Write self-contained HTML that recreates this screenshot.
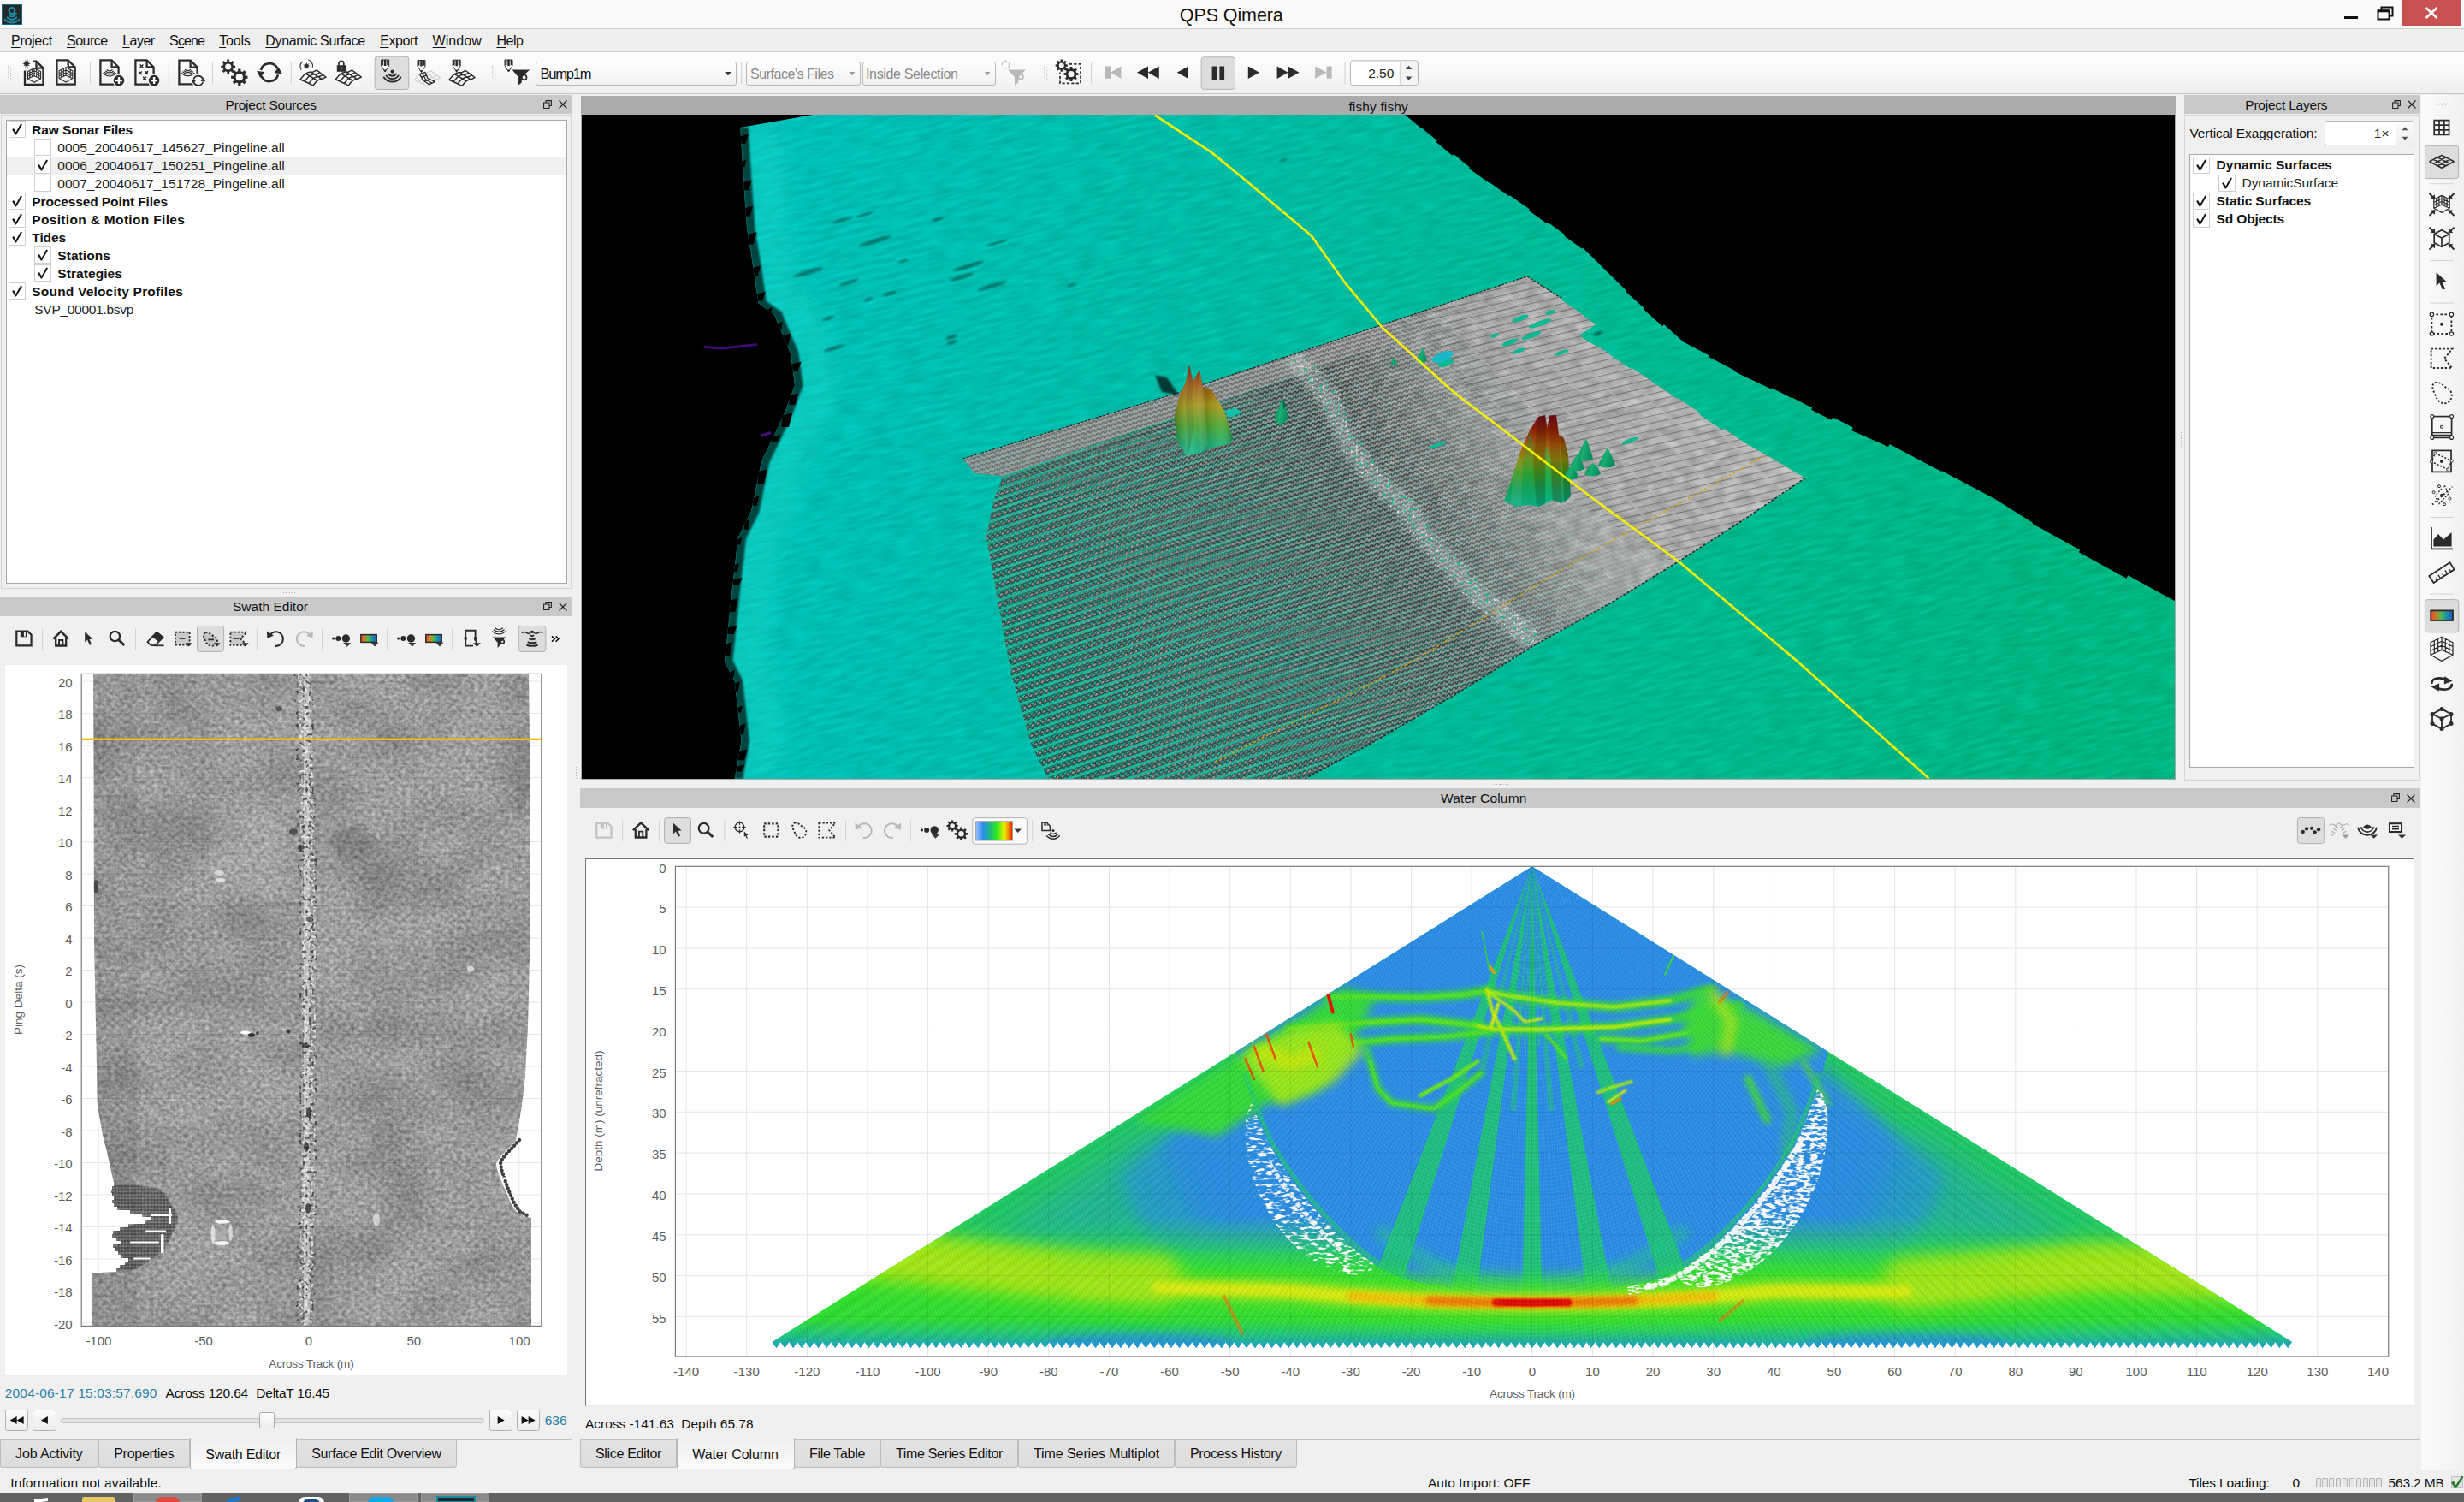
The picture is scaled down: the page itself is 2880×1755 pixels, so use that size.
<!DOCTYPE html>
<html lang="en"><head><meta charset="utf-8"><title>QPS Qimera</title><style>
html,body{margin:0;padding:0;}
body{width:2880px;height:1755px;overflow:hidden;background:#f0f0f0;font-family:"Liberation Sans", sans-serif;position:relative;}
.a{position:absolute;display:block;}
.t{position:absolute;white-space:pre;font-family:"Liberation Sans", sans-serif;}
u{text-decoration:underline;text-underline-offset:1.5px;text-decoration-thickness:1px;}
</style></head>
<body>
<div class="a" style="left:0.00px;top:0.00px;width:2880.00px;height:33.00px;background:#fafafa;"></div>
<div class="a" style="left:0.00px;top:33.00px;width:2880.00px;height:1.00px;background:#d2d2d2;"></div>
<div class="a" style="left:2.00px;top:5.00px;width:24.00px;height:24.00px;background:#262828;border:1.5px solid #0f6a82;box-sizing:border-box;"></div>
<svg class="a" style="left:2.00px;top:5.00px;" width="24.00" height="24.00" viewBox="0 0 24 24"><g fill="none" stroke="#1e8ba8" stroke-linecap="round"><ellipse cx="12" cy="7.6" rx="3.3" ry="3.6" stroke-width="2.2"/><path d="M14 10.5L17 11" stroke-width="1.8"/><path d="M8.8 13.2Q12 15.6 15.2 13.2" stroke-width="1.9"/><path d="M6.4 15.5Q12 20.2 17.6 15.5" stroke-width="1.9"/><path d="M3.8 18Q12 25 20.2 18" stroke-width="1.9"/></g></svg>
<span class="t" style="left:1378.80px;top:4.30px;font-size:21.5px;line-height:28px;color:#111;letter-spacing:-0.097px;">QPS Qimera</span>
<div class="a" style="left:2740.00px;top:18.50px;width:16.00px;height:3.60px;background:#111;"></div>
<svg class="a" style="left:2778.00px;top:6.50px;" width="20.00" height="17.00" viewBox="0 0 20 17"><path d="M5.5 4.5V1.5H18.5V11.5H15.5" fill="none" stroke="#111" stroke-width="2"/><path d="M1.5 5.5H14.5V15.5H1.5Z" fill="none" stroke="#111" stroke-width="2"/><path d="M1.5 5.8H14.5" stroke="#111" stroke-width="3"/></svg>
<div class="a" style="left:2808.00px;top:0.00px;width:68.50px;height:30.00px;background:#c75050;"></div>
<svg class="a" style="left:2834.00px;top:7.50px;" width="16.00" height="14.00" viewBox="0 0 16 14"><path d="M1.5 1L14.5 13M14.5 1L1.5 13" stroke="#fff" stroke-width="2.6" fill="none"/></svg>
<div class="a" style="left:0.00px;top:34.00px;width:2880.00px;height:25.50px;background:#efefef;"></div>
<div class="a" style="left:0.00px;top:59.50px;width:2880.00px;height:1.00px;background:#d4d4d4;"></div>
<span class="t" style="left:13.10px;top:36.70px;font-size:16px;line-height:21px;color:#111;letter-spacing:-0.300px;"><u>P</u>roject</span>
<span class="t" style="left:78.00px;top:36.70px;font-size:16px;line-height:21px;color:#111;letter-spacing:-0.501px;"><u>S</u>ource</span>
<span class="t" style="left:143.20px;top:36.70px;font-size:16px;line-height:21px;color:#111;letter-spacing:-0.526px;"><u>L</u>ayer</span>
<span class="t" style="left:198.10px;top:36.70px;font-size:16px;line-height:21px;color:#111;letter-spacing:-0.895px;">S<u>c</u>ene</span>
<span class="t" style="left:256.30px;top:36.70px;font-size:16px;line-height:21px;color:#111;letter-spacing:-0.232px;"><u>T</u>ools</span>
<span class="t" style="left:310.30px;top:36.70px;font-size:16px;line-height:21px;color:#111;letter-spacing:-0.362px;"><u>D</u>ynamic Surface</span>
<span class="t" style="left:444.20px;top:36.70px;font-size:16px;line-height:21px;color:#111;letter-spacing:-0.408px;"><u>E</u>xport</span>
<span class="t" style="left:505.60px;top:36.70px;font-size:16px;line-height:21px;color:#111;letter-spacing:0.046px;"><u>W</u>indow</span>
<span class="t" style="left:580.40px;top:36.70px;font-size:16px;line-height:21px;color:#111;letter-spacing:-0.430px;"><u>H</u>elp</span>
<div class="a" style="left:0.00px;top:60.50px;width:2880.00px;height:48.50px;background:linear-gradient(#fdfdfd,#f9f9f9 40%,#efefef);"></div>
<div class="a" style="left:0.00px;top:109.00px;width:2880.00px;height:1.00px;background:#c6c6c6;"></div>
<div class="a" style="left:0.00px;top:111.00px;width:668.00px;height:22.20px;background:#c9c9c9;"></div>
<span class="t" style="left:263.60px;top:112.60px;font-size:15.5px;line-height:20px;color:#111;letter-spacing:-0.215px;">Project Sources</span>
<svg class="a" style="left:634.50px;top:116.90px;" width="10.00" height="10.00" viewBox="0 0 10 10"><path d="M3 3V0.6H9.4V6.4H7M0.6 3H7V9.4H0.6Z" fill="none" stroke="#222" stroke-width="1.05"/></svg>
<svg class="a" style="left:652.50px;top:117.10px;" width="10.00" height="10.00" viewBox="0 0 10 10"><path d="M0.5 0.5L9.5 9.5M9.5 0.5L0.5 9.5" stroke="#222" stroke-width="1.15" fill="none"/></svg>
<div class="a" style="left:0.50px;top:134.00px;width:667.50px;height:553.50px;border:1px solid #d6d6d6;box-sizing:border-box;"></div>
<div class="a" style="left:6.50px;top:140.00px;width:656.00px;height:541.50px;background:#fff;border:1px solid #a8a8a8;box-sizing:border-box;"></div>
<div class="a" style="left:10.20px;top:141.30px;width:20.00px;height:20.00px;background:#fff;border:1px solid #cfcfcf;box-sizing:border-box;"></div>
<svg class="a" style="left:10.20px;top:141.30px;" width="20.00" height="20.00" viewBox="0 0 20 20"><path d="M4.2 10.2L6 9L8.6 13.4L14.2 3.6L16 4.4L9 16.6H7.8Z" fill="#111"/></svg>
<span class="t" style="left:37.30px;top:141.60px;font-size:15.5px;line-height:20px;color:#111;font-weight:bold;letter-spacing:-0.129px;">Raw Sonar Files</span>
<div class="a" style="left:40.30px;top:162.30px;width:20.00px;height:20.00px;background:#fff;border:1px solid #cfcfcf;box-sizing:border-box;"></div>
<span class="t" style="left:67.30px;top:162.60px;font-size:15.5px;line-height:20px;color:#222;letter-spacing:0.020px;">0005_20040617_145627_Pingeline.all</span>
<div class="a" style="left:7.50px;top:182.80px;width:654.00px;height:21.00px;background:#f0f0f0;"></div>
<div class="a" style="left:40.30px;top:183.30px;width:20.00px;height:20.00px;background:#fff;border:1px solid #cfcfcf;box-sizing:border-box;"></div>
<svg class="a" style="left:40.30px;top:183.30px;" width="20.00" height="20.00" viewBox="0 0 20 20"><path d="M4.2 10.2L6 9L8.6 13.4L14.2 3.6L16 4.4L9 16.6H7.8Z" fill="#111"/></svg>
<span class="t" style="left:67.30px;top:183.60px;font-size:15.5px;line-height:20px;color:#222;letter-spacing:0.020px;">0006_20040617_150251_Pingeline.all</span>
<div class="a" style="left:40.30px;top:204.30px;width:20.00px;height:20.00px;background:#fff;border:1px solid #cfcfcf;box-sizing:border-box;"></div>
<span class="t" style="left:67.30px;top:204.60px;font-size:15.5px;line-height:20px;color:#222;letter-spacing:0.020px;">0007_20040617_151728_Pingeline.all</span>
<div class="a" style="left:10.20px;top:225.30px;width:20.00px;height:20.00px;background:#fff;border:1px solid #cfcfcf;box-sizing:border-box;"></div>
<svg class="a" style="left:10.20px;top:225.30px;" width="20.00" height="20.00" viewBox="0 0 20 20"><path d="M4.2 10.2L6 9L8.6 13.4L14.2 3.6L16 4.4L9 16.6H7.8Z" fill="#111"/></svg>
<span class="t" style="left:37.30px;top:225.60px;font-size:15.5px;line-height:20px;color:#111;font-weight:bold;letter-spacing:-0.114px;">Processed Point Files</span>
<div class="a" style="left:10.20px;top:246.30px;width:20.00px;height:20.00px;background:#fff;border:1px solid #cfcfcf;box-sizing:border-box;"></div>
<svg class="a" style="left:10.20px;top:246.30px;" width="20.00" height="20.00" viewBox="0 0 20 20"><path d="M4.2 10.2L6 9L8.6 13.4L14.2 3.6L16 4.4L9 16.6H7.8Z" fill="#111"/></svg>
<span class="t" style="left:37.30px;top:246.60px;font-size:15.5px;line-height:20px;color:#111;font-weight:bold;letter-spacing:0.328px;">Position &amp; Motion Files</span>
<div class="a" style="left:10.20px;top:267.30px;width:20.00px;height:20.00px;background:#fff;border:1px solid #cfcfcf;box-sizing:border-box;"></div>
<svg class="a" style="left:10.20px;top:267.30px;" width="20.00" height="20.00" viewBox="0 0 20 20"><path d="M4.2 10.2L6 9L8.6 13.4L14.2 3.6L16 4.4L9 16.6H7.8Z" fill="#111"/></svg>
<span class="t" style="left:37.30px;top:267.60px;font-size:15.5px;line-height:20px;color:#111;font-weight:bold;letter-spacing:-0.101px;">Tides</span>
<div class="a" style="left:40.30px;top:288.30px;width:20.00px;height:20.00px;background:#fff;border:1px solid #cfcfcf;box-sizing:border-box;"></div>
<svg class="a" style="left:40.30px;top:288.30px;" width="20.00" height="20.00" viewBox="0 0 20 20"><path d="M4.2 10.2L6 9L8.6 13.4L14.2 3.6L16 4.4L9 16.6H7.8Z" fill="#111"/></svg>
<span class="t" style="left:67.30px;top:288.60px;font-size:15.5px;line-height:20px;color:#111;font-weight:bold;letter-spacing:0.055px;">Stations</span>
<div class="a" style="left:40.30px;top:309.30px;width:20.00px;height:20.00px;background:#fff;border:1px solid #cfcfcf;box-sizing:border-box;"></div>
<svg class="a" style="left:40.30px;top:309.30px;" width="20.00" height="20.00" viewBox="0 0 20 20"><path d="M4.2 10.2L6 9L8.6 13.4L14.2 3.6L16 4.4L9 16.6H7.8Z" fill="#111"/></svg>
<span class="t" style="left:67.30px;top:309.60px;font-size:15.5px;line-height:20px;color:#111;font-weight:bold;letter-spacing:0.075px;">Strategies</span>
<div class="a" style="left:10.20px;top:330.30px;width:20.00px;height:20.00px;background:#fff;border:1px solid #cfcfcf;box-sizing:border-box;"></div>
<svg class="a" style="left:10.20px;top:330.30px;" width="20.00" height="20.00" viewBox="0 0 20 20"><path d="M4.2 10.2L6 9L8.6 13.4L14.2 3.6L16 4.4L9 16.6H7.8Z" fill="#111"/></svg>
<span class="t" style="left:37.30px;top:330.60px;font-size:15.5px;line-height:20px;color:#111;font-weight:bold;letter-spacing:0.193px;">Sound Velocity Profiles</span>
<span class="t" style="left:40.30px;top:351.60px;font-size:15.5px;line-height:20px;color:#222;letter-spacing:-0.293px;">SVP_00001.bsvp</span>
<div class="a" style="left:328.00px;top:692.00px;width:1.20px;height:1.20px;background:#b0b0b0;"></div>
<div class="a" style="left:331.20px;top:692.00px;width:1.20px;height:1.20px;background:#b0b0b0;"></div>
<div class="a" style="left:334.40px;top:692.00px;width:1.20px;height:1.20px;background:#b0b0b0;"></div>
<div class="a" style="left:337.60px;top:692.00px;width:1.20px;height:1.20px;background:#b0b0b0;"></div>
<div class="a" style="left:340.80px;top:692.00px;width:1.20px;height:1.20px;background:#b0b0b0;"></div>
<div class="a" style="left:344.00px;top:692.00px;width:1.20px;height:1.20px;background:#b0b0b0;"></div>
<div class="a" style="left:1746.00px;top:915.60px;width:1.20px;height:1.20px;background:#b0b0b0;"></div>
<div class="a" style="left:1749.20px;top:915.60px;width:1.20px;height:1.20px;background:#b0b0b0;"></div>
<div class="a" style="left:1752.40px;top:915.60px;width:1.20px;height:1.20px;background:#b0b0b0;"></div>
<div class="a" style="left:1755.60px;top:915.60px;width:1.20px;height:1.20px;background:#b0b0b0;"></div>
<div class="a" style="left:1758.80px;top:915.60px;width:1.20px;height:1.20px;background:#b0b0b0;"></div>
<div class="a" style="left:1762.00px;top:915.60px;width:1.20px;height:1.20px;background:#b0b0b0;"></div>
<div class="a" style="left:2548.60px;top:505.00px;width:1.20px;height:1.20px;background:#b8b8b8;"></div>
<div class="a" style="left:673.00px;top:896.00px;width:1.20px;height:1.20px;background:#b8b8b8;"></div>
<div class="a" style="left:2548.60px;top:508.20px;width:1.20px;height:1.20px;background:#b8b8b8;"></div>
<div class="a" style="left:673.00px;top:899.20px;width:1.20px;height:1.20px;background:#b8b8b8;"></div>
<div class="a" style="left:2548.60px;top:511.40px;width:1.20px;height:1.20px;background:#b8b8b8;"></div>
<div class="a" style="left:673.00px;top:902.40px;width:1.20px;height:1.20px;background:#b8b8b8;"></div>
<div class="a" style="left:2548.60px;top:514.60px;width:1.20px;height:1.20px;background:#b8b8b8;"></div>
<div class="a" style="left:673.00px;top:905.60px;width:1.20px;height:1.20px;background:#b8b8b8;"></div>
<div class="a" style="left:2548.60px;top:517.80px;width:1.20px;height:1.20px;background:#b8b8b8;"></div>
<div class="a" style="left:673.00px;top:908.80px;width:1.20px;height:1.20px;background:#b8b8b8;"></div>
<div class="a" style="left:2548.60px;top:521.00px;width:1.20px;height:1.20px;background:#b8b8b8;"></div>
<div class="a" style="left:673.00px;top:912.00px;width:1.20px;height:1.20px;background:#b8b8b8;"></div>
<div class="a" style="left:0.00px;top:697.20px;width:668.00px;height:22.80px;background:#c9c9c9;"></div>
<span class="t" style="left:272.00px;top:699.10px;font-size:15.5px;line-height:20px;color:#111;letter-spacing:0.009px;">Swath Editor</span>
<svg class="a" style="left:634.50px;top:703.40px;" width="10.00" height="10.00" viewBox="0 0 10 10"><path d="M3 3V0.6H9.4V6.4H7M0.6 3H7V9.4H0.6Z" fill="none" stroke="#222" stroke-width="1.05"/></svg>
<svg class="a" style="left:652.50px;top:703.60px;" width="10.00" height="10.00" viewBox="0 0 10 10"><path d="M0.5 0.5L9.5 9.5M9.5 0.5L0.5 9.5" stroke="#222" stroke-width="1.15" fill="none"/></svg>
<span class="t" style="left:5.80px;top:1617.50px;font-size:15.5px;line-height:20px;color:#2a7fa8;letter-spacing:0.160px;">2004-06-17 15:03:57.690</span>
<span class="t" style="left:193.50px;top:1617.50px;font-size:15.5px;line-height:20px;color:#111;letter-spacing:-0.200px;">Across 120.64</span>
<span class="t" style="left:299.30px;top:1617.50px;font-size:15.5px;line-height:20px;color:#111;letter-spacing:-0.231px;">DeltaT 16.45</span>
<div class="a" style="left:6.00px;top:1646.60px;width:27.30px;height:25.80px;background:linear-gradient(#fbfbfb,#ececec);border:1px solid #b4b4b4;box-sizing:border-box;border-radius:2.5px;"></div>
<svg class="a" style="left:0;top:0" width="700" height="1755"><path d="M19.65 1654.9V1664.1L11.649999999999999 1659.5ZM27.65 1654.9V1664.1L19.65 1659.5Z" fill="#111"/></svg>
<div class="a" style="left:38.20px;top:1646.60px;width:27.40px;height:25.80px;background:linear-gradient(#fbfbfb,#ececec);border:1px solid #b4b4b4;box-sizing:border-box;border-radius:2.5px;"></div>
<svg class="a" style="left:0;top:0" width="700" height="1755"><path d="M55.9 1654.9V1664.1L47.9 1659.5Z" fill="#111"/></svg>
<div class="a" style="left:572.20px;top:1646.60px;width:27.00px;height:25.80px;background:linear-gradient(#fbfbfb,#ececec);border:1px solid #b4b4b4;box-sizing:border-box;border-radius:2.5px;"></div>
<svg class="a" style="left:0;top:0" width="700" height="1755"><path d="M581.7 1654.9V1664.1L589.7 1659.5Z" fill="#111"/></svg>
<div class="a" style="left:603.80px;top:1646.60px;width:27.70px;height:25.80px;background:linear-gradient(#fbfbfb,#ececec);border:1px solid #b4b4b4;box-sizing:border-box;border-radius:2.5px;"></div>
<svg class="a" style="left:0;top:0" width="700" height="1755"><path d="M617.65 1654.9V1664.1L625.65 1659.5ZM609.65 1654.9V1664.1L617.65 1659.5Z" fill="#111"/></svg>
<div class="a" style="left:71.20px;top:1656.50px;width:495.00px;height:6.50px;background:linear-gradient(#dcdcdc,#efefef);border:1px solid #c4c4c4;box-sizing:border-box;border-radius:3px;"></div>
<div class="a" style="left:302.60px;top:1649.50px;width:18.80px;height:19.50px;background:linear-gradient(#fdfdfd,#ededed);border:1px solid #a8a8a8;box-sizing:border-box;border-radius:2.5px;"></div>
<span class="t" style="left:636.80px;top:1650.00px;font-size:15.5px;line-height:20px;color:#2a7fa8;letter-spacing:-0.058px;">636</span>
<div class="a" style="left:0.00px;top:1681.00px;width:668.00px;height:1.00px;background:#c2c2c2;"></div>
<div class="a" style="left:0.00px;top:1681.50px;width:115.40px;height:33.00px;background:linear-gradient(#e3e3e3,#dcdcdc);border:1px solid #bdbdbd;box-sizing:border-box;border-top:none;border-radius:0 0 3px 3px;"></div>
<span class="t" style="left:18.00px;top:1687.70px;font-size:16px;line-height:21px;color:#111;letter-spacing:-0.119px;">Job Activity</span>
<div class="a" style="left:115.40px;top:1681.50px;width:106.70px;height:33.00px;background:linear-gradient(#e3e3e3,#dcdcdc);border:1px solid #bdbdbd;box-sizing:border-box;border-top:none;border-radius:0 0 3px 3px;"></div>
<span class="t" style="left:133.20px;top:1687.70px;font-size:16px;line-height:21px;color:#111;letter-spacing:-0.272px;">Properties</span>
<div class="a" style="left:346.40px;top:1681.50px;width:187.20px;height:33.00px;background:linear-gradient(#e3e3e3,#dcdcdc);border:1px solid #bdbdbd;box-sizing:border-box;border-top:none;border-radius:0 0 3px 3px;"></div>
<span class="t" style="left:364.20px;top:1687.70px;font-size:16px;line-height:21px;color:#111;letter-spacing:-0.318px;">Surface Edit Overview</span>
<div class="a" style="left:221.60px;top:1679.50px;width:125.30px;height:37.50px;background:linear-gradient(#f0f0f0,#fbfbfb);border:1px solid #b4b4b4;box-sizing:border-box;border-top:none;border-radius:0 0 3px 3px;"></div>
<span class="t" style="left:240.30px;top:1689.00px;font-size:16px;line-height:21px;color:#111;letter-spacing:-0.252px;">Swath Editor</span>
<div class="a" style="left:678.70px;top:111.50px;width:1864.30px;height:22.50px;background:#ababab;"></div>
<span class="t" style="left:1576.40px;top:114.50px;font-size:15.5px;line-height:20px;color:#111;letter-spacing:0.140px;">fishy fishy</span>
<div class="a" style="left:678.70px;top:134.00px;width:1864.30px;height:777.00px;background:#a9a9a9;"></div>
<div class="a" style="left:678.00px;top:921.30px;width:2150.00px;height:22.70px;background:#c9c9c9;"></div>
<span class="t" style="left:1684.00px;top:923.15px;font-size:15.5px;line-height:20px;color:#111;letter-spacing:0.168px;">Water Column</span>
<svg class="a" style="left:2794.50px;top:927.45px;" width="10.00" height="10.00" viewBox="0 0 10 10"><path d="M3 3V0.6H9.4V6.4H7M0.6 3H7V9.4H0.6Z" fill="none" stroke="#222" stroke-width="1.05"/></svg>
<svg class="a" style="left:2812.50px;top:927.65px;" width="10.00" height="10.00" viewBox="0 0 10 10"><path d="M0.5 0.5L9.5 9.5M9.5 0.5L0.5 9.5" stroke="#222" stroke-width="1.15" fill="none"/></svg>
<div class="a" style="left:684.00px;top:1003.00px;width:2138.00px;height:639.50px;background:#fff;box-sizing:border-box;border-left:1.5px solid #767676;border-top:1.5px solid #767676;border-right:1px solid #b8b8b8;border-bottom:1px solid #e8e8e8;"></div>
<span class="t" style="left:684.00px;top:1653.80px;font-size:15.5px;line-height:20px;color:#111;letter-spacing:-0.031px;">Across -141.63  Depth 65.78</span>
<div class="a" style="left:678.00px;top:1681.00px;width:2150.50px;height:1.00px;background:#c2c2c2;"></div>
<div class="a" style="left:678.30px;top:1681.50px;width:113.00px;height:33.00px;background:linear-gradient(#e3e3e3,#dcdcdc);border:1px solid #bdbdbd;box-sizing:border-box;border-top:none;border-radius:0 0 3px 3px;"></div>
<span class="t" style="left:696.00px;top:1687.70px;font-size:16px;line-height:21px;color:#111;letter-spacing:-0.327px;">Slice Editor</span>
<div class="a" style="left:928.40px;top:1681.50px;width:100.90px;height:33.00px;background:linear-gradient(#e3e3e3,#dcdcdc);border:1px solid #bdbdbd;box-sizing:border-box;border-top:none;border-radius:0 0 3px 3px;"></div>
<span class="t" style="left:946.00px;top:1687.70px;font-size:16px;line-height:21px;color:#111;letter-spacing:-0.319px;">File Table</span>
<div class="a" style="left:1029.30px;top:1681.50px;width:160.90px;height:33.00px;background:linear-gradient(#e3e3e3,#dcdcdc);border:1px solid #bdbdbd;box-sizing:border-box;border-top:none;border-radius:0 0 3px 3px;"></div>
<span class="t" style="left:1047.00px;top:1687.70px;font-size:16px;line-height:21px;color:#111;letter-spacing:-0.333px;">Time Series Editor</span>
<div class="a" style="left:1190.20px;top:1681.50px;width:183.20px;height:33.00px;background:linear-gradient(#e3e3e3,#dcdcdc);border:1px solid #bdbdbd;box-sizing:border-box;border-top:none;border-radius:0 0 3px 3px;"></div>
<span class="t" style="left:1208.00px;top:1687.70px;font-size:16px;line-height:21px;color:#111;letter-spacing:-0.085px;">Time Series Multiplot</span>
<div class="a" style="left:1373.40px;top:1681.50px;width:142.20px;height:33.00px;background:linear-gradient(#e3e3e3,#dcdcdc);border:1px solid #bdbdbd;box-sizing:border-box;border-top:none;border-radius:0 0 3px 3px;"></div>
<span class="t" style="left:1391.00px;top:1687.70px;font-size:16px;line-height:21px;color:#111;letter-spacing:-0.335px;">Process History</span>
<div class="a" style="left:790.80px;top:1679.50px;width:138.10px;height:37.50px;background:linear-gradient(#f0f0f0,#fbfbfb);border:1px solid #b4b4b4;box-sizing:border-box;border-top:none;border-radius:0 0 3px 3px;"></div>
<span class="t" style="left:809.30px;top:1689.00px;font-size:16px;line-height:21px;color:#111;letter-spacing:-0.105px;">Water Column</span>
<div class="a" style="left:2553.00px;top:111.00px;width:276.00px;height:22.20px;background:#c9c9c9;"></div>
<span class="t" style="left:2624.30px;top:112.60px;font-size:15.5px;line-height:20px;color:#111;letter-spacing:-0.213px;">Project Layers</span>
<svg class="a" style="left:2795.50px;top:116.90px;" width="10.00" height="10.00" viewBox="0 0 10 10"><path d="M3 3V0.6H9.4V6.4H7M0.6 3H7V9.4H0.6Z" fill="none" stroke="#222" stroke-width="1.05"/></svg>
<svg class="a" style="left:2813.50px;top:117.10px;" width="10.00" height="10.00" viewBox="0 0 10 10"><path d="M0.5 0.5L9.5 9.5M9.5 0.5L0.5 9.5" stroke="#222" stroke-width="1.15" fill="none"/></svg>
<div class="a" style="left:2553.00px;top:134.00px;width:275.00px;height:777.50px;border:1px solid #d6d6d6;box-sizing:border-box;"></div>
<span class="t" style="left:2559.40px;top:146.40px;font-size:15.5px;line-height:20px;color:#111;letter-spacing:-0.077px;">Vertical Exaggeration:</span>
<div class="a" style="left:2717.00px;top:140.50px;width:104.70px;height:29.50px;background:#fff;border:1px solid #b9b9b9;box-sizing:border-box;border-radius:3px;"></div>
<div class="a" style="left:2800.00px;top:141.50px;width:1.00px;height:27.50px;background:#cfcfcf;"></div>
<div class="a" style="left:2801.00px;top:141.50px;width:19.70px;height:27.50px;background:linear-gradient(#fcfcfc,#eee);border-radius:0 3px 3px 0;"></div>
<svg class="a" style="left:2805.00px;top:146.00px;" width="12.00" height="20.00" viewBox="0 0 12 20"><path d="M2.5 6.2L6 2.2L9.5 6.2ZM2.5 13.8L6 17.8L9.5 13.8Z" fill="#555"/></svg>
<span class="t" style="left:2774.81px;top:145.60px;font-size:15.5px;line-height:20px;color:#222;">1×</span>
<div class="a" style="left:2559.40px;top:180.00px;width:262.40px;height:716.50px;background:#fff;border:1px solid #a8a8a8;box-sizing:border-box;"></div>
<div class="a" style="left:2563.20px;top:182.60px;width:20.00px;height:20.00px;background:#fff;border:1px solid #cfcfcf;box-sizing:border-box;"></div>
<svg class="a" style="left:2563.20px;top:182.60px;" width="20.00" height="20.00" viewBox="0 0 20 20"><path d="M4.2 10.2L6 9L8.6 13.4L14.2 3.6L16 4.4L9 16.6H7.8Z" fill="#111"/></svg>
<span class="t" style="left:2590.60px;top:182.90px;font-size:15.5px;line-height:20px;color:#111;font-weight:bold;letter-spacing:0.050px;">Dynamic Surfaces</span>
<div class="a" style="left:2593.30px;top:203.60px;width:20.00px;height:20.00px;background:#fff;border:1px solid #cfcfcf;box-sizing:border-box;"></div>
<svg class="a" style="left:2593.30px;top:203.60px;" width="20.00" height="20.00" viewBox="0 0 20 20"><path d="M4.2 10.2L6 9L8.6 13.4L14.2 3.6L16 4.4L9 16.6H7.8Z" fill="#111"/></svg>
<span class="t" style="left:2620.60px;top:203.90px;font-size:15.5px;line-height:20px;color:#222;letter-spacing:-0.094px;">DynamicSurface</span>
<div class="a" style="left:2563.20px;top:224.60px;width:20.00px;height:20.00px;background:#fff;border:1px solid #cfcfcf;box-sizing:border-box;"></div>
<svg class="a" style="left:2563.20px;top:224.60px;" width="20.00" height="20.00" viewBox="0 0 20 20"><path d="M4.2 10.2L6 9L8.6 13.4L14.2 3.6L16 4.4L9 16.6H7.8Z" fill="#111"/></svg>
<span class="t" style="left:2590.60px;top:224.90px;font-size:15.5px;line-height:20px;color:#111;font-weight:bold;letter-spacing:-0.107px;">Static Surfaces</span>
<div class="a" style="left:2563.20px;top:245.60px;width:20.00px;height:20.00px;background:#fff;border:1px solid #cfcfcf;box-sizing:border-box;"></div>
<svg class="a" style="left:2563.20px;top:245.60px;" width="20.00" height="20.00" viewBox="0 0 20 20"><path d="M4.2 10.2L6 9L8.6 13.4L14.2 3.6L16 4.4L9 16.6H7.8Z" fill="#111"/></svg>
<span class="t" style="left:2590.60px;top:245.90px;font-size:15.5px;line-height:20px;color:#111;font-weight:bold;letter-spacing:-0.157px;">Sd Objects</span>
<div class="a" style="left:2828.30px;top:111.00px;width:1.20px;height:1606.50px;background:#c4c4c4;"></div>
<div class="a" style="left:2829.50px;top:111.00px;width:50.50px;height:1606.50px;background:linear-gradient(90deg,#fbfbfb,#f1f1f1);"></div>
<span class="t" style="left:12.20px;top:1723.00px;font-size:15.5px;line-height:20px;color:#111;letter-spacing:0.135px;">Information not available.</span>
<span class="t" style="left:1669.00px;top:1723.00px;font-size:15.5px;line-height:20px;color:#111;letter-spacing:-0.015px;">Auto Import: OFF</span>
<span class="t" style="left:2558.30px;top:1723.00px;font-size:15.5px;line-height:20px;color:#111;letter-spacing:-0.117px;">Tiles Loading:</span>
<span class="t" style="left:2679.50px;top:1723.00px;font-size:15.5px;line-height:20px;color:#111;letter-spacing:0.875px;">0</span>
<div class="a" style="left:2706.50px;top:1726.50px;width:6.20px;height:11.00px;background:#e6e6e6;border:1px solid #b4b4b4;box-sizing:border-box;border-radius:1px;"></div>
<div class="a" style="left:2714.37px;top:1726.50px;width:6.20px;height:11.00px;background:#e6e6e6;border:1px solid #b4b4b4;box-sizing:border-box;border-radius:1px;"></div>
<div class="a" style="left:2722.24px;top:1726.50px;width:6.20px;height:11.00px;background:#e6e6e6;border:1px solid #b4b4b4;box-sizing:border-box;border-radius:1px;"></div>
<div class="a" style="left:2730.11px;top:1726.50px;width:6.20px;height:11.00px;background:#e6e6e6;border:1px solid #b4b4b4;box-sizing:border-box;border-radius:1px;"></div>
<div class="a" style="left:2737.98px;top:1726.50px;width:6.20px;height:11.00px;background:#e6e6e6;border:1px solid #b4b4b4;box-sizing:border-box;border-radius:1px;"></div>
<div class="a" style="left:2745.85px;top:1726.50px;width:6.20px;height:11.00px;background:#e6e6e6;border:1px solid #b4b4b4;box-sizing:border-box;border-radius:1px;"></div>
<div class="a" style="left:2753.72px;top:1726.50px;width:6.20px;height:11.00px;background:#e6e6e6;border:1px solid #b4b4b4;box-sizing:border-box;border-radius:1px;"></div>
<div class="a" style="left:2761.59px;top:1726.50px;width:6.20px;height:11.00px;background:#e6e6e6;border:1px solid #b4b4b4;box-sizing:border-box;border-radius:1px;"></div>
<div class="a" style="left:2769.46px;top:1726.50px;width:6.20px;height:11.00px;background:#e6e6e6;border:1px solid #b4b4b4;box-sizing:border-box;border-radius:1px;"></div>
<div class="a" style="left:2777.33px;top:1726.50px;width:6.20px;height:11.00px;background:#e6e6e6;border:1px solid #b4b4b4;box-sizing:border-box;border-radius:1px;"></div>
<span class="t" style="left:2791.50px;top:1723.00px;font-size:15.5px;line-height:20px;color:#111;letter-spacing:-0.145px;">563.2 MB</span>
<div class="a" style="left:2864.50px;top:1725.00px;width:14.00px;height:14.00px;background:#e4e4e4;border:1px solid #c0c0c0;box-sizing:border-box;"></div>
<svg class="a" style="left:2862.00px;top:1722.00px;" width="20.00" height="20.00" viewBox="0 0 20 20"><path d="M3 10.5L6 8.5L8.5 13L15.5 2.5L17.5 4L9 17H7.5Z" fill="#2e7d32"/></svg>
<div class="a" style="left:0.00px;top:1744.00px;width:2880.00px;height:11.00px;background:#626262;"></div>
<div class="a" style="left:156.00px;top:1744.60px;width:80.00px;height:10.40px;background:#8a8a8a;border:1px solid #9c9c9c;box-sizing:border-box;"></div>
<div class="a" style="left:408.00px;top:1744.60px;width:80.00px;height:10.40px;background:#8a8a8a;border:1px solid #9c9c9c;box-sizing:border-box;"></div>
<div class="a" style="left:492.00px;top:1744.60px;width:80.00px;height:10.40px;background:#8a8a8a;border:1px solid #9c9c9c;box-sizing:border-box;"></div>
<div class="a" style="left:40.00px;top:1751.00px;width:16.00px;height:4.00px;background:#fff;transform:skewY(-8deg);"></div>
<div class="a" style="left:96.00px;top:1749.00px;width:38.00px;height:6.00px;background:#e8c860;border-radius:2px 2px 0 0;"></div>
<div class="a" style="left:182.00px;top:1748.50px;width:28.00px;height:14.00px;background:#e04a3f;border-radius:14px;"></div>
<div class="a" style="left:266.00px;top:1750.00px;width:14.00px;height:5.00px;background:#1a78d0;transform:skewY(-12deg);"></div>
<div class="a" style="left:349.00px;top:1748.50px;width:30.00px;height:14.00px;background:#fff;border-radius:15px;"></div>
<div class="a" style="left:354.00px;top:1751.50px;width:20.00px;height:10.00px;background:#1d4f86;border-radius:10px;"></div>
<div class="a" style="left:430.00px;top:1748.50px;width:30.00px;height:14.00px;background:#10a8e8;border-radius:15px;"></div>
<div class="a" style="left:510.00px;top:1747.50px;width:46.00px;height:8.00px;background:#1d2b30;border:2px solid #1a8aa0;box-sizing:border-box;"></div>
<svg class="a" style="left:680.00px;top:134.00px;" width="1862.00" height="776.00" viewBox="680 134 1862 776"><defs>
<linearGradient id="tealg" gradientUnits="userSpaceOnUse" x1="900" y1="250" x2="2350" y2="850">
<stop offset="0" stop-color="#08c0b8"/><stop offset="0.3" stop-color="#06bca8"/><stop offset="0.55" stop-color="#05ba98"/><stop offset="1" stop-color="#04b682"/></linearGradient>
<filter id="tex" filterUnits="userSpaceOnUse" x="-400" y="-600" width="3800" height="2800" color-interpolation-filters="sRGB">
<feTurbulence type="fractalNoise" baseFrequency="0.035 0.2" numOctaves="2" seed="11" result="n"/>
<feColorMatrix in="n" type="matrix" values="0 0 0 0 0  0.9 0 0 0 0  0.9 0 0 0 0  0 0 0 0 1" result="g"/>
<feComposite in="SourceGraphic" in2="g" operator="arithmetic" k1="0" k2="1" k3="0.17" k4="-0.078"/>
</filter>
<filter id="tex2" filterUnits="userSpaceOnUse" x="600" y="100" width="2000" height="900" color-interpolation-filters="sRGB">
<feTurbulence type="fractalNoise" baseFrequency="0.06 0.09" numOctaves="2" seed="5" result="n"/>
<feColorMatrix in="n" type="matrix" values="0.9 0 0 0 0  0.9 0 0 0 0  0.9 0 0 0 0  0 0 0 0 1" result="g"/>
<feComposite in="SourceGraphic" in2="g" operator="arithmetic" k1="0" k2="1" k3="0.3" k4="-0.14"/>
</filter>
<filter id="b2"><feGaussianBlur stdDeviation="2"/></filter>
<filter id="b1"><feGaussianBlur stdDeviation="1"/></filter>
<filter id="b4"><feGaussianBlur stdDeviation="4"/></filter>
<filter id="b8" filterUnits="userSpaceOnUse" x="680" y="100" width="700" height="850"><feGaussianBlur stdDeviation="12"/></filter>
<pattern id="dots" patternUnits="userSpaceOnUse" width="6.4" height="5.6" patternTransform="rotate(-18) skewX(-24)">
<path d="M0.7 4.6Q0.7 0.8 3.2 0.8Q5.7 0.8 5.7 4.6Z" fill="#979797" stroke="#262626" stroke-width="1"/></pattern>
<pattern id="dots2" patternUnits="userSpaceOnUse" width="6.2" height="5.2" patternTransform="rotate(-17) skewX(-20)">
<path d="M0.8 4.2Q0.8 1.4 3.1 1.4Q5.4 1.4 5.4 4.2" fill="none" stroke="#181818" stroke-width="1.5"/></pattern>
<pattern id="plines" patternUnits="userSpaceOnUse" width="40" height="8.4" patternTransform="rotate(-13)">
<rect x="0" y="0" width="40" height="1.1" fill="#2a2a2a"/></pattern>
<linearGradient id="gfade" gradientUnits="userSpaceOnUse" x1="1750" y1="420" x2="1330" y2="860">
<stop offset="0" stop-color="#fff" stop-opacity="1"/><stop offset="0.35" stop-color="#fff" stop-opacity="0.9"/><stop offset="0.6" stop-color="#fff" stop-opacity="0.45"/><stop offset="1" stop-color="#fff" stop-opacity="0.18"/></linearGradient>
<mask id="gmask" maskUnits="userSpaceOnUse" x="680" y="134" width="1862" height="776"><rect x="680" y="134" width="1862" height="776" fill="url(#gfade)"/></mask>
<linearGradient id="dfade" gradientUnits="userSpaceOnUse" x1="1780" y1="430" x2="1240" y2="900">
<stop offset="0" stop-color="#fff" stop-opacity="0"/><stop offset="0.25" stop-color="#fff" stop-opacity="0.14"/><stop offset="0.5" stop-color="#fff" stop-opacity="0.45"/><stop offset="0.75" stop-color="#fff" stop-opacity="0.8"/><stop offset="1" stop-color="#fff" stop-opacity="1"/></linearGradient>
<linearGradient id="ofade" gradientUnits="userSpaceOnUse" x1="1960" y1="400" x2="1620" y2="580">
<stop offset="0" stop-color="#fff" stop-opacity="0"/><stop offset="0.55" stop-color="#fff" stop-opacity="0.2"/><stop offset="1" stop-color="#fff" stop-opacity="1"/></linearGradient>
<mask id="omask" maskUnits="userSpaceOnUse" x="680" y="134" width="1862" height="776"><rect x="680" y="134" width="1862" height="776" fill="url(#ofade)"/></mask>
<mask id="dmask" maskUnits="userSpaceOnUse" x="680" y="134" width="1862" height="776"><rect x="680" y="134" width="1862" height="776" fill="url(#dfade)"/></mask>
<linearGradient id="pk1" x1="0" y1="0" x2="0" y2="1"><stop offset="0" stop-color="#74200a"/><stop offset="0.2" stop-color="#a0540e"/><stop offset="0.45" stop-color="#a89a14"/><stop offset="0.68" stop-color="#4aa830"/><stop offset="0.88" stop-color="#18b070"/><stop offset="1" stop-color="#10b890"/></linearGradient>
<linearGradient id="pk2" x1="0" y1="0" x2="0" y2="1"><stop offset="0" stop-color="#6e0c1c"/><stop offset="0.16" stop-color="#8a2006"/><stop offset="0.32" stop-color="#a05a0c"/><stop offset="0.48" stop-color="#8c8c10"/><stop offset="0.64" stop-color="#3c9a24"/><stop offset="0.82" stop-color="#14a05c"/><stop offset="1" stop-color="#0eb088"/></linearGradient>
<linearGradient id="pkshade" x1="0" y1="0" x2="1" y2="0"><stop offset="0" stop-color="#000" stop-opacity="0.28"/><stop offset="0.3" stop-color="#fff" stop-opacity="0.12"/><stop offset="0.55" stop-color="#000" stop-opacity="0.15"/><stop offset="0.8" stop-color="#fff" stop-opacity="0.08"/><stop offset="1" stop-color="#000" stop-opacity="0.3"/></linearGradient>
<linearGradient id="cone" x1="0" y1="0" x2="1" y2="0.3"><stop offset="0" stop-color="#0a7a50"/><stop offset="0.5" stop-color="#18b070"/><stop offset="1" stop-color="#0a8a60"/></linearGradient>
<pattern id="tstripe2" patternUnits="userSpaceOnUse" width="40" height="11.2" patternTransform="rotate(-19)">
<rect x="0" y="0" width="40" height="3.1" fill="#12c4a4"/></pattern>
<pattern id="tstripe" patternUnits="userSpaceOnUse" width="40" height="16.8" patternTransform="rotate(-18)">
<rect x="0" y="0" width="40" height="2.6" fill="#14d0b0"/></pattern>
<filter id="speck" filterUnits="userSpaceOnUse" x="1450" y="380" width="400" height="420">
<feTurbulence type="fractalNoise" baseFrequency="0.33" numOctaves="1" seed="3" result="n"/>
<feColorMatrix in="n" type="matrix" values="0 0 0 0 1  0 0 0 0 1  0 0 0 0 1  9 0 0 0 -5.5" result="m"/>
<feComposite in="SourceGraphic" in2="m" operator="in"/></filter>
<filter id="speck2" filterUnits="userSpaceOnUse" x="1450" y="380" width="400" height="420">
<feTurbulence type="fractalNoise" baseFrequency="0.3" numOctaves="1" seed="9" result="n"/>
<feColorMatrix in="n" type="matrix" values="0 0 0 0 1  0 0 0 0 1  0 0 0 0 1  0 9 0 0 -5.4" result="m"/>
<feComposite in="SourceGraphic" in2="m" operator="in"/></filter>
</defs>
<rect x="680" y="134" width="1862" height="776" fill="#000"/>
<clipPath id="tealclip"><polygon points="950.5,134.0 1641.0,134.0 1641.4,133.5 1660.4,149.2 1660.9,148.7 1679.9,164.4 1678.6,166.0 1697.6,181.7 1699.1,179.9 1718.1,195.7 1716.9,197.1 1740.3,213.5 1740.6,212.9 1764.0,229.2 1764.7,228.2 1788.0,244.6 1787.0,246.0 1807.6,261.0 1808.8,259.5 1829.4,274.5 1828.5,275.8 1849.2,290.8 1850.2,289.8 1875.7,314.8 1875.6,314.8 1901.1,339.8 1900.2,340.8 1922.2,360.4 1921.1,361.6 1943.1,381.3 1945.0,379.2 1967.0,398.9 1966.5,399.0 1998.0,415.5 1997.3,417.0 2028.8,433.5 2028.2,434.6 2070.2,454.6 2070.9,453.3 2094.4,465.3 2094.7,464.6 2118.2,476.6 2117.1,478.7 2140.6,490.7 2142.3,487.4 2165.8,499.4 2164.1,503.0 2207.1,522.0 2208.6,518.9 2269.1,550.9 2269.5,550.1 2330.0,582.1 2330.2,582.1 2376.2,611.1 2375.6,612.0 2431.2,642.5 2429.8,645.2 2485.4,675.7 2487.3,672.3 2542.9,702.8 2542.0,910.0 858.7,910.0 866.5,866.0 858.7,796.0 847.0,772.7 855.0,695.0 862.6,628.6 878.0,597.0 890.0,539.0 909.0,500.0 918.0,480.0 929.0,450.0 924.0,413.0 915.0,392.0 905.0,367.8 886.6,354.5 880.0,310.0 873.0,266.5 869.0,210.0 865.3,149.0"/></clipPath>
<g clip-path="url(#tealclip)">
<g transform="rotate(-14 1600 500)"><rect x="200" y="-300" width="2900" height="1900" fill="url(#tealg)" filter="url(#tex)"/></g>
<polyline points="891.3,149.0 895.0,210.0 899.0,266.5 906.0,310.0 912.6,354.5 931.0,367.8 941.0,392.0 950.0,413.0 955.0,450.0 944.0,480.0 935.0,500.0 916.0,539.0 904.0,597.0 888.6,628.6 881.0,695.0 873.0,772.7 884.7,796.0 892.5,866.0 884.7,910.0" fill="none" stroke="#30f0e0" stroke-opacity="0.2" stroke-width="50" filter="url(#b8)"/>
<polyline points="869.8,149.0 873.5,210.0 877.5,266.5 884.5,310.0 891.1,354.5 909.5,367.8 919.5,392.0 928.5,413.0 933.5,450.0 922.5,480.0 913.5,500.0 894.5,539.0 882.5,597.0 867.1,628.6 859.5,695.0 851.5,772.7 863.2,796.0 871.0,866.0 863.2,910.0" fill="none" stroke="#04302c" stroke-opacity="0.85" stroke-width="10" filter="url(#b1)"/>
<path d="M863.9 159.6L875.1 156.6L871.4 168.0L863.9 168.0Z" fill="#000"/>
<path d="M865.8 189.5L872.3 186.5L870.5 195.1L865.8 195.1Z" fill="#000"/>
<path d="M867.2 213.5L878.7 210.5L874.9 222.3L867.2 222.3Z" fill="#000"/>
<path d="M869.4 243.6L880.1 240.6L876.6 252.7L869.4 252.7Z" fill="#000"/>
<path d="M872.3 274.3L884.6 271.3L880.5 285.6L872.3 285.6Z" fill="#000"/>
<path d="M878.5 313.3L889.1 310.3L885.6 323.0L878.5 323.0Z" fill="#000"/>
<path d="M883.0 343.9L894.9 340.9L890.9 351.5L883.0 351.5Z" fill="#000"/>
<path d="M895.4 362.3L902.4 359.3L900.4 371.1L895.4 371.1Z" fill="#000"/>
<path d="M907.5 378.8L914.8 375.8L912.7 388.2L907.5 388.2Z" fill="#000"/>
<path d="M913.2 392.5L924.6 389.5L920.8 404.4L913.2 404.4Z" fill="#000"/>
<path d="M923.7 425.7L936.7 422.7L932.3 433.5L923.7 433.5Z" fill="#000"/>
<path d="M922.4 462.5L933.2 459.5L929.7 472.7L922.4 472.7Z" fill="#000"/>
<path d="M913.5 485.5L926.3 482.5L922.0 499.0L913.5 499.0Z" fill="#000"/>
<path d="M901.6 511.1L912.9 508.1L909.2 516.6L901.6 516.6Z" fill="#000"/>
<path d="M885.5 551.2L896.7 548.2L893.0 565.1L885.5 565.1Z" fill="#000"/>
<path d="M879.0 582.3L887.3 579.3L884.8 590.8L879.0 590.8Z" fill="#000"/>
<path d="M869.8 609.7L876.0 606.7L874.3 618.8L869.8 618.8Z" fill="#000"/>
<path d="M860.3 630.8L867.3 627.8L865.3 636.4L860.3 636.4Z" fill="#000"/>
<path d="M856.9 660.9L863.9 657.9L861.9 668.2L856.9 668.2Z" fill="#000"/>
<path d="M854.9 678.1L867.9 675.1L863.5 683.8L854.9 683.8Z" fill="#000"/>
<path d="M852.3 702.0L862.7 699.0L859.3 714.9L852.3 714.9Z" fill="#000"/>
<path d="M849.0 733.6L861.9 730.6L857.6 741.1L849.0 741.1Z" fill="#000"/>
<path d="M847.0 753.3L855.9 750.3L853.1 766.2L847.0 766.2Z" fill="#000"/>
<path d="M851.7 786.1L858.9 783.1L856.8 792.7L851.7 792.7Z" fill="#000"/>
<path d="M857.1 799.2L864.9 796.2L862.6 808.6L857.1 808.6Z" fill="#000"/>
<path d="M860.2 827.6L868.3 824.6L865.9 832.6L860.2 832.6Z" fill="#000"/>
<path d="M862.6 848.5L871.5 845.5L868.7 858.6L862.6 858.6Z" fill="#000"/>
<path d="M862.3 878.6L873.8 875.6L870.0 888.2L862.3 888.2Z" fill="#000"/>
<path d="M859.2 896.2L870.6 893.2L866.8 901.6L859.2 901.6Z" fill="#000"/>
<ellipse cx="985" cy="257" rx="12.6" ry="1.9" transform="rotate(-17 985 257)" fill="#034a44" fill-opacity="0.62" filter="url(#b1)"/>
<ellipse cx="1010" cy="251" rx="10.8" ry="1.6" transform="rotate(-17 1010 251)" fill="#034a44" fill-opacity="0.62" filter="url(#b1)"/>
<ellipse cx="1022" cy="282" rx="19.8" ry="2.5" transform="rotate(-17 1022 282)" fill="#034a44" fill-opacity="0.62" filter="url(#b1)"/>
<ellipse cx="1096" cy="256" rx="7.2" ry="1.9" transform="rotate(-17 1096 256)" fill="#034a44" fill-opacity="0.62" filter="url(#b1)"/>
<ellipse cx="945" cy="318" rx="18.0" ry="2.8" transform="rotate(-17 945 318)" fill="#034a44" fill-opacity="0.62" filter="url(#b1)"/>
<ellipse cx="992" cy="330" rx="11.7" ry="2.2" transform="rotate(-17 992 330)" fill="#034a44" fill-opacity="0.62" filter="url(#b1)"/>
<ellipse cx="1040" cy="343" rx="8.1" ry="1.9" transform="rotate(-17 1040 343)" fill="#034a44" fill-opacity="0.62" filter="url(#b1)"/>
<ellipse cx="1015" cy="350" rx="5.4" ry="1.9" transform="rotate(-17 1015 350)" fill="#034a44" fill-opacity="0.62" filter="url(#b1)"/>
<ellipse cx="968" cy="372" rx="7.2" ry="1.9" transform="rotate(-17 968 372)" fill="#034a44" fill-opacity="0.62" filter="url(#b1)"/>
<ellipse cx="975" cy="407" rx="12.6" ry="2.2" transform="rotate(-17 975 407)" fill="#034a44" fill-opacity="0.62" filter="url(#b1)"/>
<ellipse cx="1132" cy="311" rx="18.0" ry="2.5" transform="rotate(-17 1132 311)" fill="#034a44" fill-opacity="0.62" filter="url(#b1)"/>
<ellipse cx="1124" cy="324" rx="14.4" ry="2.2" transform="rotate(-17 1124 324)" fill="#034a44" fill-opacity="0.62" filter="url(#b1)"/>
<ellipse cx="1160" cy="334" rx="18.0" ry="2.2" transform="rotate(-17 1160 334)" fill="#034a44" fill-opacity="0.62" filter="url(#b1)"/>
<ellipse cx="1165" cy="284" rx="12.6" ry="1.6" transform="rotate(-17 1165 284)" fill="#034a44" fill-opacity="0.62" filter="url(#b1)"/>
<ellipse cx="1056" cy="305" rx="5.4" ry="1.6" transform="rotate(-17 1056 305)" fill="#034a44" fill-opacity="0.62" filter="url(#b1)"/>
<ellipse cx="1112" cy="394" rx="7.2" ry="2.2" transform="rotate(-17 1112 394)" fill="#034a44" fill-opacity="0.62" filter="url(#b1)"/>
<ellipse cx="1253" cy="333" rx="5.4" ry="1.6" transform="rotate(-17 1253 333)" fill="#034a44" fill-opacity="0.62" filter="url(#b1)"/>
<ellipse cx="1500" cy="187" rx="4.5" ry="1.2" transform="rotate(-17 1500 187)" fill="#034a44" fill-opacity="0.62" filter="url(#b1)"/>
<ellipse cx="1113" cy="400" rx="6.3" ry="1.9" transform="rotate(-17 1113 400)" fill="#034a44" fill-opacity="0.62" filter="url(#b1)"/>
<ellipse cx="1868" cy="390" rx="5.4" ry="2.5" transform="rotate(-17 1868 390)" fill="#034a44" fill-opacity="0.62" filter="url(#b1)"/>
</g>
<path d="M822.6 405.5L845 407L884.7 402.5" stroke="#3d0a7a" stroke-width="3" fill="none"/><path d="M890 509L901 505.5" stroke="#4a0a80" stroke-width="3" fill="none"/>
<clipPath id="grayclip"><polygon points="1125.6,536.0 1380.0,458.0 1611.0,381.0 1785.0,323.0 1826.0,349.0 1825.1,350.3 1838.4,360.0 1838.7,359.6 1852.0,369.2 1851.8,369.5 1865.1,379.2 1846.0,392.0 1858.0,400.0 1880.0,412.0 1879.3,413.0 1906.0,431.0 1906.9,429.6 1933.6,447.6 1933.6,447.7 1960.2,465.7 1960.9,464.7 1987.6,482.7 1986.4,484.4 2013.0,502.4 2014.3,500.5 2041.0,518.5 2063.6,531.0 2110.0,558.4 2040.0,606.0 1962.0,656.0 1880.0,706.0 1795.0,753.0 1700.0,812.0 1600.0,870.0 1525.0,910.0 1225.0,910.0 1205.5,870.0 1182.0,788.0 1166.5,702.6 1153.0,628.6 1160.0,590.0 1172.0,556.0 1139.0,553.0"/></clipPath>
<g clip-path="url(#grayclip)">
<rect x="1100" y="300" width="1050" height="620" fill="#b6b6b6" filter="url(#tex2)"/>
<g mask="url(#omask)"><rect x="1100" y="300" width="1050" height="620" fill="#000" opacity="0.13"/><rect x="1100" y="300" width="1050" height="620" fill="url(#dots2)" opacity="0.85"/></g>
<g mask="url(#dmask)"><rect x="1100" y="300" width="1050" height="620" fill="#0eb89a"/><rect x="1100" y="300" width="1050" height="620" fill="url(#tstripe)"/><rect x="1100" y="300" width="1050" height="620" fill="url(#dots)"/><rect x="1100" y="300" width="1050" height="620" fill="url(#tstripe2)" opacity="0.9"/></g>
<polygon points="1125.6,536 1380,458 1611,381 1640,395 1400,478 1172,556 1139,553" fill="#a9a9a9" fill-opacity="0.8"/>
<polygon points="1125.6,536 1380,458 1611,381 1640,395 1400,478 1172,556 1139,553" fill="url(#dots2)" opacity="0.35"/>
<polygon points="1640.0,360.0 1800.0,320.0 2120.0,556.0 1960.0,660.0 1800.0,560.0" fill="url(#plines)" opacity="0.42"/>
<polyline points="1508.0,415.0 1528.0,436.0 1550.0,460.0 1563.0,488.0 1575.0,516.0 1593.0,541.0 1611.0,563.0 1630.0,580.0 1648.0,599.0 1666.0,628.0 1684.0,648.0 1706.0,672.0 1728.0,695.0 1752.0,714.0 1771.0,730.0 1792.0,750.0" fill="none" stroke="#d8d8d8" stroke-opacity="0.35" stroke-width="22" filter="url(#b4)"/>
<polyline points="1508.0,415.0 1528.0,436.0 1550.0,460.0 1563.0,488.0 1575.0,516.0 1593.0,541.0 1611.0,563.0 1630.0,580.0 1648.0,599.0 1666.0,628.0 1684.0,648.0 1706.0,672.0 1728.0,695.0 1752.0,714.0 1771.0,730.0 1792.0,750.0" fill="none" stroke="#e4e4e4" stroke-width="24" filter="url(#speck)" opacity="0.85"/>
<polyline points="1511.0,416.0 1531.0,437.0 1553.0,461.0 1566.0,489.0 1578.0,517.0 1596.0,542.0 1614.0,564.0 1633.0,581.0 1651.0,600.0 1669.0,629.0 1687.0,649.0 1709.0,673.0 1731.0,696.0 1755.0,715.0 1774.0,731.0 1795.0,751.0" fill="none" stroke="#14b898" stroke-width="22" filter="url(#speck2)"/>
<path d="M2061.7 533L1841.5 655.8L1658 768.8L1600 800L1420 890" stroke="#e0a000" stroke-width="1.6" stroke-dasharray="2.5 3" fill="none"/>
</g>
<polyline points="1125.6,536.0 1380.0,458.0 1611.0,381.0 1785.0,323.0 1826.0,349.0" fill="none" stroke="#222" stroke-width="1.2" stroke-dasharray="3 1.5"/>
<polyline points="2110.0,558.4 2040.0,606.0 1962.0,656.0 1880.0,706.0 1795.0,753.0 1700.0,812.0 1600.0,870.0 1525.0,910.0" fill="none" stroke="#2a2a2a" stroke-width="1.6" stroke-dasharray="3 2"/>
<ellipse cx="1777" cy="372" rx="10" ry="3" transform="rotate(-20 1777 372)" fill="#0fb894"/>
<ellipse cx="1800" cy="378" rx="14" ry="3" transform="rotate(-20 1800 378)" fill="#0fb894"/>
<ellipse cx="1790" cy="392" rx="12" ry="3" transform="rotate(-20 1790 392)" fill="#0fb894"/>
<ellipse cx="1765" cy="400" rx="10" ry="3" transform="rotate(-20 1765 400)" fill="#0fb894"/>
<ellipse cx="1812" cy="365" rx="6" ry="2.5" transform="rotate(-20 1812 365)" fill="#0fb894"/>
<ellipse cx="1775" cy="410" rx="8" ry="2.5" transform="rotate(-20 1775 410)" fill="#0fb894"/>
<ellipse cx="1825" cy="412" rx="9" ry="2" transform="rotate(-20 1825 412)" fill="#0fb894"/>
<ellipse cx="1747" cy="392" rx="5" ry="2" transform="rotate(-20 1747 392)" fill="#0fb894"/>
<ellipse cx="1690" cy="424" rx="10" ry="4" transform="rotate(-20 1690 424)" fill="#0fb894"/>
<ellipse cx="1905" cy="515" rx="10" ry="2.5" transform="rotate(-20 1905 515)" fill="#0fb894"/>
<ellipse cx="1680" cy="520" rx="12" ry="2" transform="rotate(-20 1680 520)" fill="#0fb894"/>
<ellipse cx="1686" cy="417" rx="13" ry="5.5" transform="rotate(-22 1686 417)" fill="#18b8c8"/>
<path d="M1350 438L1364 441L1378 462L1358 458Z" fill="#03302a" fill-opacity="0.92" filter="url(#b1)"/>
<path d="M1390 426L1394.5 446L1402 431.5L1406 452L1416.5 456L1431 480L1441 512L1438 519L1420 522L1402 530L1387 532L1376 516L1372.5 487L1380 458L1385.5 448Z" fill="url(#pk1)"/><path d="M1390 426L1394.5 446L1402 431.5L1406 452L1416.5 456L1431 480L1441 512L1438 519L1420 522L1402 530L1387 532L1376 516L1372.5 487L1380 458L1385.5 448Z" fill="url(#pkshade)"/>
<path d="M1390 426L1394.5 446L1396 500L1389 531L1386 470Z" fill="#000" fill-opacity="0.13"/><path d="M1402 431.5L1406 452L1412 520L1403 529L1399 470Z" fill="#fff" fill-opacity="0.10"/>
<path d="M1431 480L1444 477L1452 482L1440 487L1436 488Z" fill="#12c0a8"/>
<path d="M1499 466L1506.6 489.6L1495.7 498L1489.6 487Z" fill="url(#cone)"/><path d="M1499 466L1504 474L1500 478Z" fill="#0a6a48"/>
<path d="M1758 585L1768 556L1776 530L1788 503L1798 487L1806 485L1808.5 500L1811 485.5L1819 485L1822 508L1828 512L1833 532L1836 580L1826 588L1812 584L1800 592L1786 590L1772 592Z" fill="url(#pk2)"/>
<path d="M1798 487L1806 485L1807 520L1806 590L1796 592L1792 540Z" fill="#000" fill-opacity="0.16"/>
<path d="M1811 485.5L1819 485L1823 520L1826 588L1815 585L1812 530Z" fill="#400" fill-opacity="0.18"/>
<path d="M1788 503L1793 520L1790 590L1780 591L1780 540Z" fill="#0a6" fill-opacity="0.25"/>
<path d="M1806 520L1812 530L1814 586L1806 590Z" fill="#0c8" fill-opacity="0.3"/>
<path d="M1768 556L1776 530L1780 545L1778 591L1766 588Z" fill="#fff" fill-opacity="0.08"/>
<path d="M1822 508L1828 512L1833 532L1836 580L1828 588L1826 540Z" fill="#000" fill-opacity="0.2"/>
<path d="M1854 512Q1860 528 1862 536Q1852.5 541 1843 536Q1846 528 1854 512Z" fill="url(#cone)"/>
<path d="M1879 523Q1886 536 1888 544Q1878.0 549 1868 544Q1871 536 1879 523Z" fill="url(#cone)"/>
<path d="M1844 530Q1850 540 1852 548Q1843.0 553 1834 548Q1837 540 1844 530Z" fill="url(#cone)"/>
<path d="M1836 544Q1843 550 1845 558Q1836.5 563 1828 558Q1831 550 1836 544Z" fill="url(#cone)"/>
<path d="M1862 541Q1869 546 1871 554Q1861.5 559 1852 554Q1855 546 1862 541Z" fill="url(#cone)"/>
<path d="M1663 406L1668 421L1660 427L1656 420Z" fill="url(#cone)"/><path d="M1629 417L1634 426L1625 428Z" fill="#14a070"/>
<polyline points="1349.6,134.3 1415.8,177.9 1458.7,213.0 1532.7,275.3 1571.7,329.9 1617.0,384.0 1700.0,459.0 1754.0,500.0 1860.0,581.0 1962.0,656.0 2100.0,772.0 2254.5,909.5" fill="none" stroke="#f4f000" stroke-width="2.6"/></svg>
<div class="a" style="left:6.00px;top:776.60px;width:657.00px;height:830.20px;background:#fff;"></div>
<svg class="a" style="left:6.00px;top:776.00px;" width="657.00" height="831.00" viewBox="6 776 657 831"><defs>
<filter id="sw" filterUnits="userSpaceOnUse" x="90" y="780" width="560" height="780" color-interpolation-filters="sRGB">
<feTurbulence type="fractalNoise" baseFrequency="0.2 0.24" numOctaves="3" seed="21" result="n"/>
<feColorMatrix in="n" type="matrix" values="0.9 0 0 0 0  0.9 0 0 0 0  0.9 0 0 0 0  0 0 0 0 1" result="g"/>
<feComposite in="SourceGraphic" in2="g" operator="arithmetic" k1="0" k2="1" k3="0.5" k4="-0.235"/>
</filter>
<filter id="swb"><feGaussianBlur stdDeviation="3"/></filter>
<filter id="swb1"><feGaussianBlur stdDeviation="0.8"/></filter>
<filter id="swspeck" filterUnits="userSpaceOnUse" x="90" y="780" width="560" height="780">
<feTurbulence type="fractalNoise" baseFrequency="0.28" numOctaves="1" seed="4" result="n"/>
<feColorMatrix in="n" type="matrix" values="0 0 0 0 1  0 0 0 0 1  0 0 0 0 1  10 0 0 0 -5.9" result="m"/>
<feComposite in="SourceGraphic" in2="m" operator="in"/></filter>
<pattern id="swgrid" patternUnits="userSpaceOnUse" width="3.6" height="3.4"><rect width="3.6" height="3.4" fill="none"/><circle cx="1.8" cy="1.7" r="1.5" fill="#000" fill-opacity="0.05"/></pattern>
<filter id="swspeck2" filterUnits="userSpaceOnUse" x="90" y="780" width="560" height="780">
<feTurbulence type="fractalNoise" baseFrequency="0.3" numOctaves="1" seed="14" result="n"/>
<feColorMatrix in="n" type="matrix" values="0 0 0 0 1  0 0 0 0 1  0 0 0 0 1  0 8 0 0 -4.1" result="m"/>
<feComposite in="SourceGraphic" in2="m" operator="in"/></filter>
<filter id="swlow" filterUnits="userSpaceOnUse" x="90" y="780" width="560" height="780" color-interpolation-filters="sRGB">
<feTurbulence type="fractalNoise" baseFrequency="0.012 0.016" numOctaves="2" seed="8" result="n"/>
<feColorMatrix in="n" type="matrix" values="0 0 0 0 0  0 0 0 0 0  0 0 0 0 0  0.32 0 0 0 -0.115"/></filter>
<pattern id="swdots" patternUnits="userSpaceOnUse" width="3.8" height="4"><circle cx="1.9" cy="2" r="1.55" fill="#2e2e2e" fill-opacity="0.62"/></pattern>
</defs>
<line x1="95.2" x2="632.8" y1="1545.9" y2="1545.9" stroke="#e6e6e6" stroke-width="1"/>
<line x1="95.2" x2="632.8" y1="1508.4" y2="1508.4" stroke="#e6e6e6" stroke-width="1"/>
<line x1="95.2" x2="632.8" y1="1470.9" y2="1470.9" stroke="#e6e6e6" stroke-width="1"/>
<line x1="95.2" x2="632.8" y1="1433.4" y2="1433.4" stroke="#e6e6e6" stroke-width="1"/>
<line x1="95.2" x2="632.8" y1="1395.9" y2="1395.9" stroke="#e6e6e6" stroke-width="1"/>
<line x1="95.2" x2="632.8" y1="1358.5" y2="1358.5" stroke="#e6e6e6" stroke-width="1"/>
<line x1="95.2" x2="632.8" y1="1321.0" y2="1321.0" stroke="#e6e6e6" stroke-width="1"/>
<line x1="95.2" x2="632.8" y1="1283.5" y2="1283.5" stroke="#e6e6e6" stroke-width="1"/>
<line x1="95.2" x2="632.8" y1="1246.0" y2="1246.0" stroke="#e6e6e6" stroke-width="1"/>
<line x1="95.2" x2="632.8" y1="1208.5" y2="1208.5" stroke="#e6e6e6" stroke-width="1"/>
<line x1="95.2" x2="632.8" y1="1171.0" y2="1171.0" stroke="#e6e6e6" stroke-width="1"/>
<line x1="95.2" x2="632.8" y1="1133.5" y2="1133.5" stroke="#e6e6e6" stroke-width="1"/>
<line x1="95.2" x2="632.8" y1="1096.0" y2="1096.0" stroke="#e6e6e6" stroke-width="1"/>
<line x1="95.2" x2="632.8" y1="1058.5" y2="1058.5" stroke="#e6e6e6" stroke-width="1"/>
<line x1="95.2" x2="632.8" y1="1021.0" y2="1021.0" stroke="#e6e6e6" stroke-width="1"/>
<line x1="95.2" x2="632.8" y1="983.6" y2="983.6" stroke="#e6e6e6" stroke-width="1"/>
<line x1="95.2" x2="632.8" y1="946.1" y2="946.1" stroke="#e6e6e6" stroke-width="1"/>
<line x1="95.2" x2="632.8" y1="908.6" y2="908.6" stroke="#e6e6e6" stroke-width="1"/>
<line x1="95.2" x2="632.8" y1="871.1" y2="871.1" stroke="#e6e6e6" stroke-width="1"/>
<line x1="95.2" x2="632.8" y1="833.6" y2="833.6" stroke="#e6e6e6" stroke-width="1"/>
<line x1="95.2" x2="632.8" y1="796.1" y2="796.1" stroke="#e6e6e6" stroke-width="1"/>
<line x1="115.2" x2="115.2" y1="787.4" y2="1549.4" stroke="#e6e6e6" stroke-width="1"/>
<line x1="238.1" x2="238.1" y1="787.4" y2="1549.4" stroke="#e6e6e6" stroke-width="1"/>
<line x1="361.0" x2="361.0" y1="787.4" y2="1549.4" stroke="#e6e6e6" stroke-width="1"/>
<line x1="483.9" x2="483.9" y1="787.4" y2="1549.4" stroke="#e6e6e6" stroke-width="1"/>
<line x1="606.8" x2="606.8" y1="787.4" y2="1549.4" stroke="#e6e6e6" stroke-width="1"/>
<clipPath id="swclip"><polygon points="109.0,787.4 109.6,900.0 110.0,1100.0 113.0,1245.0 113.7,1290.0 120.0,1326.0 126.0,1350.0 130.0,1368.8 133.0,1382.0 133.0,1382.0 133.0,1386.0 131.0,1386.0 131.0,1390.0 130.0,1390.0 130.0,1394.0 131.0,1394.0 131.0,1398.0 133.0,1398.0 133.0,1402.0 131.0,1402.0 131.0,1406.0 133.0,1406.0 133.0,1410.0 137.0,1410.0 137.0,1414.0 152.0,1414.0 152.0,1418.0 166.0,1418.0 166.0,1422.0 176.0,1422.0 176.0,1426.0 170.0,1426.0 170.0,1430.0 150.0,1430.0 150.0,1434.0 140.0,1434.0 140.0,1438.0 132.0,1438.0 132.0,1442.0 131.0,1442.0 131.0,1446.0 136.0,1446.0 136.0,1450.0 142.0,1450.0 142.0,1454.0 132.0,1454.0 132.0,1458.0 134.0,1458.0 134.0,1462.0 138.0,1462.0 138.0,1466.0 141.0,1466.0 141.0,1470.0 150.0,1470.0 150.0,1474.0 146.0,1474.0 146.0,1478.0 140.0,1478.0 140.0,1482.0 136.0,1482.0 136.0,1486.0 107.0,1487.5 107.0,1549.4 621.0,1549.4 621.0,1423.0 612.0,1421.0 604.0,1416.0 598.0,1408.0 592.0,1394.0 586.0,1380.0 581.0,1366.0 580.0,1359.0 586.0,1350.0 596.0,1340.0 603.0,1332.5 609.8,1293.0 613.7,1260.0 617.0,1200.0 619.5,1100.0 619.5,900.0 618.0,787.4"/></clipPath>
<g clip-path="url(#swclip)">
<rect x="90" y="780" width="560" height="780" fill="#a7a7a7" filter="url(#sw)"/>
<rect x="90" y="780" width="560" height="780" filter="url(#swlow)"/>
<rect x="100" y="780" width="60" height="780" fill="#000" fill-opacity="0.05"/>
<ellipse cx="412" cy="986" rx="26" ry="20" fill="#000" fill-opacity="0.16" filter="url(#swb)"/>
<ellipse cx="300" cy="1000" rx="60" ry="50" fill="#fff" fill-opacity="0.06" filter="url(#swb)"/>
<polyline points="356.0,787.0 358.0,900.0 360.0,1000.0 361.0,1100.0 361.0,1200.0 361.0,1300.0 360.0,1400.0 358.0,1500.0 357.0,1550.0" stroke="#dcdcdc" stroke-opacity="0.62" stroke-width="15" fill="none" filter="url(#swb1)"/>
<polyline points="356.0,787.0 358.0,900.0 360.0,1000.0 361.0,1100.0 361.0,1200.0 361.0,1300.0 360.0,1400.0 358.0,1500.0 357.0,1550.0" stroke="#f2f2f2" stroke-width="16" fill="none" filter="url(#swspeck2)" opacity="0.85"/>
<polyline points="355.0,787.0 357.0,900.0 359.0,1000.0 360.0,1100.0 360.0,1200.0 360.0,1300.0 359.0,1400.0 357.0,1500.0 356.0,1550.0" stroke="#3a3a3a" stroke-width="22" fill="none" filter="url(#swspeck)" opacity="0.8"/>
<line x1="95.2" x2="632.8" y1="1545.9" y2="1545.9" stroke="#000" stroke-opacity="0.07" stroke-width="1"/>
<line x1="95.2" x2="632.8" y1="1508.4" y2="1508.4" stroke="#000" stroke-opacity="0.07" stroke-width="1"/>
<line x1="95.2" x2="632.8" y1="1470.9" y2="1470.9" stroke="#000" stroke-opacity="0.07" stroke-width="1"/>
<line x1="95.2" x2="632.8" y1="1433.4" y2="1433.4" stroke="#000" stroke-opacity="0.07" stroke-width="1"/>
<line x1="95.2" x2="632.8" y1="1395.9" y2="1395.9" stroke="#000" stroke-opacity="0.07" stroke-width="1"/>
<line x1="95.2" x2="632.8" y1="1358.5" y2="1358.5" stroke="#000" stroke-opacity="0.07" stroke-width="1"/>
<line x1="95.2" x2="632.8" y1="1321.0" y2="1321.0" stroke="#000" stroke-opacity="0.07" stroke-width="1"/>
<line x1="95.2" x2="632.8" y1="1283.5" y2="1283.5" stroke="#000" stroke-opacity="0.07" stroke-width="1"/>
<line x1="95.2" x2="632.8" y1="1246.0" y2="1246.0" stroke="#000" stroke-opacity="0.07" stroke-width="1"/>
<line x1="95.2" x2="632.8" y1="1208.5" y2="1208.5" stroke="#000" stroke-opacity="0.07" stroke-width="1"/>
<line x1="95.2" x2="632.8" y1="1171.0" y2="1171.0" stroke="#000" stroke-opacity="0.07" stroke-width="1"/>
<line x1="95.2" x2="632.8" y1="1133.5" y2="1133.5" stroke="#000" stroke-opacity="0.07" stroke-width="1"/>
<line x1="95.2" x2="632.8" y1="1096.0" y2="1096.0" stroke="#000" stroke-opacity="0.07" stroke-width="1"/>
<line x1="95.2" x2="632.8" y1="1058.5" y2="1058.5" stroke="#000" stroke-opacity="0.07" stroke-width="1"/>
<line x1="95.2" x2="632.8" y1="1021.0" y2="1021.0" stroke="#000" stroke-opacity="0.07" stroke-width="1"/>
<line x1="95.2" x2="632.8" y1="983.6" y2="983.6" stroke="#000" stroke-opacity="0.07" stroke-width="1"/>
<line x1="95.2" x2="632.8" y1="946.1" y2="946.1" stroke="#000" stroke-opacity="0.07" stroke-width="1"/>
<line x1="95.2" x2="632.8" y1="908.6" y2="908.6" stroke="#000" stroke-opacity="0.07" stroke-width="1"/>
<line x1="95.2" x2="632.8" y1="871.1" y2="871.1" stroke="#000" stroke-opacity="0.07" stroke-width="1"/>
<line x1="95.2" x2="632.8" y1="833.6" y2="833.6" stroke="#000" stroke-opacity="0.07" stroke-width="1"/>
<line x1="95.2" x2="632.8" y1="796.1" y2="796.1" stroke="#000" stroke-opacity="0.07" stroke-width="1"/>
<line x1="115.2" x2="115.2" y1="787.4" y2="1549.4" stroke="#000" stroke-opacity="0.07" stroke-width="1"/>
<line x1="238.1" x2="238.1" y1="787.4" y2="1549.4" stroke="#000" stroke-opacity="0.07" stroke-width="1"/>
<line x1="361.0" x2="361.0" y1="787.4" y2="1549.4" stroke="#000" stroke-opacity="0.07" stroke-width="1"/>
<line x1="483.9" x2="483.9" y1="787.4" y2="1549.4" stroke="#000" stroke-opacity="0.07" stroke-width="1"/>
<line x1="606.8" x2="606.8" y1="787.4" y2="1549.4" stroke="#000" stroke-opacity="0.07" stroke-width="1"/>
<rect x="90" y="780" width="560" height="780" fill="url(#swgrid)"/>
<polygon points="133.0,1384.0 131.0,1388.0 130.0,1392.0 131.0,1396.0 133.0,1400.0 131.0,1404.0 133.0,1408.0 137.0,1412.0 152.0,1416.0 166.0,1420.0 176.0,1424.0 170.0,1428.0 150.0,1432.0 140.0,1436.0 132.0,1440.0 131.0,1444.0 136.0,1448.0 142.0,1452.0 132.0,1456.0 134.0,1460.0 138.0,1464.0 141.0,1468.0 150.0,1472.0 146.0,1476.0 140.0,1480.0 136.0,1484.0 156.0,1484.0 164.0,1480.0 170.0,1476.0 176.0,1472.0 182.0,1468.0 188.0,1464.0 192.0,1460.0 194.0,1456.0 196.0,1452.0 198.0,1448.0 200.0,1444.0 202.0,1440.0 204.0,1436.0 206.0,1432.0 207.0,1428.0 208.0,1424.0 207.0,1420.0 206.0,1416.0 204.0,1412.0 200.0,1408.0 198.0,1404.0 196.0,1400.0 194.0,1396.0 190.0,1392.0 180.0,1388.0 154.0,1384.0" fill="#5a5a5a" fill-opacity="0.5" filter="url(#swb1)"/>
<polygon points="133.0,1384.0 131.0,1388.0 130.0,1392.0 131.0,1396.0 133.0,1400.0 131.0,1404.0 133.0,1408.0 137.0,1412.0 152.0,1416.0 166.0,1420.0 176.0,1424.0 170.0,1428.0 150.0,1432.0 140.0,1436.0 132.0,1440.0 131.0,1444.0 136.0,1448.0 142.0,1452.0 132.0,1456.0 134.0,1460.0 138.0,1464.0 141.0,1468.0 150.0,1472.0 146.0,1476.0 140.0,1480.0 136.0,1484.0 156.0,1484.0 164.0,1480.0 170.0,1476.0 176.0,1472.0 182.0,1468.0 188.0,1464.0 192.0,1460.0 194.0,1456.0 196.0,1452.0 198.0,1448.0 200.0,1444.0 202.0,1440.0 204.0,1436.0 206.0,1432.0 207.0,1428.0 208.0,1424.0 207.0,1420.0 206.0,1416.0 204.0,1412.0 200.0,1408.0 198.0,1404.0 196.0,1400.0 194.0,1396.0 190.0,1392.0 180.0,1388.0 154.0,1384.0" fill="url(#swdots)"/>
<rect x="176" y="1418.6" width="25" height="2.400000000000091" fill="#fff" rx="1"/>
<rect x="170" y="1437.4" width="24" height="2.0" fill="#fff" rx="1"/>
<rect x="152" y="1450.4" width="34" height="2.199999999999818" fill="#fff" rx="1"/>
<rect x="156" y="1469.6" width="20" height="1.800000000000182" fill="#fff" rx="1"/>
<rect x="188" y="1442" width="3.5" height="22" fill="#fff" rx="1"/>
<rect x="197" y="1412" width="3" height="18" fill="#fff" rx="1"/>
<ellipse cx="287" cy="1206.5" rx="6" ry="2.2" fill="#fff" fill-opacity="0.95"/>
<ellipse cx="294" cy="1209.5" rx="4" ry="2.2" fill="#1c1c1c" fill-opacity="0.85"/>
<ellipse cx="301" cy="1207" rx="2" ry="2" fill="#2a2a2a" fill-opacity="0.7"/>
<ellipse cx="256" cy="1020" rx="6" ry="3" fill="#e8e8e8" fill-opacity="0.7"/>
<ellipse cx="258" cy="1028" rx="5" ry="2" fill="#f4f4f4" fill-opacity="0.8"/>
<ellipse cx="550" cy="1132" rx="4" ry="3.5" fill="#e0e0e0" fill-opacity="0.85"/>
<ellipse cx="249" cy="1442" rx="2.6" ry="11" fill="#f4f4f4" fill-opacity="0.75"/>
<ellipse cx="260" cy="1427.5" rx="9" ry="2.2" fill="#fff" fill-opacity="0.9"/>
<ellipse cx="259" cy="1452.5" rx="9" ry="2.4" fill="#fff" fill-opacity="0.9"/>
<ellipse cx="269.5" cy="1440" rx="2.4" ry="10" fill="#f0f0f0" fill-opacity="0.7"/>
<ellipse cx="258" cy="1440" rx="8" ry="9" fill="#c8c8c8" fill-opacity="0.35"/>
<ellipse cx="440" cy="1425" rx="4" ry="8" fill="#e8e8e8" fill-opacity="0.7"/>
<ellipse cx="326" cy="828" rx="4" ry="3" fill="#3a3a3a" fill-opacity="0.7"/>
<ellipse cx="343" cy="972" rx="5" ry="4" fill="#202020" fill-opacity="0.6"/>
<ellipse cx="352" cy="990" rx="4" ry="3" fill="#202020" fill-opacity="0.6"/>
<ellipse cx="362" cy="1074" rx="4" ry="3" fill="#2a2a2a" fill-opacity="0.6"/>
<ellipse cx="357" cy="1222" rx="4" ry="3" fill="#1a1a1a" fill-opacity="0.7"/>
<ellipse cx="361" cy="1300" rx="3" ry="6" fill="#161616" fill-opacity="0.7"/>
<ellipse cx="358" cy="1340" rx="3" ry="6" fill="#181818" fill-opacity="0.7"/>
<ellipse cx="360" cy="1412" rx="3" ry="6" fill="#1a1a1a" fill-opacity="0.7"/>
<ellipse cx="112" cy="1036" rx="3" ry="8" fill="#383838" fill-opacity="0.8"/>
<ellipse cx="337" cy="1205" rx="2.5" ry="2.5" fill="#222" fill-opacity="0.8"/>
</g>
<polyline points="607.0,1332.0 598.0,1342.0 590.0,1350.0 585.0,1358.0 586.0,1366.0 590.0,1378.0 595.0,1392.0 601.0,1406.0 608.0,1416.0 618.0,1421.0" stroke="#2a2a2a" stroke-width="4.4" stroke-dasharray="0.1 4.3" stroke-linecap="round" fill="none" stroke-opacity="0.9"/>
<rect x="588" y="1375.5" width="12" height="2.5" fill="#fff"/>
<rect x="95.2" y="862.6" width="537.5999999999999" height="2.4" fill="#f2c200"/>
<rect x="95.2" y="787.4" width="537.5999999999999" height="762.0000000000001" fill="none" stroke="#7c7c7c" stroke-width="1.2"/></svg>
<span class="t" style="left:68.01px;top:787.90px;font-size:15px;line-height:20px;color:#5e5e5e;">20</span>
<span class="t" style="left:68.01px;top:825.39px;font-size:15px;line-height:20px;color:#5e5e5e;">18</span>
<span class="t" style="left:68.01px;top:862.88px;font-size:15px;line-height:20px;color:#5e5e5e;">16</span>
<span class="t" style="left:68.01px;top:900.37px;font-size:15px;line-height:20px;color:#5e5e5e;">14</span>
<span class="t" style="left:68.01px;top:937.86px;font-size:15px;line-height:20px;color:#5e5e5e;">12</span>
<span class="t" style="left:68.01px;top:975.35px;font-size:15px;line-height:20px;color:#5e5e5e;">10</span>
<span class="t" style="left:76.36px;top:1012.84px;font-size:15px;line-height:20px;color:#5e5e5e;">8</span>
<span class="t" style="left:76.36px;top:1050.33px;font-size:15px;line-height:20px;color:#5e5e5e;">6</span>
<span class="t" style="left:76.36px;top:1087.82px;font-size:15px;line-height:20px;color:#5e5e5e;">4</span>
<span class="t" style="left:76.36px;top:1125.31px;font-size:15px;line-height:20px;color:#5e5e5e;">2</span>
<span class="t" style="left:76.36px;top:1162.80px;font-size:15px;line-height:20px;color:#5e5e5e;">0</span>
<span class="t" style="left:71.36px;top:1200.29px;font-size:15px;line-height:20px;color:#5e5e5e;">-2</span>
<span class="t" style="left:71.36px;top:1237.78px;font-size:15px;line-height:20px;color:#5e5e5e;">-4</span>
<span class="t" style="left:71.36px;top:1275.27px;font-size:15px;line-height:20px;color:#5e5e5e;">-6</span>
<span class="t" style="left:71.36px;top:1312.76px;font-size:15px;line-height:20px;color:#5e5e5e;">-8</span>
<span class="t" style="left:63.01px;top:1350.25px;font-size:15px;line-height:20px;color:#5e5e5e;">-10</span>
<span class="t" style="left:63.01px;top:1387.74px;font-size:15px;line-height:20px;color:#5e5e5e;">-12</span>
<span class="t" style="left:63.01px;top:1425.23px;font-size:15px;line-height:20px;color:#5e5e5e;">-14</span>
<span class="t" style="left:63.01px;top:1462.72px;font-size:15px;line-height:20px;color:#5e5e5e;">-16</span>
<span class="t" style="left:63.01px;top:1500.21px;font-size:15px;line-height:20px;color:#5e5e5e;">-18</span>
<span class="t" style="left:63.01px;top:1537.70px;font-size:15px;line-height:20px;color:#5e5e5e;">-20</span>
<span class="t" style="left:100.38px;top:1556.50px;font-size:15px;line-height:20px;color:#5e5e5e;">-100</span>
<span class="t" style="left:227.16px;top:1556.50px;font-size:15px;line-height:20px;color:#5e5e5e;">-50</span>
<span class="t" style="left:356.83px;top:1556.50px;font-size:15px;line-height:20px;color:#5e5e5e;">0</span>
<span class="t" style="left:475.46px;top:1556.50px;font-size:15px;line-height:20px;color:#5e5e5e;">50</span>
<span class="t" style="left:594.58px;top:1556.50px;font-size:15px;line-height:20px;color:#5e5e5e;">100</span>
<span class="t" style="left:314.30px;top:1584.50px;font-size:13.5px;line-height:18px;color:#5e5e5e;letter-spacing:-0.176px;">Across Track (m)</span>
<span class="t" style="left:-18.89px;top:1158.70px;font-size:13.5px;line-height:18px;color:#5e5e5e;transform:rotate(-90deg);transform-origin:center;">Ping Delta (s)</span>
<svg class="a" style="left:786.00px;top:1008.00px;" width="2010.00" height="582.00" viewBox="786 1008 2010 582"><defs>
<filter id="w3" filterUnits="userSpaceOnUse" x="860" y="980" width="1860" height="640"><feGaussianBlur stdDeviation="3"/></filter>
<filter id="w6" filterUnits="userSpaceOnUse" x="860" y="980" width="1860" height="640"><feGaussianBlur stdDeviation="6"/></filter>
<filter id="w10" filterUnits="userSpaceOnUse" x="860" y="980" width="1860" height="640"><feGaussianBlur stdDeviation="10"/></filter>
<filter id="w18" filterUnits="userSpaceOnUse" x="860" y="980" width="1860" height="640"><feGaussianBlur stdDeviation="18"/></filter>
<filter id="w30" filterUnits="userSpaceOnUse" x="860" y="980" width="1860" height="640"><feGaussianBlur stdDeviation="30"/></filter>
<filter id="w1" filterUnits="userSpaceOnUse" x="860" y="980" width="1860" height="640"><feGaussianBlur stdDeviation="1.2"/></filter>
<linearGradient id="botband" gradientUnits="userSpaceOnUse" x1="0" y1="1420" x2="0" y2="1575">
<stop offset="0" stop-color="#22cc66" stop-opacity="0"/>
<stop offset="0.3" stop-color="#26d850" stop-opacity="0.9"/>
<stop offset="0.5" stop-color="#34e22c"/>
<stop offset="0.78" stop-color="#30e030"/>
<stop offset="0.88" stop-color="#22cc70"/>
<stop offset="0.95" stop-color="#20b4a0"/>
<stop offset="1" stop-color="#2498d0"/></linearGradient>
<linearGradient id="arcg" gradientUnits="userSpaceOnUse" x1="1480" y1="0" x2="2100" y2="0">
<stop offset="0" stop-color="#c8ec10" stop-opacity="0"/><stop offset="0.12" stop-color="#e4ec08"/><stop offset="0.3" stop-color="#f4b400"/><stop offset="0.42" stop-color="#f06000"/><stop offset="0.47" stop-color="#e81400"/>
<stop offset="0.53" stop-color="#e81400"/><stop offset="0.58" stop-color="#f06000"/><stop offset="0.7" stop-color="#f4b400"/><stop offset="0.88" stop-color="#e4ec08"/><stop offset="1" stop-color="#c8ec10" stop-opacity="0"/></linearGradient>
<filter id="wspeck" filterUnits="userSpaceOnUse" x="1300" y="1150" width="1000" height="420">
<feTurbulence type="fractalNoise" baseFrequency="0.12 0.3" numOctaves="2" seed="3" result="n"/>
<feColorMatrix in="n" type="matrix" values="0 0 0 0 1  0 0 0 0 1  0 0 0 0 1  7 0 0 0 -3.05" result="m"/>
<feComposite in="SourceGraphic" in2="m" operator="in"/></filter>
<filter id="wspeckL" filterUnits="userSpaceOnUse" x="1300" y="1150" width="1000" height="420">
<feTurbulence type="fractalNoise" baseFrequency="0.1 0.3" numOctaves="2" seed="7" result="n"/>
<feColorMatrix in="n" type="matrix" values="0 0 0 0 1  0 0 0 0 1  0 0 0 0 1  7 0 0 0 -3.55" result="m"/>
<feComposite in="SourceGraphic" in2="m" operator="in"/></filter>
<filter id="wtex" filterUnits="userSpaceOnUse" x="880" y="1000" width="1820" height="600" color-interpolation-filters="sRGB">
<feTurbulence type="fractalNoise" baseFrequency="0.05 0.02" numOctaves="2" seed="8" result="n"/>
<feColorMatrix in="n" type="matrix" values="0 0 0 0 0.13  0 0 0 0 0.56  0 0 0 0 0.90  2.2 0 0 0 -1.0"/></filter>
</defs>
<line x1="802.1" x2="802.1" y1="1012.3" y2="1585" stroke="#e4e4e4" stroke-width="1"/>
<line x1="872.7" x2="872.7" y1="1012.3" y2="1585" stroke="#e4e4e4" stroke-width="1"/>
<line x1="943.4" x2="943.4" y1="1012.3" y2="1585" stroke="#e4e4e4" stroke-width="1"/>
<line x1="1014.0" x2="1014.0" y1="1012.3" y2="1585" stroke="#e4e4e4" stroke-width="1"/>
<line x1="1084.6" x2="1084.6" y1="1012.3" y2="1585" stroke="#e4e4e4" stroke-width="1"/>
<line x1="1155.2" x2="1155.2" y1="1012.3" y2="1585" stroke="#e4e4e4" stroke-width="1"/>
<line x1="1225.8" x2="1225.8" y1="1012.3" y2="1585" stroke="#e4e4e4" stroke-width="1"/>
<line x1="1296.5" x2="1296.5" y1="1012.3" y2="1585" stroke="#e4e4e4" stroke-width="1"/>
<line x1="1367.1" x2="1367.1" y1="1012.3" y2="1585" stroke="#e4e4e4" stroke-width="1"/>
<line x1="1437.7" x2="1437.7" y1="1012.3" y2="1585" stroke="#e4e4e4" stroke-width="1"/>
<line x1="1508.3" x2="1508.3" y1="1012.3" y2="1585" stroke="#e4e4e4" stroke-width="1"/>
<line x1="1578.9" x2="1578.9" y1="1012.3" y2="1585" stroke="#e4e4e4" stroke-width="1"/>
<line x1="1649.6" x2="1649.6" y1="1012.3" y2="1585" stroke="#e4e4e4" stroke-width="1"/>
<line x1="1720.2" x2="1720.2" y1="1012.3" y2="1585" stroke="#e4e4e4" stroke-width="1"/>
<line x1="1790.8" x2="1790.8" y1="1012.3" y2="1585" stroke="#e4e4e4" stroke-width="1"/>
<line x1="1861.4" x2="1861.4" y1="1012.3" y2="1585" stroke="#e4e4e4" stroke-width="1"/>
<line x1="1932.0" x2="1932.0" y1="1012.3" y2="1585" stroke="#e4e4e4" stroke-width="1"/>
<line x1="2002.7" x2="2002.7" y1="1012.3" y2="1585" stroke="#e4e4e4" stroke-width="1"/>
<line x1="2073.3" x2="2073.3" y1="1012.3" y2="1585" stroke="#e4e4e4" stroke-width="1"/>
<line x1="2143.9" x2="2143.9" y1="1012.3" y2="1585" stroke="#e4e4e4" stroke-width="1"/>
<line x1="2214.5" x2="2214.5" y1="1012.3" y2="1585" stroke="#e4e4e4" stroke-width="1"/>
<line x1="2285.1" x2="2285.1" y1="1012.3" y2="1585" stroke="#e4e4e4" stroke-width="1"/>
<line x1="2355.8" x2="2355.8" y1="1012.3" y2="1585" stroke="#e4e4e4" stroke-width="1"/>
<line x1="2426.4" x2="2426.4" y1="1012.3" y2="1585" stroke="#e4e4e4" stroke-width="1"/>
<line x1="2497.0" x2="2497.0" y1="1012.3" y2="1585" stroke="#e4e4e4" stroke-width="1"/>
<line x1="2567.6" x2="2567.6" y1="1012.3" y2="1585" stroke="#e4e4e4" stroke-width="1"/>
<line x1="2638.2" x2="2638.2" y1="1012.3" y2="1585" stroke="#e4e4e4" stroke-width="1"/>
<line x1="2708.9" x2="2708.9" y1="1012.3" y2="1585" stroke="#e4e4e4" stroke-width="1"/>
<line x1="2779.5" x2="2779.5" y1="1012.3" y2="1585" stroke="#e4e4e4" stroke-width="1"/>
<line x1="789.4" x2="2791.7" y1="1060.1" y2="1060.1" stroke="#e4e4e4" stroke-width="1"/>
<line x1="789.4" x2="2791.7" y1="1108.0" y2="1108.0" stroke="#e4e4e4" stroke-width="1"/>
<line x1="789.4" x2="2791.7" y1="1155.8" y2="1155.8" stroke="#e4e4e4" stroke-width="1"/>
<line x1="789.4" x2="2791.7" y1="1203.6" y2="1203.6" stroke="#e4e4e4" stroke-width="1"/>
<line x1="789.4" x2="2791.7" y1="1251.5" y2="1251.5" stroke="#e4e4e4" stroke-width="1"/>
<line x1="789.4" x2="2791.7" y1="1299.3" y2="1299.3" stroke="#e4e4e4" stroke-width="1"/>
<line x1="789.4" x2="2791.7" y1="1347.1" y2="1347.1" stroke="#e4e4e4" stroke-width="1"/>
<line x1="789.4" x2="2791.7" y1="1394.9" y2="1394.9" stroke="#e4e4e4" stroke-width="1"/>
<line x1="789.4" x2="2791.7" y1="1442.8" y2="1442.8" stroke="#e4e4e4" stroke-width="1"/>
<line x1="789.4" x2="2791.7" y1="1490.6" y2="1490.6" stroke="#e4e4e4" stroke-width="1"/>
<line x1="789.4" x2="2791.7" y1="1538.4" y2="1538.4" stroke="#e4e4e4" stroke-width="1"/>
<clipPath id="fan"><polygon points="1790.8,1012.3 2679.0,1568.0 2674.1,1575.0 2669.2,1568.0 2664.3,1575.0 2659.4,1568.0 2654.5,1575.0 2649.6,1568.0 2644.6,1575.0 2639.7,1568.0 2634.8,1575.0 2629.9,1568.0 2625.0,1575.0 2620.1,1568.0 2615.2,1575.0 2610.3,1568.0 2605.4,1575.0 2600.5,1568.0 2595.6,1575.0 2590.7,1568.0 2585.8,1575.0 2580.9,1568.0 2575.9,1575.0 2571.0,1568.0 2566.1,1575.0 2561.2,1568.0 2556.3,1575.0 2551.4,1568.0 2546.5,1575.0 2541.6,1568.0 2536.7,1575.0 2531.8,1568.0 2526.9,1575.0 2522.0,1568.0 2517.1,1575.0 2512.2,1568.0 2507.2,1575.0 2502.3,1568.0 2497.4,1575.0 2492.5,1568.0 2487.6,1575.0 2482.7,1568.0 2477.8,1575.0 2472.9,1568.0 2468.0,1575.0 2463.1,1568.0 2458.2,1575.0 2453.3,1568.0 2448.4,1575.0 2443.5,1568.0 2438.5,1575.0 2433.6,1568.0 2428.7,1575.0 2423.8,1568.0 2418.9,1575.0 2414.0,1568.0 2409.1,1575.0 2404.2,1568.0 2399.3,1575.0 2394.4,1568.0 2389.5,1575.0 2384.6,1568.0 2379.7,1575.0 2374.8,1568.0 2369.8,1575.0 2364.9,1568.0 2360.0,1575.0 2355.1,1568.0 2350.2,1575.0 2345.3,1568.0 2340.4,1575.0 2335.5,1568.0 2330.6,1575.0 2325.7,1568.0 2320.8,1575.0 2315.9,1568.0 2311.0,1575.0 2306.1,1568.0 2301.1,1575.0 2296.2,1568.0 2291.3,1575.0 2286.4,1568.0 2281.5,1575.0 2276.6,1568.0 2271.7,1575.0 2266.8,1568.0 2261.9,1575.0 2257.0,1568.0 2252.1,1575.0 2247.2,1568.0 2242.3,1575.0 2237.4,1568.0 2232.4,1575.0 2227.5,1568.0 2222.6,1575.0 2217.7,1568.0 2212.8,1575.0 2207.9,1568.0 2203.0,1575.0 2198.1,1568.0 2193.2,1575.0 2188.3,1568.0 2183.4,1575.0 2178.5,1568.0 2173.6,1575.0 2168.7,1568.0 2163.7,1575.0 2158.8,1568.0 2153.9,1575.0 2149.0,1568.0 2144.1,1575.0 2139.2,1568.0 2134.3,1575.0 2129.4,1568.0 2124.5,1575.0 2119.6,1568.0 2114.7,1575.0 2109.8,1568.0 2104.9,1575.0 2100.0,1568.0 2095.0,1575.0 2090.1,1568.0 2085.2,1575.0 2080.3,1568.0 2075.4,1575.0 2070.5,1568.0 2065.6,1575.0 2060.7,1568.0 2055.8,1575.0 2050.9,1568.0 2046.0,1575.0 2041.1,1568.0 2036.2,1575.0 2031.3,1568.0 2026.3,1575.0 2021.4,1568.0 2016.5,1575.0 2011.6,1568.0 2006.7,1575.0 2001.8,1568.0 1996.9,1575.0 1992.0,1568.0 1987.1,1575.0 1982.2,1568.0 1977.3,1575.0 1972.4,1568.0 1967.5,1575.0 1962.6,1568.0 1957.6,1575.0 1952.7,1568.0 1947.8,1575.0 1942.9,1568.0 1938.0,1575.0 1933.1,1568.0 1928.2,1575.0 1923.3,1568.0 1918.4,1575.0 1913.5,1568.0 1908.6,1575.0 1903.7,1568.0 1898.8,1575.0 1893.9,1568.0 1888.9,1575.0 1884.0,1568.0 1879.1,1575.0 1874.2,1568.0 1869.3,1575.0 1864.4,1568.0 1859.5,1575.0 1854.6,1568.0 1849.7,1575.0 1844.8,1568.0 1839.9,1575.0 1835.0,1568.0 1830.1,1575.0 1825.2,1568.0 1820.2,1575.0 1815.3,1568.0 1810.4,1575.0 1805.5,1568.0 1800.6,1575.0 1795.7,1568.0 1790.8,1575.0 1785.9,1568.0 1781.0,1575.0 1776.1,1568.0 1771.2,1575.0 1766.3,1568.0 1761.4,1575.0 1756.4,1568.0 1751.5,1575.0 1746.6,1568.0 1741.7,1575.0 1736.8,1568.0 1731.9,1575.0 1727.0,1568.0 1722.1,1575.0 1717.2,1568.0 1712.3,1575.0 1707.4,1568.0 1702.5,1575.0 1697.6,1568.0 1692.7,1575.0 1687.7,1568.0 1682.8,1575.0 1677.9,1568.0 1673.0,1575.0 1668.1,1568.0 1663.2,1575.0 1658.3,1568.0 1653.4,1575.0 1648.5,1568.0 1643.6,1575.0 1638.7,1568.0 1633.8,1575.0 1628.9,1568.0 1624.0,1575.0 1619.0,1568.0 1614.1,1575.0 1609.2,1568.0 1604.3,1575.0 1599.4,1568.0 1594.5,1575.0 1589.6,1568.0 1584.7,1575.0 1579.8,1568.0 1574.9,1575.0 1570.0,1568.0 1565.1,1575.0 1560.2,1568.0 1555.3,1575.0 1550.3,1568.0 1545.4,1575.0 1540.5,1568.0 1535.6,1575.0 1530.7,1568.0 1525.8,1575.0 1520.9,1568.0 1516.0,1575.0 1511.1,1568.0 1506.2,1575.0 1501.3,1568.0 1496.4,1575.0 1491.5,1568.0 1486.6,1575.0 1481.6,1568.0 1476.7,1575.0 1471.8,1568.0 1466.9,1575.0 1462.0,1568.0 1457.1,1575.0 1452.2,1568.0 1447.3,1575.0 1442.4,1568.0 1437.5,1575.0 1432.6,1568.0 1427.7,1575.0 1422.8,1568.0 1417.9,1575.0 1412.9,1568.0 1408.0,1575.0 1403.1,1568.0 1398.2,1575.0 1393.3,1568.0 1388.4,1575.0 1383.5,1568.0 1378.6,1575.0 1373.7,1568.0 1368.8,1575.0 1363.9,1568.0 1359.0,1575.0 1354.1,1568.0 1349.2,1575.0 1344.2,1568.0 1339.3,1575.0 1334.4,1568.0 1329.5,1575.0 1324.6,1568.0 1319.7,1575.0 1314.8,1568.0 1309.9,1575.0 1305.0,1568.0 1300.1,1575.0 1295.2,1568.0 1290.3,1575.0 1285.4,1568.0 1280.5,1575.0 1275.5,1568.0 1270.6,1575.0 1265.7,1568.0 1260.8,1575.0 1255.9,1568.0 1251.0,1575.0 1246.1,1568.0 1241.2,1575.0 1236.3,1568.0 1231.4,1575.0 1226.5,1568.0 1221.6,1575.0 1216.7,1568.0 1211.8,1575.0 1206.8,1568.0 1201.9,1575.0 1197.0,1568.0 1192.1,1575.0 1187.2,1568.0 1182.3,1575.0 1177.4,1568.0 1172.5,1575.0 1167.6,1568.0 1162.7,1575.0 1157.8,1568.0 1152.9,1575.0 1148.0,1568.0 1143.1,1575.0 1138.1,1568.0 1133.2,1575.0 1128.3,1568.0 1123.4,1575.0 1118.5,1568.0 1113.6,1575.0 1108.7,1568.0 1103.8,1575.0 1098.9,1568.0 1094.0,1575.0 1089.1,1568.0 1084.2,1575.0 1079.3,1568.0 1074.4,1575.0 1069.4,1568.0 1064.5,1575.0 1059.6,1568.0 1054.7,1575.0 1049.8,1568.0 1044.9,1575.0 1040.0,1568.0 1035.1,1575.0 1030.2,1568.0 1025.3,1575.0 1020.4,1568.0 1015.5,1575.0 1010.6,1568.0 1005.7,1575.0 1000.7,1568.0 995.8,1575.0 990.9,1568.0 986.0,1575.0 981.1,1568.0 976.2,1575.0 971.3,1568.0 966.4,1575.0 961.5,1568.0 956.6,1575.0 951.7,1568.0 946.8,1575.0 941.9,1568.0 937.0,1575.0 932.0,1568.0 927.1,1575.0 922.2,1568.0 917.3,1575.0 912.4,1568.0 907.5,1575.0 902.6,1568.0"/></clipPath>
<g clip-path="url(#fan)">
<rect x="880" y="1000" width="1820" height="600" fill="#22cc62"/>
<polygon points="1650.6,1482.4 1638.3,1475.3 1626.1,1467.6 1614.2,1459.3 1602.5,1450.5 1591.1,1441.1 1579.9,1431.1 1569.0,1420.6 1558.3,1409.6 1548.0,1398.1 1537.9,1386.1 1528.2,1373.6 1518.9,1360.7 1509.8,1347.3 1501.2,1333.4 1492.9,1319.2 1485.0,1304.6 1477.4,1289.5 1470.3,1274.2 1463.6,1258.5 1457.3,1242.5 1309.0,1374.0 1314.5,1387.1 1320.1,1399.9 1326.0,1412.7 1332.0,1425.2 1338.2,1437.6 1344.6,1449.8 1351.2,1461.9 1357.9,1473.7 1364.8,1485.4 1371.9,1496.9 1379.2,1508.2 1386.6,1519.3 1394.2,1530.1 1402.0,1540.8 1409.9,1551.3 1418.0,1561.5 1426.2,1571.6 1434.5,1581.4 1443.0,1590.9 1451.7,1600.3" fill="#2a8ee4" fill-opacity="1" filter="url(#w10)"/>
<polygon points="1412.1,1442.7 1405.0,1431.0 1398.1,1419.0 1391.4,1406.8 1384.9,1394.5 1378.6,1381.9 1372.5,1369.1 1366.6,1356.2 1361.0,1343.1 1355.5,1329.8 1350.3,1316.3 1161.6,1446.6 1166.7,1459.9 1172.0,1473.1 1177.4,1486.3 1182.9,1499.2 1188.7,1512.1 1194.5,1524.9 1200.6,1537.5 1206.7,1550.0 1213.0,1562.4 1219.5,1574.6" fill="#22a8b0" fill-opacity="0.6" filter="url(#w18)"/>
<polygon points="1931.0,1482.4 1943.3,1475.3 1955.5,1467.6 1967.4,1459.3 1979.1,1450.5 1990.5,1441.1 2001.7,1431.1 2012.6,1420.6 2023.3,1409.6 2033.6,1398.1 2043.7,1386.1 2053.4,1373.6 2062.7,1360.7 2071.8,1347.3 2080.4,1333.4 2088.7,1319.2 2096.6,1304.6 2104.2,1289.5 2111.3,1274.2 2118.0,1258.5 2124.3,1242.5 2272.6,1374.0 2267.1,1387.1 2261.5,1399.9 2255.6,1412.7 2249.6,1425.2 2243.4,1437.6 2237.0,1449.8 2230.4,1461.9 2223.7,1473.7 2216.8,1485.4 2209.7,1496.9 2202.4,1508.2 2195.0,1519.3 2187.4,1530.1 2179.6,1540.8 2171.7,1551.3 2163.6,1561.5 2155.4,1571.6 2147.1,1581.4 2138.6,1590.9 2129.9,1600.3" fill="#2a8ee4" fill-opacity="1" filter="url(#w10)"/>
<polygon points="2169.5,1442.7 2176.6,1431.0 2183.5,1419.0 2190.2,1406.8 2196.7,1394.5 2203.0,1381.9 2209.1,1369.1 2215.0,1356.2 2220.6,1343.1 2226.1,1329.8 2231.3,1316.3 2420.0,1446.6 2414.9,1459.9 2409.6,1473.1 2404.2,1486.3 2398.7,1499.2 2392.9,1512.1 2387.1,1524.9 2381.0,1537.5 2374.9,1550.0 2368.6,1562.4 2362.1,1574.6" fill="#22a8b0" fill-opacity="0.6" filter="url(#w18)"/>
<rect x="880" y="1400" width="1820" height="180" fill="url(#botband)"/>
<ellipse cx="1331.77" cy="1570.9544" rx="110" ry="12" fill="#2690d8" fill-opacity="0.85" filter="url(#w6)"/>
<ellipse cx="2228.644" cy="1570.9544" rx="120" ry="12" fill="#2690d8" fill-opacity="0.8" filter="url(#w6)"/>
<ellipse cx="1790.8" cy="1572.8676" rx="260" ry="7" fill="#22a8a8" fill-opacity="0.7" filter="url(#w6)"/>
<clipPath id="inner"><polygon points="1790.8,1012.3 1443.1,1222.0 1446.3,1234.5 1449.9,1246.9 1453.6,1259.3 1457.6,1271.5 1461.9,1283.6 1466.4,1295.5 1471.1,1307.4 1476.1,1319.0 1481.2,1330.6 1487.0,1341.6 1493.3,1352.0 1499.8,1362.2 1506.5,1372.2 1513.4,1382.0 1520.5,1391.5 1527.8,1400.7 1535.2,1409.7 1542.8,1418.4 1550.5,1426.9 1558.4,1435.1 1566.5,1443.0 1574.7,1450.6 1583.1,1458.0 1591.6,1465.0 1600.2,1471.8 1608.9,1478.3 1618.0,1484.0 1627.3,1488.7 1636.9,1492.5 1646.6,1495.7 1656.4,1498.2 1666.3,1500.4 1676.1,1502.3 1685.8,1504.1 1695.4,1505.9 1705.0,1508.0 1714.4,1510.6 1723.8,1513.1 1733.3,1515.2 1742.8,1517.0 1752.4,1518.5 1762.0,1519.7 1771.6,1520.5 1781.2,1521.0 1790.8,1521.2 1800.4,1521.0 1810.0,1520.5 1819.6,1519.7 1829.2,1518.5 1838.8,1517.0 1848.3,1515.2 1857.8,1513.1 1867.2,1510.6 1876.6,1508.0 1886.2,1505.9 1895.8,1504.1 1905.5,1502.3 1915.3,1500.4 1925.2,1498.2 1935.0,1495.7 1944.7,1492.5 1954.3,1488.7 1963.6,1484.0 1972.7,1478.3 1981.4,1471.8 1990.0,1465.0 1998.5,1458.0 2006.9,1450.6 2015.1,1443.0 2023.2,1435.1 2031.1,1426.9 2038.8,1418.4 2046.4,1409.7 2053.8,1400.7 2061.1,1391.5 2068.2,1382.0 2075.1,1372.2 2081.8,1362.2 2088.3,1352.0 2094.6,1341.6 2100.4,1330.6 2105.5,1319.0 2110.5,1307.4 2115.2,1295.5 2119.7,1283.6 2124.0,1271.5 2128.0,1259.3 2131.7,1246.9 2135.3,1234.5 2138.5,1222.0"/></clipPath>
<polygon points="1790.8,1012.3 1443.1,1222.0 1446.3,1234.5 1449.9,1246.9 1453.6,1259.3 1457.6,1271.5 1461.9,1283.6 1466.4,1295.5 1471.1,1307.4 1476.1,1319.0 1481.2,1330.6 1487.0,1341.6 1493.3,1352.0 1499.8,1362.2 1506.5,1372.2 1513.4,1382.0 1520.5,1391.5 1527.8,1400.7 1535.2,1409.7 1542.8,1418.4 1550.5,1426.9 1558.4,1435.1 1566.5,1443.0 1574.7,1450.6 1583.1,1458.0 1591.6,1465.0 1600.2,1471.8 1608.9,1478.3 1618.0,1484.0 1627.3,1488.7 1636.9,1492.5 1646.6,1495.7 1656.4,1498.2 1666.3,1500.4 1676.1,1502.3 1685.8,1504.1 1695.4,1505.9 1705.0,1508.0 1714.4,1510.6 1723.8,1513.1 1733.3,1515.2 1742.8,1517.0 1752.4,1518.5 1762.0,1519.7 1771.6,1520.5 1781.2,1521.0 1790.8,1521.2 1800.4,1521.0 1810.0,1520.5 1819.6,1519.7 1829.2,1518.5 1838.8,1517.0 1848.3,1515.2 1857.8,1513.1 1867.2,1510.6 1876.6,1508.0 1886.2,1505.9 1895.8,1504.1 1905.5,1502.3 1915.3,1500.4 1925.2,1498.2 1935.0,1495.7 1944.7,1492.5 1954.3,1488.7 1963.6,1484.0 1972.7,1478.3 1981.4,1471.8 1990.0,1465.0 1998.5,1458.0 2006.9,1450.6 2015.1,1443.0 2023.2,1435.1 2031.1,1426.9 2038.8,1418.4 2046.4,1409.7 2053.8,1400.7 2061.1,1391.5 2068.2,1382.0 2075.1,1372.2 2081.8,1362.2 2088.3,1352.0 2094.6,1341.6 2100.4,1330.6 2105.5,1319.0 2110.5,1307.4 2115.2,1295.5 2119.7,1283.6 2124.0,1271.5 2128.0,1259.3 2131.7,1246.9 2135.3,1234.5 2138.5,1222.0" fill="#2c8ee8"/>
<g clip-path="url(#inner)">
<rect x="880" y="1000" width="1820" height="600" filter="url(#wtex)" opacity="0.0"/>
<polygon points="1790.8,1012.3 1595.1,1521.4 1625.9,1541.0" fill="#1fc47c" fill-opacity="0.95"/>
<polygon points="1790.8,1012.3 1685.4,1568.2 1717.2,1577.5" fill="#1fc47c" fill-opacity="0.95"/>
<polygon points="1790.8,1012.3 1777.5,1586.0 1804.1,1586.0" fill="#1fc47c" fill-opacity="1"/>
<polygon points="1790.8,1012.3 1862.9,1577.9 1894.7,1568.7" fill="#1fc47c" fill-opacity="0.95"/>
<polygon points="1790.8,1012.3 1954.3,1541.8 1985.1,1522.3" fill="#1fc47c" fill-opacity="0.95"/>
<polygon points="1790.8,1012.3 1728.9,1246.5 1736.2,1249.8" fill="#1fc47c" fill-opacity="0.5"/>
<polygon points="1790.8,1012.3 1765.0,1297.1 1772.3,1298.2" fill="#1fc47c" fill-opacity="0.55"/>
<polygon points="1790.8,1012.3 1809.3,1298.2 1816.6,1297.1" fill="#1fc47c" fill-opacity="0.55"/>
<polygon points="1790.8,1012.3 1845.4,1249.8 1852.7,1246.5" fill="#1fc47c" fill-opacity="0.5"/>
<polygon points="1790.8,1012.3 1781.0,1222.3 1784.3,1222.6" fill="#1fc47c" fill-opacity="0.5"/>
<polygon points="1790.8,1012.3 1797.3,1222.6 1800.6,1222.3" fill="#1fc47c" fill-opacity="0.5"/>
<polygon points="1790.8,1012.3 1767.0,1200.9 1770.4,1201.6" fill="#1fc47c" fill-opacity="0.4"/>
<polygon points="1790.8,1012.3 1811.2,1201.6 1814.6,1200.9" fill="#1fc47c" fill-opacity="0.4"/>
<polyline points="1610.0,1436.5 1621.1,1444.7 1632.3,1452.5 1643.7,1459.7 1655.4,1466.4 1667.1,1472.5 1679.1,1478.1 1691.1,1483.1 1703.3,1487.5 1715.6,1491.4 1728.0,1494.6 1740.5,1497.3 1753.0,1499.4 1765.6,1500.9 1778.2,1501.8 1790.8,1502.1 1803.4,1501.8 1816.0,1500.9 1828.6,1499.4 1841.1,1497.3 1853.6,1494.6 1866.0,1491.4 1878.3,1487.5 1890.5,1483.1 1902.5,1478.1 1914.5,1472.5 1926.2,1466.4 1937.9,1459.7 1949.3,1452.5 1960.5,1444.7 1971.6,1436.5" fill="none" stroke="#20c888" stroke-width="16" stroke-opacity="0.55" filter="url(#w6)"/>
</g>
<polygon points="1571.9,1154.8 1324.7,1310.8 1423.6,1328.0 1480.1,1289.7 1536.6,1275.4 1578.9,1222.8 1607.2,1165.4" fill="#34dc38" filter="url(#w6)"/>
<polyline points="1552.8,1165.4 1594.5,1164.4 1659.4,1165.4 1708.2,1162.5 1737.8,1157.7 1756.9,1162.5 1821.9,1172.1 1886.8,1176.8 1951.8,1169.2 2000.5,1155.8" fill="none" stroke="#34de34" stroke-width="11" stroke-opacity="0.95" stroke-linecap="round" stroke-linejoin="round" filter="url(#w3)"/>
<polyline points="1506.9,1201.7 1594.5,1195.0 1659.4,1191.2 1724.4,1197.9 1744.2,1202.7 1805.6,1202.7 1886.8,1199.8 1951.8,1191.2 2000.5,1181.6 2033.0,1174.9" fill="none" stroke="#34de34" stroke-width="11" stroke-opacity="0.95" stroke-linecap="round" stroke-linejoin="round" filter="url(#w3)"/>
<polyline points="1465.2,1227.5 1562.0,1220.8 1627.0,1214.1 1691.9,1211.3 1740.7,1204.6" fill="none" stroke="#34de34" stroke-width="10" stroke-opacity="0.95" stroke-linecap="round" stroke-linejoin="round" filter="url(#w3)"/>
<polyline points="1870.6,1214.1 1919.3,1216.1 1968.1,1207.4 2000.5,1195.0" fill="none" stroke="#34de34" stroke-width="9" stroke-opacity="0.95" stroke-linecap="round" stroke-linejoin="round" filter="url(#w3)"/>
<polyline points="1893.2,1223.7 1951.8,1227.5 1984.3,1223.7" fill="none" stroke="#34de34" stroke-width="8" stroke-opacity="0.95" stroke-linecap="round" stroke-linejoin="round" filter="url(#w3)"/>
<polyline points="1596.6,1227.5 1601.5,1240.0 1610.7,1272.5 1627.0,1288.8 1675.7,1295.5 1708.2,1272.5 1731.5,1253.4" fill="none" stroke="#34de34" stroke-width="8" stroke-opacity="0.95" stroke-linecap="round" stroke-linejoin="round" filter="url(#w3)"/>
<polyline points="1737.8,1157.7 1756.9,1162.5 1821.9,1172.1 1886.8,1176.8 1951.8,1169.2" fill="none" stroke="#9cea18" stroke-width="4.5" stroke-opacity="1" stroke-linecap="round" stroke-linejoin="round" filter="url(#w1)"/>
<polyline points="1724.4,1197.9 1744.2,1202.7 1805.6,1202.7 1886.8,1199.8 1951.8,1191.2" fill="none" stroke="#b4ec10" stroke-width="4.5" stroke-opacity="1" stroke-linecap="round" stroke-linejoin="round" filter="url(#w1)"/>
<polyline points="1552.8,1165.4 1594.5,1164.4 1659.4,1165.4 1708.2,1162.5 1737.8,1157.7" fill="none" stroke="#58e424" stroke-width="5" stroke-opacity="0.9" stroke-linecap="round" stroke-linejoin="round" filter="url(#w1)"/>
<polyline points="1506.9,1201.7 1594.5,1195.0 1659.4,1191.2 1724.4,1197.9" fill="none" stroke="#60e620" stroke-width="5" stroke-opacity="0.9" stroke-linecap="round" stroke-linejoin="round" filter="url(#w1)"/>
<polyline points="1562.0,1220.8 1627.0,1214.1 1691.9,1211.3 1740.7,1204.6" fill="none" stroke="#58e424" stroke-width="4" stroke-opacity="0.9" stroke-linecap="round" stroke-linejoin="round" filter="url(#w1)"/>
<polyline points="1870.6,1214.1 1919.3,1216.1 1968.1,1207.4 2000.5,1195.0" fill="none" stroke="#70e81c" stroke-width="4" stroke-opacity="0.9" stroke-linecap="round" stroke-linejoin="round" filter="url(#w1)"/>
<polyline points="1601.5,1240.0 1610.7,1272.5 1627.0,1288.8 1675.7,1295.5 1708.2,1272.5 1731.5,1253.4" fill="none" stroke="#58e424" stroke-width="3.5" stroke-opacity="0.9" stroke-linecap="round" stroke-linejoin="round" filter="url(#w1)"/>
<polygon points="1984.3,1155.8 2049.3,1181.6 2130.5,1227.5 2081.8,1246.7 2016.8,1227.5 1977.9,1234.2 1967.3,1194.1" fill="#38de34" fill-opacity="0.95" filter="url(#w6)"/>
<polyline points="2002.7,1161.5 2023.8,1194.1 2016.8,1227.5" fill="none" stroke="#b8ea10" stroke-width="13" stroke-opacity="0.8" stroke-linecap="round" stroke-linejoin="round" filter="url(#w6)"/>
<polyline points="2042.9,1260.1 2065.5,1308.8" fill="none" stroke="#40e02c" stroke-width="9" stroke-opacity="0.85" stroke-linecap="round" stroke-linejoin="round" filter="url(#w3)"/>
<polyline points="2066.2,1241.9 2094.5,1299.3 2087.4,1347.1" fill="none" stroke="#2cd840" stroke-width="10" stroke-opacity="0.6" stroke-linecap="round" stroke-linejoin="round" filter="url(#w6)"/>
<polyline points="2108.6,1241.9 2136.8,1289.7" fill="none" stroke="#58e424" stroke-width="6" stroke-opacity="0.8" stroke-linecap="round" stroke-linejoin="round" filter="url(#w3)"/>
<polyline points="1946.2,1138.6 1961.7,1104.1" fill="none" stroke="#34de34" stroke-width="2.2" stroke-opacity="0.9" stroke-linecap="round" stroke-linejoin="round"/>
<polygon points="1449.0,1234.2 1508.3,1203.6 1562.0,1195.0 1594.5,1227.5 1557.8,1265.8 1497.7,1292.6" fill="#a4ea14" fill-opacity="0.92" filter="url(#w6)"/>
<polyline points="1473.0,1227.5 1508.3,1241.9 1536.6,1232.3" fill="none" stroke="#dcec08" stroke-width="14" stroke-opacity="0.75" stroke-linecap="round" stroke-linejoin="round" filter="url(#w6)"/>
<polyline points="1737.8,1155.8 1744.2,1181.6 1756.9,1207.4 1770.3,1237.1" fill="none" stroke="#b4ec10" stroke-width="4.5" stroke-opacity="1" stroke-linecap="round" stroke-linejoin="round" filter="url(#w1)"/>
<polyline points="1740.0,1159.6 1769.6,1180.7 1782.3,1194.1 1802.1,1190.2" fill="none" stroke="#c0ec0c" stroke-width="3.5" stroke-opacity="1" stroke-linecap="round" stroke-linejoin="round" filter="url(#w1)"/>
<polyline points="1742.8,1199.8 1751.3,1173.0" fill="none" stroke="#d8ec08" stroke-width="4" stroke-opacity="1" stroke-linecap="round" stroke-linejoin="round" filter="url(#w1)"/>
<polyline points="1807.7,1209.4 1830.3,1236.1" fill="none" stroke="#50e428" stroke-width="4" stroke-opacity="1" stroke-linecap="round" stroke-linejoin="round" filter="url(#w1)"/>
<polyline points="1660.2,1280.1 1699.0,1259.1 1727.2,1240.0" fill="none" stroke="#6ce81c" stroke-width="5" stroke-opacity="1" stroke-linecap="round" stroke-linejoin="round" filter="url(#w1)"/>
<polyline points="1867.8,1276.3 1886.8,1269.6 1906.6,1263.9" fill="none" stroke="#9cea18" stroke-width="4" stroke-opacity="1" stroke-linecap="round" stroke-linejoin="round" filter="url(#w1)"/>
<polyline points="1879.8,1287.8 1899.6,1274.4" fill="none" stroke="#c8ec0c" stroke-width="3.5" stroke-opacity="1" stroke-linecap="round" stroke-linejoin="round" filter="url(#w1)"/>
<polyline points="1884.0,1289.7 1893.9,1284.0" fill="none" stroke="#f08000" stroke-width="3" stroke-opacity="1" stroke-linecap="round" stroke-linejoin="round"/>
<polyline points="1741.4,1129.0 1746.3,1136.7" fill="none" stroke="#f0a000" stroke-width="3" stroke-opacity="1" stroke-linecap="round" stroke-linejoin="round"/>
<polyline points="1732.2,1088.8 1741.4,1136.7" fill="none" stroke="#34de34" stroke-width="1.8" stroke-opacity="0.8" stroke-linecap="round" stroke-linejoin="round"/>
<polyline points="1552.1,1161.5 1557.8,1182.6" fill="none" stroke="#e81000" stroke-width="4" stroke-opacity="1" stroke-linecap="round" stroke-linejoin="round"/>
<polyline points="1455.4,1237.1 1465.9,1261.0" fill="none" stroke="#f04a00" stroke-width="2.4" stroke-opacity="0.95" stroke-linecap="round" stroke-linejoin="round"/>
<polyline points="1465.9,1222.8 1476.5,1251.5" fill="none" stroke="#f04a00" stroke-width="2.4" stroke-opacity="0.95" stroke-linecap="round" stroke-linejoin="round"/>
<polyline points="1480.1,1208.4 1490.7,1237.1" fill="none" stroke="#f04a00" stroke-width="2.4" stroke-opacity="0.95" stroke-linecap="round" stroke-linejoin="round"/>
<polyline points="1529.5,1218.0 1540.1,1246.7" fill="none" stroke="#f04a00" stroke-width="2.4" stroke-opacity="0.95" stroke-linecap="round" stroke-linejoin="round"/>
<polyline points="1578.9,1208.4 1581.8,1222.8" fill="none" stroke="#f04a00" stroke-width="2.4" stroke-opacity="0.95" stroke-linecap="round" stroke-linejoin="round"/>
<polyline points="2009.7,1171.1 2019.6,1159.6" fill="none" stroke="#f07000" stroke-width="3" stroke-opacity="0.9" stroke-linecap="round" stroke-linejoin="round" filter="url(#w1)"/>
<polyline points="901.0,1466.7 923.2,1468.2 945.5,1469.7 967.7,1471.2 990.0,1472.7 1012.2,1474.2 1034.5,1476.5 1056.7,1478.8 1079.0,1481.1 1101.2,1483.4 1123.4,1485.8 1145.7,1488.1 1167.9,1490.4 1190.2,1492.7 1212.4,1495.1 1234.7,1497.4 1256.9,1499.7 1279.2,1501.0 1301.4,1502.0 1323.6,1503.0 1345.9,1504.0 1368.1,1505.0 1390.4,1505.5 1412.6,1506.1 1434.9,1506.6 1457.1,1507.1 1479.4,1507.7 1501.6,1508.2 1523.9,1509.9 1546.1,1511.8 1568.3,1513.6 1590.6,1515.2 1612.8,1516.7 1635.1,1518.0 1657.3,1519.1 1679.6,1520.0 1701.8,1520.8 1724.1,1521.4 1746.3,1521.8 1768.6,1522.1 1790.8,1522.2 1813.0,1522.1 1835.3,1521.8 1857.5,1521.4 1879.8,1520.8 1902.0,1520.0 1924.3,1519.1 1946.5,1518.0 1968.8,1516.7 1991.0,1515.2 2013.3,1513.6 2035.5,1511.8 2057.7,1509.9 2080.0,1508.5 2102.2,1508.7 2124.5,1508.9 2146.7,1509.1 2169.0,1509.3 2191.2,1509.5 2213.5,1509.7 2235.7,1507.9 2258.0,1506.0 2280.2,1504.1 2302.4,1502.2 2324.7,1500.2 2346.9,1498.3 2369.2,1496.4 2391.4,1494.5 2413.7,1492.6 2435.9,1490.6 2458.2,1490.2 2480.4,1491.5 2502.6,1492.7 2524.9,1494.0 2547.1,1495.2 2569.4,1496.5 2591.6,1498.0 2613.9,1499.5 2636.1,1501.0 2658.4,1502.5 2680.6,1504.0" fill="none" stroke="#3ce428" stroke-width="56" stroke-opacity="0.9" stroke-linecap="round" stroke-linejoin="round" filter="url(#w10)"/>
<polyline points="1353.0,1494.7 1330.4,1493.7 1307.8,1492.7 1285.2,1491.7 1262.6,1490.7 1240.0,1488.4 1217.4,1486.0 1194.8,1483.7 1172.2,1481.3 1149.6,1478.9 1127.0,1476.6 1104.4,1474.2 1081.8,1471.8 1059.2,1469.5 1036.6,1467.1 1014.0,1464.8 991.4,1463.2 968.8,1461.7 946.2,1460.2 923.6,1458.6 901.0,1457.1" fill="none" stroke="#9ce818" stroke-width="58" stroke-opacity="1" stroke-linecap="round" stroke-linejoin="round" filter="url(#w10)"/>
<polyline points="1225.8,1491.7 1211.7,1490.2 1197.6,1488.7 1183.5,1487.3 1169.3,1485.8 1155.2,1484.3 1141.1,1482.8 1127.0,1481.3 1112.8,1479.9 1098.7,1478.4 1084.6,1476.9 1070.5,1475.4 1056.4,1474.0 1042.2,1472.5 1028.1,1471.0 1014.0,1469.6 999.9,1468.6 985.7,1467.6 971.6,1466.7 957.5,1465.7 943.4,1464.8" fill="none" stroke="#b8ea10" stroke-width="20" stroke-opacity="0.6" stroke-linecap="round" stroke-linejoin="round" filter="url(#w10)"/>
<polyline points="2228.6,1498.9 2251.2,1497.0 2273.8,1495.1 2296.4,1493.1 2319.0,1491.2 2341.6,1489.2 2364.2,1487.3 2386.8,1485.3 2409.4,1483.4 2432.0,1481.4 2454.6,1480.5 2477.2,1481.7 2499.8,1483.0 2522.4,1484.3 2545.0,1485.5 2567.6,1486.8 2590.2,1488.3 2612.8,1489.8 2635.4,1491.4 2658.0,1492.9 2680.6,1494.4" fill="none" stroke="#9ce818" stroke-width="58" stroke-opacity="1" stroke-linecap="round" stroke-linejoin="round" filter="url(#w10)"/>
<polyline points="2355.8,1492.8 2369.9,1491.6 2384.0,1490.3 2398.1,1489.1 2412.3,1487.9 2426.4,1486.7 2440.5,1485.5 2454.6,1485.3 2468.8,1486.0 2482.9,1486.8 2497.0,1487.6 2511.1,1488.4 2525.2,1489.2 2539.4,1490.0 2553.5,1490.8 2567.6,1491.6 2581.7,1492.5 2595.9,1493.5 2610.0,1494.4 2624.1,1495.4 2638.2,1496.3" fill="none" stroke="#b8ea10" stroke-width="20" stroke-opacity="0.6" stroke-linecap="round" stroke-linejoin="round" filter="url(#w10)"/>
<polyline points="1261.2,1500.2 1278.8,1501.0 1296.5,1501.8 1314.1,1502.6 1331.8,1503.4 1349.4,1504.2 1367.1,1504.9 1384.7,1505.4 1402.4,1505.8 1420.0,1506.2 1437.7,1506.7 1455.4,1507.1 1473.0,1507.5 1490.7,1508.0 1508.3,1508.4 1526.0,1510.1 1543.6,1511.6 1561.3,1513.1 1578.9,1514.4 1596.6,1515.7 1614.2,1516.8 1631.9,1517.8 1649.6,1518.7 1667.2,1519.5 1684.9,1520.2 1702.5,1520.8 1720.2,1521.3 1737.8,1521.7 1755.5,1522.0 1773.1,1522.1 1790.8,1522.2 1808.5,1522.1 1826.1,1522.0 1843.8,1521.7 1861.4,1521.3 1879.1,1520.8 1896.7,1520.2 1914.4,1519.5 1932.0,1518.7 1949.7,1517.8 1967.3,1516.8 1985.0,1515.7 2002.7,1514.4 2020.3,1513.1 2038.0,1511.6 2055.6,1510.1 2073.3,1508.4 2090.9,1508.6 2108.6,1508.7 2126.2,1508.9 2143.9,1509.1 2161.6,1509.2 2179.2,1509.4 2196.9,1509.6 2214.5,1509.7 2232.2,1508.2 2249.8,1506.7 2267.5,1505.2 2285.1,1503.6 2302.8,1502.1 2320.4,1500.6" fill="none" stroke="#a4ea14" stroke-width="24" stroke-opacity="0.95" stroke-linecap="round" stroke-linejoin="round" filter="url(#w6)"/>
<polyline points="1353.0,1504.3 1367.6,1505.0 1382.1,1505.3 1396.7,1505.7 1411.3,1506.0 1425.9,1506.4 1440.5,1506.7 1455.1,1507.1 1469.7,1507.5 1484.3,1507.8 1498.9,1508.2 1513.5,1508.9 1528.1,1510.3 1542.7,1511.5 1557.3,1512.8 1571.9,1513.9 1586.5,1515.0 1601.1,1516.0 1615.7,1516.9 1630.3,1517.7 1644.9,1518.5 1659.4,1519.2 1674.0,1519.8 1688.6,1520.4 1703.2,1520.8 1717.8,1521.2 1732.4,1521.6 1747.0,1521.8 1761.6,1522.0 1776.2,1522.1 1790.8,1522.2 1805.4,1522.1 1820.0,1522.0 1834.6,1521.8 1849.2,1521.6 1863.8,1521.2 1878.4,1520.8 1893.0,1520.4 1907.6,1519.8 1922.2,1519.2 1936.7,1518.5 1951.3,1517.7 1965.9,1516.9 1980.5,1516.0 1995.1,1515.0 2009.7,1513.9 2024.3,1512.8 2038.9,1511.5 2053.5,1510.3 2068.1,1508.9 2082.7,1508.5 2097.3,1508.6 2111.9,1508.8 2126.5,1508.9 2141.1,1509.0 2155.7,1509.2 2170.3,1509.3 2184.9,1509.5 2199.5,1509.6 2214.0,1509.7 2228.6,1508.5" fill="none" stroke="#dcee08" stroke-width="13" stroke-opacity="1" stroke-linecap="round" stroke-linejoin="round" filter="url(#w3)"/>
<polyline points="1578.9,1514.4 1593.1,1515.4 1607.2,1516.3 1621.3,1517.2 1635.4,1518.0 1649.6,1518.7 1663.7,1519.4 1677.8,1520.0 1691.9,1520.5 1706.1,1520.9 1720.2,1521.3 1734.3,1521.6 1748.4,1521.9 1762.6,1522.0 1776.7,1522.1 1790.8,1522.2 1804.9,1522.1 1819.0,1522.0 1833.2,1521.9 1847.3,1521.6 1861.4,1521.3 1875.5,1520.9 1889.7,1520.5 1903.8,1520.0 1917.9,1519.4 1932.0,1518.7 1946.2,1518.0 1960.3,1517.2 1974.4,1516.3 1988.5,1515.4 2002.7,1514.4" fill="none" stroke="#f4c000" stroke-width="10" stroke-opacity="1" stroke-linecap="round" stroke-linejoin="round" filter="url(#w3)"/>
<polyline points="1670.7,1519.7 1682.8,1520.2 1694.8,1520.6 1706.8,1520.9 1718.8,1521.3 1730.8,1521.5 1742.8,1521.8 1754.8,1521.9 1766.8,1522.1 1778.8,1522.1 1790.8,1522.2 1802.8,1522.1 1814.8,1522.1 1826.8,1521.9 1838.8,1521.8 1850.8,1521.5 1862.8,1521.3 1874.8,1520.9 1886.8,1520.6 1898.8,1520.2 1910.9,1519.7" fill="none" stroke="#f07000" stroke-width="9" stroke-opacity="1" stroke-linecap="round" stroke-linejoin="round" filter="url(#w3)"/>
<polyline points="1748.4,1521.9 1759.0,1522.0 1769.6,1522.1 1780.2,1522.1 1790.8,1522.2 1801.4,1522.1 1812.0,1522.1 1822.6,1522.0 1833.2,1521.9" fill="none" stroke="#e61000" stroke-width="9" stroke-opacity="1" stroke-linecap="round" stroke-linejoin="round" filter="url(#w1)"/>
<polyline points="1759.0,1522.0 1767.0,1522.1 1774.9,1522.1 1782.9,1522.2 1790.8,1522.2 1798.7,1522.2 1806.7,1522.1 1814.6,1522.1 1822.6,1522.0" fill="none" stroke="#e00800" stroke-width="7" stroke-opacity="1" stroke-linecap="round" stroke-linejoin="round"/>
<polyline points="1430.6,1514.5 1451.8,1557.6" fill="none" stroke="#f07800" stroke-width="3" stroke-opacity="0.9" stroke-linecap="round" stroke-linejoin="round" filter="url(#w1)"/>
<polyline points="2038.0,1519.3 2009.7,1543.2" fill="none" stroke="#f07000" stroke-width="2.5" stroke-opacity="0.9" stroke-linecap="round" stroke-linejoin="round" filter="url(#w1)"/>
<polyline points="1647.7,1492.1 1638.9,1489.3 1630.2,1486.0 1621.7,1481.9 1613.5,1477.1 1605.5,1471.4 1597.7,1465.5 1589.9,1459.2 1582.3,1452.8 1574.8,1446.1 1567.4,1439.2 1560.1,1432.0 1553.0,1424.6 1546.0,1417.0 1539.1,1409.2 1532.3,1401.2 1525.7,1392.9 1519.2,1384.4 1512.9,1375.8 1506.8,1366.9 1500.7,1357.9 1494.9,1348.6 1489.2,1339.2 1484.0,1329.3 1479.3,1318.9 1474.7,1308.4 1470.4,1297.7 1466.3,1287.0 1462.3,1276.1 1458.6,1265.2 1455.1,1254.1" fill="none" stroke="#22cc6c" stroke-width="4.5" stroke-opacity="0.75" filter="url(#w1)"/>
<polygon points="1607.8,1478.5 1601.8,1474.1 1595.9,1469.6 1590.0,1464.9 1584.2,1460.1 1578.5,1455.2 1572.8,1450.1 1567.2,1444.8 1561.7,1439.5 1556.2,1434.0 1550.8,1428.4 1545.5,1422.7 1540.2,1416.8 1535.1,1410.8 1530.0,1404.7 1524.9,1398.5 1520.0,1392.1 1515.2,1385.7 1510.4,1379.1 1505.7,1372.4 1501.1,1365.6 1496.6,1358.7 1492.2,1351.7 1487.9,1344.6 1483.6,1337.4 1480.0,1329.6 1476.4,1321.7 1473.0,1313.8 1469.6,1305.7 1466.4,1297.7 1463.3,1289.5 1461.5,1291.0 1456.4,1306.5 1455.6,1318.6 1455.8,1330.1 1456.7,1341.1 1458.2,1351.8 1460.1,1362.3 1462.9,1372.0 1466.1,1381.4 1469.7,1390.5 1473.5,1399.3 1477.7,1407.8 1482.2,1415.9 1487.0,1423.8 1492.1,1431.2 1497.5,1438.4 1503.1,1445.1 1509.0,1451.5 1515.1,1457.4 1521.4,1462.9 1528.0,1468.0 1534.7,1472.6 1541.7,1476.8 1548.8,1480.4 1556.1,1483.6 1563.6,1486.1 1571.3,1488.1 1579.2,1489.3 1587.4,1489.5 1596.0,1488.3 1606.8,1481.1" fill="#fff" filter="url(#wspeckL)"/>
<polyline points="1567.3,1461.2 1559.6,1454.0 1552.1,1446.6 1544.7,1439.0 1537.5,1431.1 1530.3,1423.0 1523.3,1414.7 1516.5,1406.1 1509.8,1397.4 1503.3,1388.4 1496.9,1379.2 1490.7,1369.9 1484.6,1360.3" fill="none" stroke="#fff" stroke-width="5" stroke-opacity="0.85" stroke-dasharray="6 3 3 2"/>
<polyline points="1933.9,1492.1 1942.7,1489.3 1951.4,1486.0 1959.9,1481.9 1968.1,1477.1 1976.1,1471.4 1983.9,1465.5 1991.7,1459.2 1999.3,1452.8 2006.8,1446.1 2014.2,1439.2 2021.5,1432.0 2028.6,1424.6 2035.6,1417.0 2042.5,1409.2 2049.3,1401.2 2055.9,1392.9 2062.4,1384.4 2068.7,1375.8 2074.8,1366.9 2080.9,1357.9 2086.7,1348.6 2092.4,1339.2 2097.6,1329.3 2102.3,1318.9 2106.9,1308.4 2111.2,1297.7 2115.3,1287.0 2119.3,1276.1 2123.0,1265.2 2126.5,1254.1" fill="none" stroke="#22cc6c" stroke-width="4.5" stroke-opacity="0.75" filter="url(#w1)"/>
<polygon points="1901.8,1503.9 1911.3,1502.1 1920.9,1500.2 1930.6,1497.9 1940.1,1495.1 1949.6,1491.7 1958.9,1487.5 1967.9,1482.5 1976.6,1476.5 1985.1,1470.1 1993.5,1463.3 2001.8,1456.3 2009.9,1449.0 2017.9,1441.5 2025.8,1433.6 2033.5,1425.6 2041.0,1417.2 2048.4,1408.6 2055.7,1399.7 2062.7,1390.6 2069.6,1381.3 2076.4,1371.8 2082.9,1362.0 2089.3,1352.0 2095.5,1341.7 2101.0,1330.9 2106.1,1319.6 2111.0,1308.2 2115.6,1296.6 2120.0,1284.9 2124.2,1273.0 2130.3,1277.8 2136.1,1298.1 2136.4,1314.8 2135.3,1330.6 2133.2,1346.0 2130.2,1360.8 2126.2,1375.0 2121.2,1388.2 2115.5,1401.0 2109.3,1413.2 2102.5,1424.8 2095.1,1435.7 2087.3,1446.1 2079.0,1455.7 2070.3,1464.6 2061.2,1472.8 2051.7,1480.1 2041.8,1486.7 2031.6,1492.3 2021.1,1497.0 2010.3,1500.7 1999.2,1503.2 1987.7,1504.2 1975.5,1502.6 1961.9,1496.1 1952.5,1500.4 1942.9,1503.9 1933.1,1506.8 1923.3,1509.2 1913.6,1511.2 1903.8,1513.1" fill="#fff" filter="url(#wspeck)"/>
<polyline points="1923.0,1504.5 1934.5,1501.6 1946.0,1498.0 1957.2,1493.4 1968.1,1487.6 1978.5,1480.6 1988.7,1472.8 1998.7,1464.7 2008.5,1456.1 2018.1,1447.2 2027.5,1437.8 2036.7,1428.1 2045.7,1418.1 2054.5,1407.6 2063.1,1396.9 2071.4,1385.8 2079.4,1374.3 2087.2,1362.6 2094.8,1350.5 2101.9,1338.0 2108.1,1324.5" fill="none" stroke="#fff" stroke-width="6" stroke-opacity="0.92" stroke-dasharray="14 2 6 2"/>
<line x1="802.1" x2="802.1" y1="1012.3" y2="1585" stroke="#000" stroke-opacity="0.09" stroke-width="1"/>
<line x1="872.7" x2="872.7" y1="1012.3" y2="1585" stroke="#000" stroke-opacity="0.09" stroke-width="1"/>
<line x1="943.4" x2="943.4" y1="1012.3" y2="1585" stroke="#000" stroke-opacity="0.09" stroke-width="1"/>
<line x1="1014.0" x2="1014.0" y1="1012.3" y2="1585" stroke="#000" stroke-opacity="0.09" stroke-width="1"/>
<line x1="1084.6" x2="1084.6" y1="1012.3" y2="1585" stroke="#000" stroke-opacity="0.09" stroke-width="1"/>
<line x1="1155.2" x2="1155.2" y1="1012.3" y2="1585" stroke="#000" stroke-opacity="0.09" stroke-width="1"/>
<line x1="1225.8" x2="1225.8" y1="1012.3" y2="1585" stroke="#000" stroke-opacity="0.09" stroke-width="1"/>
<line x1="1296.5" x2="1296.5" y1="1012.3" y2="1585" stroke="#000" stroke-opacity="0.09" stroke-width="1"/>
<line x1="1367.1" x2="1367.1" y1="1012.3" y2="1585" stroke="#000" stroke-opacity="0.09" stroke-width="1"/>
<line x1="1437.7" x2="1437.7" y1="1012.3" y2="1585" stroke="#000" stroke-opacity="0.09" stroke-width="1"/>
<line x1="1508.3" x2="1508.3" y1="1012.3" y2="1585" stroke="#000" stroke-opacity="0.09" stroke-width="1"/>
<line x1="1578.9" x2="1578.9" y1="1012.3" y2="1585" stroke="#000" stroke-opacity="0.09" stroke-width="1"/>
<line x1="1649.6" x2="1649.6" y1="1012.3" y2="1585" stroke="#000" stroke-opacity="0.09" stroke-width="1"/>
<line x1="1720.2" x2="1720.2" y1="1012.3" y2="1585" stroke="#000" stroke-opacity="0.09" stroke-width="1"/>
<line x1="1790.8" x2="1790.8" y1="1012.3" y2="1585" stroke="#000" stroke-opacity="0.09" stroke-width="1"/>
<line x1="1861.4" x2="1861.4" y1="1012.3" y2="1585" stroke="#000" stroke-opacity="0.09" stroke-width="1"/>
<line x1="1932.0" x2="1932.0" y1="1012.3" y2="1585" stroke="#000" stroke-opacity="0.09" stroke-width="1"/>
<line x1="2002.7" x2="2002.7" y1="1012.3" y2="1585" stroke="#000" stroke-opacity="0.09" stroke-width="1"/>
<line x1="2073.3" x2="2073.3" y1="1012.3" y2="1585" stroke="#000" stroke-opacity="0.09" stroke-width="1"/>
<line x1="2143.9" x2="2143.9" y1="1012.3" y2="1585" stroke="#000" stroke-opacity="0.09" stroke-width="1"/>
<line x1="2214.5" x2="2214.5" y1="1012.3" y2="1585" stroke="#000" stroke-opacity="0.09" stroke-width="1"/>
<line x1="2285.1" x2="2285.1" y1="1012.3" y2="1585" stroke="#000" stroke-opacity="0.09" stroke-width="1"/>
<line x1="2355.8" x2="2355.8" y1="1012.3" y2="1585" stroke="#000" stroke-opacity="0.09" stroke-width="1"/>
<line x1="2426.4" x2="2426.4" y1="1012.3" y2="1585" stroke="#000" stroke-opacity="0.09" stroke-width="1"/>
<line x1="2497.0" x2="2497.0" y1="1012.3" y2="1585" stroke="#000" stroke-opacity="0.09" stroke-width="1"/>
<line x1="2567.6" x2="2567.6" y1="1012.3" y2="1585" stroke="#000" stroke-opacity="0.09" stroke-width="1"/>
<line x1="2638.2" x2="2638.2" y1="1012.3" y2="1585" stroke="#000" stroke-opacity="0.09" stroke-width="1"/>
<line x1="2708.9" x2="2708.9" y1="1012.3" y2="1585" stroke="#000" stroke-opacity="0.09" stroke-width="1"/>
<line x1="2779.5" x2="2779.5" y1="1012.3" y2="1585" stroke="#000" stroke-opacity="0.09" stroke-width="1"/>
<line x1="789.4" x2="2791.7" y1="1060.1" y2="1060.1" stroke="#000" stroke-opacity="0.09" stroke-width="1"/>
<line x1="789.4" x2="2791.7" y1="1108.0" y2="1108.0" stroke="#000" stroke-opacity="0.09" stroke-width="1"/>
<line x1="789.4" x2="2791.7" y1="1155.8" y2="1155.8" stroke="#000" stroke-opacity="0.09" stroke-width="1"/>
<line x1="789.4" x2="2791.7" y1="1203.6" y2="1203.6" stroke="#000" stroke-opacity="0.09" stroke-width="1"/>
<line x1="789.4" x2="2791.7" y1="1251.5" y2="1251.5" stroke="#000" stroke-opacity="0.09" stroke-width="1"/>
<line x1="789.4" x2="2791.7" y1="1299.3" y2="1299.3" stroke="#000" stroke-opacity="0.09" stroke-width="1"/>
<line x1="789.4" x2="2791.7" y1="1347.1" y2="1347.1" stroke="#000" stroke-opacity="0.09" stroke-width="1"/>
<line x1="789.4" x2="2791.7" y1="1394.9" y2="1394.9" stroke="#000" stroke-opacity="0.09" stroke-width="1"/>
<line x1="789.4" x2="2791.7" y1="1442.8" y2="1442.8" stroke="#000" stroke-opacity="0.09" stroke-width="1"/>
<line x1="789.4" x2="2791.7" y1="1490.6" y2="1490.6" stroke="#000" stroke-opacity="0.09" stroke-width="1"/>
<line x1="789.4" x2="2791.7" y1="1538.4" y2="1538.4" stroke="#000" stroke-opacity="0.09" stroke-width="1"/>
</g>
<rect x="789.4" y="1012.3" width="2002.2999999999997" height="572.7" fill="none" stroke="#7c7c7c" stroke-width="1.2"/></svg>
<div class="a" style="left:890.80px;top:1012.30px;width:1800.00px;height:409.86px;transform:scaleY(1.3546);transform-origin:50% 0;clip-path:polygon(900px 0,20.4px 409.9px,1779.6px 409.9px);background:repeating-radial-gradient(circle at 50% 0,rgba(255,255,255,0.05) 0px,rgba(255,255,255,0) 1.2px,rgba(0,40,60,0.05) 2.4px,rgba(0,0,0,0) 3.4px),repeating-conic-gradient(from 110deg at 50% 0,rgba(255,255,255,0.07) 0deg,rgba(255,255,255,0) 0.22deg,rgba(0,0,0,0.05) 0.45deg,rgba(0,0,0,0) 0.62deg,rgba(255,255,255,0.045) 0.9deg,rgba(0,30,80,0.055) 1.15deg,rgba(255,255,255,0) 1.37deg);"></div>
<span class="t" style="left:770.36px;top:1004.50px;font-size:15px;line-height:20px;color:#5e5e5e;">0</span>
<span class="t" style="left:770.36px;top:1052.33px;font-size:15px;line-height:20px;color:#5e5e5e;">5</span>
<span class="t" style="left:762.01px;top:1100.16px;font-size:15px;line-height:20px;color:#5e5e5e;">10</span>
<span class="t" style="left:762.01px;top:1147.99px;font-size:15px;line-height:20px;color:#5e5e5e;">15</span>
<span class="t" style="left:762.01px;top:1195.82px;font-size:15px;line-height:20px;color:#5e5e5e;">20</span>
<span class="t" style="left:762.01px;top:1243.65px;font-size:15px;line-height:20px;color:#5e5e5e;">25</span>
<span class="t" style="left:762.01px;top:1291.48px;font-size:15px;line-height:20px;color:#5e5e5e;">30</span>
<span class="t" style="left:762.01px;top:1339.31px;font-size:15px;line-height:20px;color:#5e5e5e;">35</span>
<span class="t" style="left:762.01px;top:1387.14px;font-size:15px;line-height:20px;color:#5e5e5e;">40</span>
<span class="t" style="left:762.01px;top:1434.97px;font-size:15px;line-height:20px;color:#5e5e5e;">45</span>
<span class="t" style="left:762.01px;top:1482.80px;font-size:15px;line-height:20px;color:#5e5e5e;">50</span>
<span class="t" style="left:762.01px;top:1530.63px;font-size:15px;line-height:20px;color:#5e5e5e;">55</span>
<span class="t" style="left:787.10px;top:1592.50px;font-size:15px;line-height:20px;color:#5e5e5e;">-140</span>
<span class="t" style="left:857.72px;top:1592.50px;font-size:15px;line-height:20px;color:#5e5e5e;">-130</span>
<span class="t" style="left:928.34px;top:1592.50px;font-size:15px;line-height:20px;color:#5e5e5e;">-120</span>
<span class="t" style="left:999.52px;top:1592.50px;font-size:15px;line-height:20px;color:#5e5e5e;">-110</span>
<span class="t" style="left:1069.58px;top:1592.50px;font-size:15px;line-height:20px;color:#5e5e5e;">-100</span>
<span class="t" style="left:1144.38px;top:1592.50px;font-size:15px;line-height:20px;color:#5e5e5e;">-90</span>
<span class="t" style="left:1215.00px;top:1592.50px;font-size:15px;line-height:20px;color:#5e5e5e;">-80</span>
<span class="t" style="left:1285.62px;top:1592.50px;font-size:15px;line-height:20px;color:#5e5e5e;">-70</span>
<span class="t" style="left:1356.24px;top:1592.50px;font-size:15px;line-height:20px;color:#5e5e5e;">-60</span>
<span class="t" style="left:1426.86px;top:1592.50px;font-size:15px;line-height:20px;color:#5e5e5e;">-50</span>
<span class="t" style="left:1497.48px;top:1592.50px;font-size:15px;line-height:20px;color:#5e5e5e;">-40</span>
<span class="t" style="left:1568.10px;top:1592.50px;font-size:15px;line-height:20px;color:#5e5e5e;">-30</span>
<span class="t" style="left:1638.72px;top:1592.50px;font-size:15px;line-height:20px;color:#5e5e5e;">-20</span>
<span class="t" style="left:1709.34px;top:1592.50px;font-size:15px;line-height:20px;color:#5e5e5e;">-10</span>
<span class="t" style="left:1786.63px;top:1592.50px;font-size:15px;line-height:20px;color:#5e5e5e;">0</span>
<span class="t" style="left:1853.08px;top:1592.50px;font-size:15px;line-height:20px;color:#5e5e5e;">10</span>
<span class="t" style="left:1923.70px;top:1592.50px;font-size:15px;line-height:20px;color:#5e5e5e;">20</span>
<span class="t" style="left:1994.32px;top:1592.50px;font-size:15px;line-height:20px;color:#5e5e5e;">30</span>
<span class="t" style="left:2064.94px;top:1592.50px;font-size:15px;line-height:20px;color:#5e5e5e;">40</span>
<span class="t" style="left:2135.56px;top:1592.50px;font-size:15px;line-height:20px;color:#5e5e5e;">50</span>
<span class="t" style="left:2206.18px;top:1592.50px;font-size:15px;line-height:20px;color:#5e5e5e;">60</span>
<span class="t" style="left:2276.80px;top:1592.50px;font-size:15px;line-height:20px;color:#5e5e5e;">70</span>
<span class="t" style="left:2347.42px;top:1592.50px;font-size:15px;line-height:20px;color:#5e5e5e;">80</span>
<span class="t" style="left:2418.04px;top:1592.50px;font-size:15px;line-height:20px;color:#5e5e5e;">90</span>
<span class="t" style="left:2484.48px;top:1592.50px;font-size:15px;line-height:20px;color:#5e5e5e;">100</span>
<span class="t" style="left:2555.66px;top:1592.50px;font-size:15px;line-height:20px;color:#5e5e5e;">110</span>
<span class="t" style="left:2625.72px;top:1592.50px;font-size:15px;line-height:20px;color:#5e5e5e;">120</span>
<span class="t" style="left:2696.34px;top:1592.50px;font-size:15px;line-height:20px;color:#5e5e5e;">130</span>
<span class="t" style="left:2766.96px;top:1592.50px;font-size:15px;line-height:20px;color:#5e5e5e;">140</span>
<span class="t" style="left:1741.00px;top:1620.00px;font-size:13.5px;line-height:18px;color:#5e5e5e;letter-spacing:-0.126px;">Across Track (m)</span>
<span class="t" style="left:628.88px;top:1288.70px;font-size:13.5px;line-height:18px;color:#5e5e5e;transform:rotate(-90deg);transform-origin:center;">Depth (m) (unrefracted)</span>
<div class="a" style="left:626px;top:71.5px;width:234.60000000000002px;height:28.0px;box-sizing:border-box;border:1px solid #b9b9b9;border-radius:3px;background:linear-gradient(#fefefe,#f1f1f1);"></div>
<span class="t" style="left:631.50px;top:75.60px;font-size:16.5px;line-height:21px;color:#111;letter-spacing:-1.200px;">Bump1m</span>
<div class="a" style="left:872px;top:71.5px;width:133.5px;height:28.0px;box-sizing:border-box;border:1px solid #b9b9b9;border-radius:3px;background:linear-gradient(#fefefe,#f1f1f1);"></div>
<span class="t" style="left:877.00px;top:75.60px;font-size:16px;line-height:21px;color:#8a8a8a;letter-spacing:-0.461px;">Surface's Files</span>
<div class="a" style="left:1007.5px;top:71.5px;width:156.0999999999999px;height:28.0px;box-sizing:border-box;border:1px solid #b9b9b9;border-radius:3px;background:linear-gradient(#fefefe,#f1f1f1);"></div>
<span class="t" style="left:1012.00px;top:75.60px;font-size:16px;line-height:21px;color:#8a8a8a;letter-spacing:-0.342px;">Inside Selection</span>
<svg class="a" style="left:0;top:0;pointer-events:none" width="2880" height="1755" viewBox="0 0 2880 1755"><defs><linearGradient id="rgb1" x1="0" x2="1" y1="0" y2="0"><stop offset="0" stop-color="#e84a20"/><stop offset="0.22" stop-color="#c8782c"/><stop offset="0.45" stop-color="#58b848"/><stop offset="0.7" stop-color="#1898a0"/><stop offset="1" stop-color="#2058c8"/></linearGradient>
<linearGradient id="rgb2" x1="0" x2="1" y1="0" y2="0"><stop offset="0" stop-color="#9cc0fa"/><stop offset="0.2" stop-color="#2a8cec"/><stop offset="0.38" stop-color="#20b884"/><stop offset="0.58" stop-color="#30e81c"/><stop offset="0.78" stop-color="#f2f000"/><stop offset="0.9" stop-color="#f08000"/><stop offset="1" stop-color="#e81c00"/></linearGradient>
<linearGradient id="rgb3" x1="0" x2="1" y1="0" y2="0"><stop offset="0" stop-color="#e84a20"/><stop offset="0.3" stop-color="#c0902c"/><stop offset="0.5" stop-color="#48b858"/><stop offset="0.75" stop-color="#1890b0"/><stop offset="1" stop-color="#2058c8"/></linearGradient></defs>
<rect x="9" y="77.0" width="1.2" height="1.2" fill="#bdbdbd"/><rect x="11.9" y="78.6" width="1.2" height="1.2" fill="#bdbdbd"/>
<rect x="9" y="80.2" width="1.2" height="1.2" fill="#bdbdbd"/><rect x="11.9" y="81.8" width="1.2" height="1.2" fill="#bdbdbd"/>
<rect x="9" y="83.4" width="1.2" height="1.2" fill="#bdbdbd"/><rect x="11.9" y="85.0" width="1.2" height="1.2" fill="#bdbdbd"/>
<rect x="9" y="86.6" width="1.2" height="1.2" fill="#bdbdbd"/><rect x="11.9" y="88.2" width="1.2" height="1.2" fill="#bdbdbd"/>
<rect x="9" y="89.8" width="1.2" height="1.2" fill="#bdbdbd"/><rect x="11.9" y="91.4" width="1.2" height="1.2" fill="#bdbdbd"/>
<path d="M29 82.6V99H50.5V79.6L42.5 71.6H38.5" fill="none" stroke="#2b2b2b" stroke-width="2.3" stroke-linejoin="miter"/>
<path d="M42.5 71.6V79.6H50.5" fill="none" stroke="#2b2b2b" stroke-width="2.3"/>
<polygon points="35.80,74.40 33.28,75.14 34.88,77.22 32.41,76.34 32.48,78.97 31.00,76.80 29.52,78.97 29.59,76.34 27.12,77.22 28.72,75.14 26.20,74.40 28.72,73.66 27.12,71.58 29.59,72.46 29.52,69.83 31.00,72.00 32.48,69.83 32.41,72.46 34.88,71.58 33.28,73.66" fill="#2b2b2b"/>
<path d="M40.00 79.76L47.60 83.56L47.60 92.08L40.00 96.26L32.40 92.08L32.40 83.56ZM40.00 79.76L40.00 88.66M40.00 88.66L32.40 92.08M40.00 88.66L47.60 92.08M34.93 82.30L34.93 90.94M42.53 81.03L42.53 89.80M32.40 86.40L40.00 82.73M40.00 82.73L47.60 86.40M37.47 81.03L37.47 89.80M45.07 82.30L45.07 90.94M32.40 89.24L40.00 85.69M40.00 85.69L47.60 89.24" fill="none" stroke="#2b2b2b" stroke-width="1.1" stroke-linejoin="round"/>
<path d="M66.4 70.4H79.7L87.7 78.4V98.6H66.4Z" fill="none" stroke="#2b2b2b" stroke-width="2.3" stroke-linejoin="miter"/>
<path d="M79.7 70.4V78.4H87.7" fill="none" stroke="#2b2b2b" stroke-width="2.3"/>
<path d="M77.00 78.83L84.90 82.78L84.90 91.63L77.00 95.97L69.10 91.63L69.10 82.78ZM77.00 78.83L77.00 88.07M77.00 88.07L69.10 91.63M77.00 88.07L84.90 91.63M71.73 81.46L71.73 90.44M79.63 80.15L79.63 89.26M69.10 85.73L77.00 81.91M77.00 81.91L84.90 85.73M74.37 80.15L74.37 89.26M82.27 81.46L82.27 90.44M69.10 88.68L77.00 84.99M77.00 84.99L84.90 88.68" fill="none" stroke="#2b2b2b" stroke-width="1.1" stroke-linejoin="round"/>
<rect x="105.0" y="72" width="1" height="26.5" fill="#d2d2d2"/>
<path d="M117.4 70.4H130.6L138.6 78.4V98.6H117.4Z" fill="none" stroke="#2b2b2b" stroke-width="2.3" stroke-linejoin="miter"/>
<path d="M130.6 70.4V78.4H138.6" fill="none" stroke="#2b2b2b" stroke-width="2.3"/>
<path d="M125.13 81.68A4 4 0 0 0 131.07 81.68" fill="none" stroke="#2b2b2b" stroke-width="1.15" stroke-linecap="round"/>
<path d="M123.64 83.01A6 6 0 0 0 132.56 83.01" fill="none" stroke="#2b2b2b" stroke-width="1.15" stroke-linecap="round"/>
<path d="M122.15 84.35A8 8 0 0 0 134.05 84.35" fill="none" stroke="#2b2b2b" stroke-width="1.15" stroke-linecap="round"/>
<path d="M120.67 85.69A10 10 0 0 0 135.53 85.69" fill="none" stroke="#2b2b2b" stroke-width="1.15" stroke-linecap="round"/>
<circle cx="139" cy="94.1" r="7.5" fill="#f6f6f6"/><circle cx="139" cy="94.1" r="6.3" fill="#2b2b2b"/>
<path d="M135 94.1H143M139 90.1V98.1" stroke="#fff" stroke-width="2.4"/>
<path d="M158.4 70.4H171.6L179.6 78.4V98.6H158.4Z" fill="none" stroke="#2b2b2b" stroke-width="2.3" stroke-linejoin="miter"/>
<path d="M171.6 70.4V78.4H179.6" fill="none" stroke="#2b2b2b" stroke-width="2.3"/>
<path d="M163.6 75.5L167.4 79.30000000000001M167.4 75.5L163.6 79.30000000000001" stroke="#2b2b2b" stroke-width="1.5"/>
<path d="M162.1 83.5L165.9 87.30000000000001M165.9 83.5L162.1 87.30000000000001" stroke="#2b2b2b" stroke-width="1.5"/>
<path d="M169.29999999999998 83.1L173.1 86.9M173.1 83.1L169.29999999999998 86.9" stroke="#2b2b2b" stroke-width="1.5"/>
<path d="M167.1 89.69999999999999L170.9 93.5M170.9 89.69999999999999L167.1 93.5" stroke="#2b2b2b" stroke-width="1.5"/>
<circle cx="180.1" cy="94.1" r="7.5" fill="#f6f6f6"/><circle cx="180.1" cy="94.1" r="6.3" fill="#2b2b2b"/>
<path d="M176.1 94.1H184.1M180.1 90.1V98.1" stroke="#fff" stroke-width="2.4"/>
<rect x="196.8" y="72" width="1" height="26.5" fill="#d2d2d2"/>
<path d="M209.4 70.6H222.6L230.6 78.6V98.4H209.4Z" fill="none" stroke="#2b2b2b" stroke-width="2.3" stroke-linejoin="miter"/>
<path d="M222.6 70.6V78.6H230.6" fill="none" stroke="#2b2b2b" stroke-width="2.3"/>
<path d="M216.63 81.28A4 4 0 0 0 222.57 81.28" fill="none" stroke="#2b2b2b" stroke-width="1.15" stroke-linecap="round"/>
<path d="M215.14 82.61A6 6 0 0 0 224.06 82.61" fill="none" stroke="#2b2b2b" stroke-width="1.15" stroke-linecap="round"/>
<path d="M213.65 83.95A8 8 0 0 0 225.55 83.95" fill="none" stroke="#2b2b2b" stroke-width="1.15" stroke-linecap="round"/>
<path d="M212.17 85.29A10 10 0 0 0 227.03 85.29" fill="none" stroke="#2b2b2b" stroke-width="1.15" stroke-linecap="round"/>
<circle cx="231.8" cy="94.2" r="8" fill="#f4f4f4"/>
<path d="M226.39 92.75A5.6 5.6 0 0 1 236.88 91.83" fill="none" stroke="#2b2b2b" stroke-width="1.7"/>
<path d="M237.21 95.65A5.6 5.6 0 0 1 226.72 96.57" fill="none" stroke="#2b2b2b" stroke-width="1.7"/>
<path d="M234.51 94.77L237.59 90.43L240.11 95.33Z" fill="#2b2b2b"/>
<path d="M229.09 93.63L226.01 97.97L223.49 93.07Z" fill="#2b2b2b"/>
<rect x="248.0" y="72" width="1" height="26.5" fill="#d2d2d2"/>
<path d="M275.10,76.67L275.10,79.33L272.82,79.47L272.06,81.29L273.58,83.00L271.70,84.88L269.99,83.36L268.17,84.12L268.03,86.40L265.37,86.40L265.23,84.12L263.41,83.36L261.70,84.88L259.82,83.00L261.34,81.29L260.58,79.47L258.30,79.33L258.30,76.67L260.58,76.53L261.34,74.71L259.82,73.00L261.70,71.12L263.41,72.64L265.23,71.88L265.37,69.60L268.03,69.60L268.17,71.88L269.99,72.64L271.70,71.12L273.58,73.00L272.06,74.71L272.82,76.53ZM270.27,78A3.57,3.57 0 1 0 263.13,78A3.57,3.57 0 1 0 270.27,78Z" fill="#2b2b2b" fill-rule="evenodd"/>
<path d="M289.48,88.67L289.48,91.73L286.85,91.89L285.98,93.99L287.73,95.96L285.56,98.13L283.59,96.38L281.49,97.25L281.33,99.88L278.27,99.88L278.11,97.25L276.01,96.38L274.04,98.13L271.87,95.96L273.62,93.99L272.75,91.89L270.12,91.73L270.12,88.67L272.75,88.51L273.62,86.41L271.87,84.44L274.04,82.27L276.01,84.02L278.11,83.15L278.27,80.52L281.33,80.52L281.49,83.15L283.59,84.02L285.56,82.27L287.73,84.44L285.98,86.41L286.85,88.51ZM283.92,90.2A4.12,4.12 0 1 0 275.68,90.2A4.12,4.12 0 1 0 283.92,90.2Z" fill="#2b2b2b" fill-rule="evenodd"/>
<path d="M304.85 81.91A10.4 10.4 0 0 1 324.33 80.20" fill="none" stroke="#2b2b2b" stroke-width="2.7"/>
<path d="M324.95 87.29A10.4 10.4 0 0 1 305.47 89.00" fill="none" stroke="#2b2b2b" stroke-width="2.7"/>
<path d="M320.54 85.32L325.60 78.19L329.74 86.24Z" fill="#2b2b2b"/>
<path d="M309.26 83.88L304.20 91.01L300.06 82.96Z" fill="#2b2b2b"/>
<rect x="339.8" y="72" width="1" height="26.5" fill="#d2d2d2"/>
<path d="M351.00 92.72L352.92 90.39L354.84 88.28L356.76 86.56L358.68 85.32L360.60 84.58L362.52 84.29L364.44 84.30L366.36 83.88L368.28 82.93L370.20 82.01M356.00 95.10L357.78 92.91L359.56 90.92L361.34 89.29L363.12 88.09L364.90 87.34L366.68 87.00L368.46 86.94L370.24 86.49L372.02 85.56L373.80 84.67M361.00 97.48L362.64 95.43L364.28 93.56L365.92 92.01L367.56 90.85L369.20 90.10L370.84 89.71L372.48 89.57L374.12 89.09L375.76 88.20L377.40 87.34M366.00 99.86L367.50 97.95L369.00 96.20L370.50 94.73L372.00 93.61L373.50 92.86L375.00 92.42L376.50 92.21L378.00 91.70L379.50 90.83L381.00 90.00M351.00 92.72L354.75 94.50L358.50 96.29L362.25 98.08L366.00 99.86M357.40 86.09L360.80 88.15L364.20 90.21L367.60 92.26L371.00 94.32M363.80 84.27L366.85 86.27L369.90 88.26L372.95 90.26L376.00 92.26M370.20 82.01L372.90 84.01L375.60 86.00L378.30 88.00L381.00 90.00" fill="none" stroke="#2b2b2b" stroke-width="1.5" stroke-linejoin="round" stroke-linecap="round"/>
<polygon points="362.30,77.00 360.13,77.70 361.34,79.64 359.22,78.78 358.91,81.04 357.84,79.02 356.15,80.55 356.63,78.32 354.35,78.40 356.15,77.00 354.35,75.60 356.63,75.68 356.15,73.45 357.84,74.98 358.91,72.96 359.22,75.22 361.34,74.36 360.13,76.30" fill="#2b2b2b"/>
<path d="M353.6 71.8A7.4 7.4 0 0 0 352.2 81.6" fill="none" stroke="#2b2b2b" stroke-width="1.1"/><path d="M360.4 69.9A7.4 7.4 0 0 1 365.3 78.6" fill="none" stroke="#2b2b2b" stroke-width="1.1"/>
<path d="M392.30 92.72L394.22 90.39L396.14 88.28L398.06 86.56L399.98 85.32L401.90 84.58L403.82 84.29L405.74 84.30L407.66 83.88L409.58 82.93L411.50 82.01M397.30 95.10L399.08 92.91L400.86 90.92L402.64 89.29L404.42 88.09L406.20 87.34L407.98 87.00L409.76 86.94L411.54 86.49L413.32 85.56L415.10 84.67M402.30 97.48L403.94 95.43L405.58 93.56L407.22 92.01L408.86 90.85L410.50 90.10L412.14 89.71L413.78 89.57L415.42 89.09L417.06 88.20L418.70 87.34M407.30 99.86L408.80 97.95L410.30 96.20L411.80 94.73L413.30 93.61L414.80 92.86L416.30 92.42L417.80 92.21L419.30 91.70L420.80 90.83L422.30 90.00M392.30 92.72L396.05 94.50L399.80 96.29L403.55 98.08L407.30 99.86M398.70 86.09L402.10 88.15L405.50 90.21L408.90 92.26L412.30 94.32M405.10 84.27L408.15 86.27L411.20 88.26L414.25 90.26L417.30 92.26M411.50 82.01L414.20 84.01L416.90 86.00L419.60 88.00L422.30 90.00" fill="none" stroke="#2b2b2b" stroke-width="1.5" stroke-linejoin="round" stroke-linecap="round"/>
<rect x="393.8" y="76.2" width="10.2" height="7.6" fill="#2b2b2b"/><path d="M396 76.5V74.2A2.9 2.9 0 0 1 401.8 74.2V76.5" fill="none" stroke="#2b2b2b" stroke-width="1.7"/><rect x="398.4" y="78.6" width="1" height="2.6" fill="#fff"/>
<rect x="432.1" y="72" width="1" height="26.5" fill="#d2d2d2"/>
<rect x="438.2" y="66.2" width="39.60000000000002" height="38.3" rx="3" fill="#dddddd" stroke="#b2b2b2" stroke-width="1"/>
<path d="M445.6 70H454.6V76.8L450.1 84L445.6 76.8Z" fill="#fff" stroke="#2b2b2b" stroke-width="1"/>
<path d="M445.90000000000003 70H448.0V76.2H445.90000000000003ZM448.8 70H451.40000000000003V77H448.8ZM452.20000000000005 70H454.3V76.2H452.20000000000005Z" fill="#2b2b2b"/>
<path d="M448.5 81.4H451.70000000000005L450.1 84.2Z" fill="#2b2b2b"/>
<path d="M454.34 86.58A5.2 5.2 0 0 0 462.86 86.58" fill="none" stroke="#2b2b2b" stroke-width="2.0" stroke-linecap="round"/>
<path d="M451.56 88.53A8.6 8.6 0 0 0 465.64 88.53" fill="none" stroke="#2b2b2b" stroke-width="2.0" stroke-linecap="round"/>
<path d="M448.77 90.48A12 12 0 0 0 468.43 90.48" fill="none" stroke="#2b2b2b" stroke-width="2.0" stroke-linecap="round"/>
<circle cx="458.6" cy="83.6" r="2.1" fill="#2b2b2b"/>
<path d="M484.50 93.42L486.42 91.09L488.34 88.98L490.26 87.26L492.18 86.02L494.10 85.28L496.02 84.99L497.94 85.00L499.86 84.58L501.78 83.63L503.70 82.71M489.50 95.80L491.28 93.61L493.06 91.62L494.84 89.99L496.62 88.79L498.40 88.04L500.18 87.70L501.96 87.64L503.74 87.19L505.52 86.26L507.30 85.37M494.50 98.18L496.14 96.13L497.78 94.26L499.42 92.71L501.06 91.55L502.70 90.80L504.34 90.41L505.98 90.27L507.62 89.79L509.26 88.90L510.90 88.04M499.50 100.56L501.00 98.65L502.50 96.90L504.00 95.43L505.50 94.31L507.00 93.56L508.50 93.12L510.00 92.91L511.50 92.40L513.00 91.53L514.50 90.70M484.50 93.42L488.25 95.20L492.00 96.99L495.75 98.78L499.50 100.56M490.90 86.79L494.30 88.85L497.70 90.91L501.10 92.96L504.50 95.02M497.30 84.97L500.35 86.97L503.40 88.96L506.45 90.96L509.50 92.96M503.70 82.71L506.40 84.71L509.10 86.70L511.80 88.70L514.50 90.70" fill="none" stroke="#d0d0d0" stroke-width="1.2" stroke-linejoin="round" stroke-linecap="round"/>
<path d="M490.5 86.7L497.0 84.4L500.0 91.7L508.5 95.4L501.5 98.80000000000001L494.7 93.8Z" fill="#f7f7f7" stroke="#2b2b2b" stroke-width="1.4" stroke-linejoin="round"/>
<path d="M493.5 85.60000000000001L497.5 92.7L505.0 97.2M492.8 90.2L498.5 87.8M496.1 95.0L503.1 92.8" fill="none" stroke="#2b2b2b" stroke-width="1.3"/>
<path d="M488 70.6H497V77.39999999999999L492.5 84.6L488 77.39999999999999Z" fill="#fff" stroke="#2b2b2b" stroke-width="1"/>
<path d="M488.3 70.6H490.4V76.8H488.3ZM491.2 70.6H493.8V77.6H491.2ZM494.6 70.6H496.7V76.8H494.6Z" fill="#2b2b2b"/>
<path d="M490.9 82.0H494.1L492.5 84.8Z" fill="#2b2b2b"/>
<path d="M525.00 93.22L526.92 90.89L528.84 88.78L530.76 87.06L532.68 85.82L534.60 85.08L536.52 84.79L538.44 84.80L540.36 84.38L542.28 83.43L544.20 82.51M530.00 95.60L531.78 93.41L533.56 91.42L535.34 89.79L537.12 88.59L538.90 87.84L540.68 87.50L542.46 87.44L544.24 86.99L546.02 86.06L547.80 85.17M535.00 97.98L536.64 95.93L538.28 94.06L539.92 92.51L541.56 91.35L543.20 90.60L544.84 90.21L546.48 90.07L548.12 89.59L549.76 88.70L551.40 87.84M540.00 100.36L541.50 98.45L543.00 96.70L544.50 95.23L546.00 94.11L547.50 93.36L549.00 92.92L550.50 92.71L552.00 92.20L553.50 91.33L555.00 90.50M525.00 93.22L528.75 95.00L532.50 96.79L536.25 98.58L540.00 100.36M531.40 86.59L534.80 88.65L538.20 90.71L541.60 92.76L545.00 94.82M537.80 84.77L540.85 86.77L543.90 88.76L546.95 90.76L550.00 92.76M544.20 82.51L546.90 84.51L549.60 86.50L552.30 88.50L555.00 90.50" fill="none" stroke="#2b2b2b" stroke-width="1.5" stroke-linejoin="round" stroke-linecap="round"/>
<path d="M529.2 70.2H538.2V77.0L533.7 84.2L529.2 77.0Z" fill="#fff" stroke="#2b2b2b" stroke-width="1"/>
<path d="M529.5 70.2H531.6V76.4H529.5ZM532.4000000000001 70.2H535.0V77.2H532.4000000000001ZM535.8000000000001 70.2H537.9000000000001V76.4H535.8000000000001Z" fill="#2b2b2b"/>
<path d="M532.1 81.60000000000001H535.3000000000001L533.7 84.4Z" fill="#2b2b2b"/>
<rect x="575.2" y="77.0" width="1.2" height="1.2" fill="#bdbdbd"/><rect x="578.1" y="78.6" width="1.2" height="1.2" fill="#bdbdbd"/>
<rect x="575.2" y="80.2" width="1.2" height="1.2" fill="#bdbdbd"/><rect x="578.1" y="81.8" width="1.2" height="1.2" fill="#bdbdbd"/>
<rect x="575.2" y="83.4" width="1.2" height="1.2" fill="#bdbdbd"/><rect x="578.1" y="85.0" width="1.2" height="1.2" fill="#bdbdbd"/>
<rect x="575.2" y="86.6" width="1.2" height="1.2" fill="#bdbdbd"/><rect x="578.1" y="88.2" width="1.2" height="1.2" fill="#bdbdbd"/>
<rect x="575.2" y="89.8" width="1.2" height="1.2" fill="#bdbdbd"/><rect x="578.1" y="91.4" width="1.2" height="1.2" fill="#bdbdbd"/>
<path d="M590 70H599V76.8L594.5 84L590 76.8Z" fill="#fff" stroke="#2b2b2b" stroke-width="1"/>
<path d="M590.3 70H592.4V76.2H590.3ZM593.2 70H595.8V77H593.2ZM596.6 70H598.7V76.2H596.6Z" fill="#2b2b2b"/>
<path d="M592.9 81.4H596.1L594.5 84.2Z" fill="#2b2b2b"/>
<path d="M598.6 81.4H619.2L609.8 90.05200000000002V96.3L605.8 99.8V90.05200000000002Z" fill="#2b2b2b"/>
<circle cx="612.6" cy="90.4" r="2.9" fill="none" stroke="#2b2b2b" stroke-width="1.7"/>
<path d="M847.1 84.10000000000001H854.9L851.0 88.3Z" fill="#333"/>
<rect x="866.2" y="72" width="1" height="26.5" fill="#d2d2d2"/>
<path d="M992.9 84.10000000000001H999.3000000000001L996.1 88.3Z" fill="#9a9a9a"/>
<path d="M1150.9999999999998 84.10000000000001H1157.3999999999999L1154.1999999999998 88.3Z" fill="#9a9a9a"/>
<circle cx="1175.6" cy="75.6" r="4.3" fill="none" stroke="#b9b9b9" stroke-width="1.2" stroke-dasharray="9 3"/>
<path d="M1178 81.5H1199L1190.2 90.32V96.3L1186 99.8V90.32Z" fill="#b9b9b9"/>
<circle cx="1193" cy="89.8" r="2.9" fill="none" stroke="#b9b9b9" stroke-width="1.7"/>
<rect x="1220.2" y="77.0" width="1.2" height="1.2" fill="#bdbdbd"/><rect x="1223.1000000000001" y="78.6" width="1.2" height="1.2" fill="#bdbdbd"/>
<rect x="1220.2" y="80.2" width="1.2" height="1.2" fill="#bdbdbd"/><rect x="1223.1000000000001" y="81.8" width="1.2" height="1.2" fill="#bdbdbd"/>
<rect x="1220.2" y="83.4" width="1.2" height="1.2" fill="#bdbdbd"/><rect x="1223.1000000000001" y="85.0" width="1.2" height="1.2" fill="#bdbdbd"/>
<rect x="1220.2" y="86.6" width="1.2" height="1.2" fill="#bdbdbd"/><rect x="1223.1000000000001" y="88.2" width="1.2" height="1.2" fill="#bdbdbd"/>
<rect x="1220.2" y="89.8" width="1.2" height="1.2" fill="#bdbdbd"/><rect x="1223.1000000000001" y="91.4" width="1.2" height="1.2" fill="#bdbdbd"/>
<rect x="1239" y="74.8" width="24" height="22.5" fill="none" stroke="#2b2b2b" stroke-width="1.7" stroke-dasharray="3.2 2.2"/>
<circle cx="1240.8" cy="76.6" r="8.4" fill="#f6f6f6"/><circle cx="1252" cy="86.5" r="9.8" fill="#f4f4f4"/>
<path d="M1247.91,75.47L1247.91,77.73L1245.98,77.84L1245.34,79.38L1246.62,80.83L1245.03,82.42L1243.58,81.14L1242.04,81.78L1241.93,83.71L1239.67,83.71L1239.56,81.78L1238.02,81.14L1236.57,82.42L1234.98,80.83L1236.26,79.38L1235.62,77.84L1233.69,77.73L1233.69,75.47L1235.62,75.36L1236.26,73.82L1234.98,72.37L1236.57,70.78L1238.02,72.06L1239.56,71.42L1239.67,69.49L1241.93,69.49L1242.04,71.42L1243.58,72.06L1245.03,70.78L1246.62,72.37L1245.34,73.82L1245.98,75.36ZM1243.82,76.6A3.02,3.02 0 1 0 1237.78,76.6A3.02,3.02 0 1 0 1243.82,76.6Z" fill="#2b2b2b" fill-rule="evenodd"/>
<path d="M1260.49,85.15L1260.49,87.85L1258.19,87.99L1257.43,89.83L1258.96,91.55L1257.05,93.46L1255.33,91.93L1253.49,92.69L1253.35,94.99L1250.65,94.99L1250.51,92.69L1248.67,91.93L1246.95,93.46L1245.04,91.55L1246.57,89.83L1245.81,87.99L1243.51,87.85L1243.51,85.15L1245.81,85.01L1246.57,83.17L1245.04,81.45L1246.95,79.54L1248.67,81.07L1250.51,80.31L1250.65,78.01L1253.35,78.01L1253.49,80.31L1255.33,81.07L1257.05,79.54L1258.96,81.45L1257.43,83.17L1258.19,85.01ZM1255.61,86.5A3.61,3.61 0 1 0 1248.39,86.5A3.61,3.61 0 1 0 1255.61,86.5Z" fill="#2b2b2b" fill-rule="evenodd"/>
<rect x="1275.1" y="72" width="1" height="26.5" fill="#d2d2d2"/>
<path d="M1292 77.6H1298V91.7H1292ZM1310.4 77.6V91.7L1298 84.65Z" fill="#b9b9b9"/>
<path d="M1342 77.4V91.9L1329 84.65ZM1354.8 77.4V91.9L1341.8 84.65Z" fill="#2b2b2b"/>
<path d="M1389 77.4V91.9L1375.8 84.65Z" fill="#2b2b2b"/>
<rect x="1404.2" y="66.8" width="39.299999999999955" height="37.5" rx="3" fill="#dddddd" stroke="#b2b2b2" stroke-width="1"/>
<path d="M1416.6 77.4H1422.3V93H1416.6ZM1425.4 77.4H1431.1V93H1425.4Z" fill="#2b2b2b"/>
<path d="M1458.8 77.4V91.9L1472 84.65Z" fill="#2b2b2b"/>
<path d="M1492.6 77.4V91.9L1505.6 84.65ZM1505.4 77.4V91.9L1518.6 84.65Z" fill="#2b2b2b"/>
<path d="M1556.6 77.6H1550.6V91.7H1556.6ZM1537.2 77.6V91.7L1550.6 84.65Z" fill="#b9b9b9"/>
<rect x="1571.5" y="72" width="1" height="26.5" fill="#d2d2d2"/>
<rect x="1578.5" y="70.9" width="79" height="28.7" rx="3" fill="#fff" stroke="#b4b4b4"/>
<path d="M1636.3 71.4H1654.5a2.5 2.5 0 0 1 2.5 2.5V96.6a2.5 2.5 0 0 1 -2.5 2.5H1636.3Z" fill="#f4f4f4"/><rect x="1635.8" y="71.4" width="1" height="27.7" fill="#cfcfcf"/>
<path d="M1642.8 81L1646.6 76.8L1650.4 81ZM1642.8 89.6L1646.6 93.8L1650.4 89.6Z" fill="#444"/>
<path d="M19.3 737.6H32.4L36.6 741.8000000000001V754.4H19.3Z" fill="none" stroke="#2b2b2b" stroke-width="2.2" stroke-linejoin="miter"/>
<path d="M23.798000000000002 737.6H31.41V744.32H23.798000000000002Z" fill="#2b2b2b"/>
<rect x="27.950000000000003" y="738.6" width="1.903" height="5.039999999999986" fill="#f0f0f0"/>
<rect x="49.1" y="734" width="1" height="25" fill="#d2d2d2"/>
<path d="M62.300000000000004 746.6L71.2 737.8L80.1 746.6" fill="none" stroke="#2b2b2b" stroke-width="2.5" stroke-linejoin="miter"/>
<path d="M65.2 745.4V754.5H77.2V745.4" fill="none" stroke="#2b2b2b" stroke-width="2.3"/>
<path d="M69.0 754.6V748H73.4V754.6" fill="none" stroke="#2b2b2b" stroke-width="1.9"/>
<polygon points="99.20,738.20 99.20,750.40 102.10,747.60 104.80,753.80 107.10,752.80 104.50,746.90 108.60,746.70" fill="#2b2b2b"/>
<circle cx="134.4" cy="743.5" r="5.7" fill="none" stroke="#2b2b2b" stroke-width="2.3"/>
<path d="M138.51 747.45L145.3 754" stroke="#2b2b2b" stroke-width="3" stroke-linecap="butt"/>
<rect x="158.0" y="734" width="1" height="25" fill="#d2d2d2"/>
<path d="M183.2 738.6L190.8 744.6L181.2 754.2H176.6L172.4 750.2Z" fill="none" stroke="#2b2b2b" stroke-width="1.8" stroke-linejoin="round"/><path d="M183.2 738.6L190.8 744.6L185.4 750L177.8 744Z" fill="#2b2b2b"/><path d="M180 754.3H191.6" stroke="#2b2b2b" stroke-width="1.7"/>
<rect x="205" y="738.7" width="16.599999999999994" height="14.899999999999977" fill="#cacaca" stroke="#2b2b2b" stroke-width="1.9" stroke-dasharray="2.2 2"/>
<path d="M209.6 746H216.4" stroke="#2b2b2b" stroke-width="1.7"/>
<path d="M216.6 751.3H224.4L220.5 755.6Z" fill="#2b2b2b"/>
<rect x="230.5" y="731.5" width="31.100000000000023" height="29.899999999999977" rx="3" fill="#dddddd" stroke="#b2b2b2" stroke-width="1"/>
<path d="M240.13 739.32C244.83 738.20 246.57 742.20 250.05 743.48C254.40 745.40 255.27 750.20 251.79 753.40C248.31 756.28 243.09 754.68 241.35 751.00C239.61 747.00 235.26 741.40 240.13 739.32Z" fill="#c4c4c4" stroke="#2b2b2b" stroke-width="1.9" stroke-dasharray="2.2 2"/>
<path d="M243.4 747.4H250" stroke="#2b2b2b" stroke-width="1.7"/>
<path d="M249.6 751.3H257.6L253.60000000000002 755.6Z" fill="#2b2b2b"/>
<path d="M269.4 738.6H288.6L281.30400000000003 746.2L288.6 753.8H269.4Z" fill="#cacaca" stroke="#2b2b2b" stroke-width="1.9" stroke-dasharray="2.2 2"/>
<path d="M272.6 746H279.6" stroke="#2b2b2b" stroke-width="1.7"/>
<path d="M282.6 751.3H290.6L286.6 755.6Z" fill="#2b2b2b"/>
<rect x="299.9" y="734" width="1" height="25" fill="#d2d2d2"/>
<path d="M315.80 741.84A8.3 8.3 0 1 1 321.16 754.77" fill="none" stroke="#2b2b2b" stroke-width="2.1"/>
<path d="M311.96 737.60L312.36 745.80L319.96 742.80Z" fill="#2b2b2b"/>
<path d="M362.00 741.84A8.3 8.3 0 1 0 356.64 754.77" fill="none" stroke="#b9b9b9" stroke-width="2.1"/>
<path d="M365.84 737.60L365.44 745.80L357.84 742.80Z" fill="#b9b9b9"/>
<rect x="376.1" y="734" width="1" height="25" fill="#d2d2d2"/>
<circle cx="389.6" cy="746" r="1.6" fill="#2b2b2b"/><circle cx="395.3" cy="746" r="3" fill="#2b2b2b"/><circle cx="404.40000000000003" cy="746" r="4.7" fill="#2b2b2b"/>
<path d="M401.20000000000005 751.1H410.20000000000005L405.70000000000005 755.8Z" fill="#3a3a3a"/>
<rect x="421.8" y="741.6" width="18.399999999999977" height="8.799999999999955" fill="url(#rgb1)" stroke="#2b2b2b" stroke-width="1.5"/>
<path d="M433.4 750.6999999999999H442.59999999999997L438.0 755.4Z" fill="#3a3a3a"/>
<rect x="452.2" y="734" width="1" height="25" fill="#d2d2d2"/>
<circle cx="465.6" cy="746" r="1.6" fill="#2b2b2b"/><circle cx="471.3" cy="746" r="3" fill="#2b2b2b"/><circle cx="480.40000000000003" cy="746" r="4.7" fill="#2b2b2b"/>
<path d="M477.20000000000005 751.1H486.20000000000005L481.70000000000005 755.8Z" fill="#3a3a3a"/>
<rect x="497.8" y="741.6" width="18.400000000000034" height="8.799999999999955" fill="url(#rgb3)" stroke="#2b2b2b" stroke-width="1.5"/>
<path d="M509.40000000000003 750.6999999999999H518.6L514.0 755.4Z" fill="#3a3a3a"/>
<rect x="528.1" y="734" width="1" height="25" fill="#d2d2d2"/>
<path d="M555.6 749V736.8H544.2V754.6H553" fill="none" stroke="#2b2b2b" stroke-width="1.9"/><circle cx="544.2" cy="746" r="1.9" fill="#2b2b2b"/><circle cx="555.6" cy="746" r="1.9" fill="#2b2b2b"/>
<path d="M552.8 751.2H562L557.4 755.8Z" fill="#2b2b2b"/>
<path d="M556.4 748V752" stroke="#2b2b2b" stroke-width="1.6"/>
<path d="M579.05 734.01A6.2 6.2 0 0 0 587.35 734.01" fill="none" stroke="#2b2b2b" stroke-width="1.3" stroke-linecap="round"/>
<path d="M577.31 735.94A8.8 8.8 0 0 0 589.09 735.94" fill="none" stroke="#2b2b2b" stroke-width="1.3" stroke-linecap="round"/>
<path d="M575.57 737.87A11.4 11.4 0 0 0 590.83 737.87" fill="none" stroke="#2b2b2b" stroke-width="1.3" stroke-linecap="round"/>
<path d="M575.8 744.4H591.2L584.8 750.868V753.5L581.6 757V750.868Z" fill="#2b2b2b"/>
<circle cx="587.2" cy="749.8" r="2.1" fill="none" stroke="#2b2b2b" stroke-width="1.7"/>
<rect x="606.3" y="731.5" width="31.5" height="29.899999999999977" rx="3" fill="#dddddd" stroke="#b2b2b2" stroke-width="1"/>
<path d="M610 739.8Q612.6 737.4 615.2 739.4T620 739.2Q622 735.6 624 739.2Q626.6 741.4 629 739.4T634.2 739.6" fill="none" stroke="#2b2b2b" stroke-width="1.5"/><circle cx="622" cy="738.4" r="1.6" fill="#2b2b2b"/>
<path d="M620.0 742.1Q622 744.4 624.0 742.1" fill="none" stroke="#2b2b2b" stroke-width="2"/>
<path d="M618.4 746.1Q622 748.4 625.6 746.1" fill="none" stroke="#2b2b2b" stroke-width="2"/>
<path d="M616.6 750.1Q622 752.4 627.4 750.1" fill="none" stroke="#2b2b2b" stroke-width="2"/>
<path d="M615.4 753.7Q622 756.0 628.6 753.7" fill="none" stroke="#2b2b2b" stroke-width="2"/>
<path d="M645 743.4L648.3 746.6L645 749.8M649.6 743.4L652.9 746.6L649.6 749.8" fill="none" stroke="#111" stroke-width="1.6"/>
<path d="M697.3 961.6H710.4L714.6 965.8000000000001V978.6H697.3Z" fill="none" stroke="#c2c2c2" stroke-width="2.2" stroke-linejoin="miter"/>
<path d="M701.798 961.6H709.41V968.4H701.798Z" fill="#c2c2c2"/>
<rect x="705.95" y="962.6" width="1.9030000000000076" height="5.1" fill="#f0f0f0"/>
<rect x="727.1" y="958" width="1" height="25" fill="#d2d2d2"/>
<path d="M739.9000000000001 970.2L749.1 961.4L758.3 970.2" fill="none" stroke="#2b2b2b" stroke-width="2.5" stroke-linejoin="miter"/>
<path d="M742.8000000000001 969.0V978.5H755.4V969.0" fill="none" stroke="#2b2b2b" stroke-width="2.3"/>
<path d="M746.9 978.6V971.6H751.3000000000001V978.6" fill="none" stroke="#2b2b2b" stroke-width="1.9"/>
<rect x="770.0" y="958" width="1" height="25" fill="#d2d2d2"/>
<rect x="776.6" y="955.5" width="30.899999999999977" height="29.899999999999977" rx="3" fill="#dddddd" stroke="#b2b2b2" stroke-width="1"/>
<polygon points="787.00,961.80 787.00,974.24 789.96,971.39 792.71,977.71 795.06,976.69 792.41,970.67 796.59,970.47" fill="#2b2b2b"/>
<circle cx="822.6" cy="967.8" r="5.9" fill="none" stroke="#2b2b2b" stroke-width="2.3"/>
<path d="M826.85 971.89L833.2 978" stroke="#2b2b2b" stroke-width="3" stroke-linecap="butt"/>
<rect x="846.3" y="958" width="1" height="25" fill="#d2d2d2"/>
<circle cx="864.5" cy="966.5" r="5.3" fill="none" stroke="#2b2b2b" stroke-width="1.3"/><path d="M864.5 959.4V963.8M864.5 969.2V973.6M857.4 966.5H861.8M867.2 966.5H871.6" stroke="#2b2b2b" stroke-width="1.2"/><circle cx="864.5" cy="966.5" r="1" fill="#2b2b2b"/>
<polygon points="869.80,971.60 869.80,977.94 871.31,976.49 872.71,979.71 873.91,979.19 872.56,976.12 874.69,976.02" fill="#2b2b2b"/>
<rect x="893.2" y="962.4" width="16.199999999999932" height="15.200000000000045" fill="none" stroke="#2b2b2b" stroke-width="2.1" stroke-dasharray="2.4 2.1"/>
<path d="M928.53 961.56C933.23 960.31 934.97 964.76 938.45 966.18C942.80 968.32 943.67 973.66 940.19 977.22C936.71 980.42 931.49 978.64 929.75 974.55C928.01 970.10 923.66 963.87 928.53 961.56Z" fill="none" stroke="#2b2b2b" stroke-width="1.9" stroke-dasharray="2.2 2"/>
<path d="M957.4 961.6H976.4L969.18 970.1L976.4 978.6H957.4Z" fill="none" stroke="#2b2b2b" stroke-width="1.9" stroke-dasharray="2.2 2"/>
<rect x="988.1" y="958" width="1" height="25" fill="#d2d2d2"/>
<path d="M1003.32 965.78A8.4 8.4 0 1 1 1008.74 978.87" fill="none" stroke="#b9b9b9" stroke-width="2.1"/>
<path d="M999.48 961.55L999.88 969.75L1007.48 966.75Z" fill="#b9b9b9"/>
<path d="M1049.28 965.78A8.4 8.4 0 1 0 1043.86 978.87" fill="none" stroke="#b9b9b9" stroke-width="2.1"/>
<path d="M1053.12 961.55L1052.72 969.75L1045.12 966.75Z" fill="#b9b9b9"/>
<rect x="1063.9" y="958" width="1" height="25" fill="#d2d2d2"/>
<circle cx="1077.4" cy="969.9" r="1.6" fill="#2b2b2b"/><circle cx="1083.1000000000001" cy="969.9" r="3" fill="#2b2b2b"/><circle cx="1092.2" cy="969.9" r="4.7" fill="#2b2b2b"/>
<path d="M1089.0 975.0H1098.0L1093.5 979.6999999999999Z" fill="#3a3a3a"/>
<path d="M1119.72,963.95L1119.72,966.05L1117.92,966.16L1117.33,967.59L1118.52,968.94L1117.04,970.42L1115.69,969.23L1114.26,969.82L1114.15,971.62L1112.05,971.62L1111.94,969.82L1110.51,969.23L1109.16,970.42L1107.68,968.94L1108.87,967.59L1108.28,966.16L1106.48,966.05L1106.48,963.95L1108.28,963.84L1108.87,962.41L1107.68,961.06L1109.16,959.58L1110.51,960.77L1111.94,960.18L1112.05,958.38L1114.15,958.38L1114.26,960.18L1115.69,960.77L1117.04,959.58L1118.52,961.06L1117.33,962.41L1117.92,963.84ZM1115.91,965A2.81,2.81 0 1 0 1110.29,965A2.81,2.81 0 1 0 1115.91,965Z" fill="#2b2b2b" fill-rule="evenodd"/>
<path d="M1131.20,973.08L1131.20,975.52L1129.11,975.65L1128.42,977.32L1129.81,978.88L1128.08,980.61L1126.52,979.22L1124.85,979.91L1124.72,982.00L1122.28,982.00L1122.15,979.91L1120.48,979.22L1118.92,980.61L1117.19,978.88L1118.58,977.32L1117.89,975.65L1115.80,975.52L1115.80,973.08L1117.89,972.95L1118.58,971.28L1117.19,969.72L1118.92,967.99L1120.48,969.38L1122.15,968.69L1122.28,966.60L1124.72,966.60L1124.85,968.69L1126.52,969.38L1128.08,967.99L1129.81,969.72L1128.42,971.28L1129.11,972.95ZM1126.78,974.3A3.28,3.28 0 1 0 1120.22,974.3A3.28,3.28 0 1 0 1126.78,974.3Z" fill="#2b2b2b" fill-rule="evenodd"/>
<rect x="1136.8" y="955.6" width="63.6" height="30.6" rx="3" fill="#fafafa" stroke="#b4b4b4"/>
<rect x="1140.6" y="959.8" width="42.8" height="22.2" fill="url(#rgb2)" stroke="#9a9a9a" stroke-width="0.9"/>
<path d="M1185.4 968.4H1194L1189.7 973Z" fill="#3a3a3a"/>
<rect x="1206.1" y="958" width="1" height="25" fill="#d2d2d2"/>
<path d="M1218 961H1223.2L1227.4 965.2V970.4H1218Z" fill="none" stroke="#2b2b2b" stroke-width="1.5" stroke-linejoin="miter"/>
<path d="M1220.444 961H1224.5800000000002V964.76H1220.444Z" fill="#2b2b2b"/>
<rect x="1222.7" y="962" width="1.03400000000001" height="2.819999999999993" fill="#f0f0f0"/>
<path d="M1227.94 973.17A4 4 0 0 0 1234.06 973.17" fill="none" stroke="#2b2b2b" stroke-width="1.5" stroke-linecap="round"/>
<path d="M1225.79 974.97A6.8 6.8 0 0 0 1236.21 974.97" fill="none" stroke="#2b2b2b" stroke-width="1.5" stroke-linecap="round"/>
<path d="M1223.65 976.77A9.6 9.6 0 0 0 1238.35 976.77" fill="none" stroke="#2b2b2b" stroke-width="1.5" stroke-linecap="round"/>
<circle cx="1231" cy="970.6" r="1.5" fill="#2b2b2b"/>
<rect x="2685.4" y="955.5" width="31.199999999999818" height="30.100000000000023" rx="3" fill="#dddddd" stroke="#b2b2b2" stroke-width="1"/>
<circle cx="2691.8" cy="972" r="2.15" fill="#2b2b2b"/>
<circle cx="2696.1" cy="968.4" r="2.15" fill="#2b2b2b"/>
<circle cx="2702" cy="967.8" r="2.15" fill="#2b2b2b"/>
<circle cx="2705.7" cy="972.3" r="2.15" fill="#2b2b2b"/>
<circle cx="2710.1" cy="969.3" r="2.15" fill="#2b2b2b"/>
<path d="M2722.4 964.4Q2725 961.8 2727.6 963.6T2731.6 963.6L2733.8 961.6L2736 963.6Q2738.6 965.2 2741 963.4T2745.8 964.4" fill="none" stroke="#b9b9b9" stroke-width="1.3"/>
<path d="M2731.6 965.6L2724 977.6" stroke="#b9b9b9" stroke-width="4.6" stroke-dasharray="1.6 2"/><path d="M2736.4 965.6L2741.6 974.6" stroke="#b9b9b9" stroke-width="4.2" stroke-dasharray="1.5 2"/>
<path d="M2737.2 975.4H2746L2741.6 979.8Z" fill="#9c9c9c"/>
<path d="M2762 966.2Q2767 961 2772 966.2Q2767 971.4 2762 966.2Z" fill="#2b2b2b"/>
<path d="M2759.6 966.2A7.6 7.6 0 0 0 2774.4 966.2" fill="none" stroke="#2b2b2b" stroke-width="1.7"/><path d="M2756 966.8A11.2 11.2 0 0 0 2778 966.8" fill="none" stroke="#2b2b2b" stroke-width="1.9"/>
<path d="M2770.4 975.4H2779L2774.7 979.8Z" fill="#333"/>
<rect x="2793" y="962.2" width="14" height="9.8" fill="#fff" stroke="#2b2b2b" stroke-width="2.1"/><path d="M2796 965.4H2804M2796 968.8H2804" stroke="#2b2b2b" stroke-width="1.5"/>
<path d="M2803 975.4H2812L2807.5 979.8Z" fill="#333"/>
<rect x="2847.4" y="120.4" width="1.1" height="1.1" fill="#c4c4c4"/>
<rect x="2849.5" y="122.0" width="1.1" height="1.1" fill="#c4c4c4"/>
<rect x="2851.6" y="120.4" width="1.1" height="1.1" fill="#c4c4c4"/>
<rect x="2853.7" y="122.0" width="1.1" height="1.1" fill="#c4c4c4"/>
<rect x="2855.8" y="120.4" width="1.1" height="1.1" fill="#c4c4c4"/>
<rect x="2857.9" y="122.0" width="1.1" height="1.1" fill="#c4c4c4"/>
<rect x="2860.0" y="120.4" width="1.1" height="1.1" fill="#c4c4c4"/>
<rect x="2862.1" y="122.0" width="1.1" height="1.1" fill="#c4c4c4"/>
<path d="M2845.2 140.6H2862.6V157.4H2845.2ZM2851 140.6V157.4M2856.8 140.6V157.4M2845.2 146.2H2862.6M2845.2 151.8H2862.6" fill="none" stroke="#2b2b2b" stroke-width="1.7"/>
<rect x="2834.4" y="170.3" width="39.19999999999982" height="38.29999999999998" rx="3" fill="#dddddd" stroke="#b2b2b2" stroke-width="1"/>
<path d="M2854.0 181.4L2839.6 188.8M2854.0 181.4L2868.4 188.8M2858.8 183.9L2844.4 191.3M2849.2 183.9L2863.6 191.3M2863.6 186.3L2849.2 193.7M2844.4 186.3L2858.8 193.7M2868.4 188.8L2854.0 196.2M2839.6 188.8L2854.0 196.2" fill="none" stroke="#2b2b2b" stroke-width="1.6" stroke-linejoin="round"/>
<rect x="2840.2" y="214.2" width="27.6" height="1" fill="#d4d4d4"/>
<path d="M2854.00 228.39L2863.20 232.99L2863.20 243.29L2854.00 248.35L2844.80 243.29L2844.80 232.99ZM2854.00 228.39L2854.00 239.15M2854.00 239.15L2844.80 243.29M2854.00 239.15L2863.20 243.29M2847.87 231.45L2847.87 241.91M2857.07 229.92L2857.07 240.53M2844.80 236.42L2854.00 231.98M2854.00 231.98L2863.20 236.42M2850.93 229.92L2850.93 240.53M2860.13 231.45L2860.13 241.91M2844.80 239.86L2854.00 235.56M2854.00 235.56L2863.20 239.86" fill="none" stroke="#2b2b2b" stroke-width="1.2" stroke-linejoin="round"/>
<path d="M2839.5 226.0L2845.1 231.6" stroke="#2b2b2b" stroke-width="2"/>
<path d="M2846.5 233.0L2840.7 232.2L2845.7 227.2Z" fill="#2b2b2b"/>
<path d="M2839.5 252.0L2845.1 246.4" stroke="#2b2b2b" stroke-width="2"/>
<path d="M2846.5 245.0L2840.7 245.8L2845.7 250.8Z" fill="#2b2b2b"/>
<path d="M2868.5 226.0L2862.9 231.6" stroke="#2b2b2b" stroke-width="2"/>
<path d="M2861.5 233.0L2867.3 232.2L2862.3 227.2Z" fill="#2b2b2b"/>
<path d="M2868.5 252.0L2862.9 246.4" stroke="#2b2b2b" stroke-width="2"/>
<path d="M2861.5 245.0L2867.3 245.8L2862.3 250.8Z" fill="#2b2b2b"/>
<path d="M2854 268.8L2862.8 273.4V283.6L2854 288.4L2845.2 283.6V273.4ZM2845.2 273.4L2854 278L2862.8 273.4M2854 278V288.4" fill="none" stroke="#2b2b2b" stroke-width="1.7" stroke-linejoin="round"/>
<path d="M2839.5 265.6L2845.1 271.20000000000005" stroke="#2b2b2b" stroke-width="2"/>
<path d="M2846.5 272.6L2840.7 271.80000000000007L2845.7 266.80000000000007Z" fill="#2b2b2b"/>
<path d="M2839.5 291.6L2845.1 286.0" stroke="#2b2b2b" stroke-width="2"/>
<path d="M2846.5 284.6L2840.7 285.4L2845.7 290.4Z" fill="#2b2b2b"/>
<path d="M2868.5 265.6L2862.9 271.20000000000005" stroke="#2b2b2b" stroke-width="2"/>
<path d="M2861.5 272.6L2867.3 271.80000000000007L2862.3 266.80000000000007Z" fill="#2b2b2b"/>
<path d="M2868.5 291.6L2862.9 286.0" stroke="#2b2b2b" stroke-width="2"/>
<path d="M2861.5 284.6L2867.3 285.4L2862.3 290.4Z" fill="#2b2b2b"/>
<rect x="2840.2" y="304" width="27.6" height="1" fill="#d4d4d4"/>
<polygon points="2847.60,318.20 2847.60,334.30 2851.43,330.61 2854.99,338.79 2858.03,337.47 2854.60,329.68 2860.01,329.42" fill="#2b2b2b"/>
<rect x="2840.2" y="353.6" width="27.6" height="1" fill="#d4d4d4"/>
<rect x="2842.4" y="367.4" width="23.0" height="22.600000000000023" fill="none" stroke="#2b2b2b" stroke-width="1.8" stroke-dasharray="2.6 2.4"/>
<circle cx="2842.4" cy="367.4" r="2.2" fill="#f6f6f6" stroke="#2b2b2b" stroke-width="1.2"/>
<circle cx="2865.4" cy="367.4" r="2.2" fill="#f6f6f6" stroke="#2b2b2b" stroke-width="1.2"/>
<circle cx="2842.4" cy="390" r="2.2" fill="#f6f6f6" stroke="#2b2b2b" stroke-width="1.2"/>
<circle cx="2865.4" cy="390" r="2.2" fill="#f6f6f6" stroke="#2b2b2b" stroke-width="1.2"/>
<circle cx="2854" cy="378.8" r="2" fill="#2b2b2b"/>
<path d="M2841.6 407.6H2866.4L2857 419L2866 430H2841.6Z" fill="none" stroke="#2b2b2b" stroke-width="1.9" stroke-dasharray="2.4 2.2"/>
<path d="M2846.39 447.10C2852.98 445.36 2855.42 451.56 2860.30 453.54C2866.40 456.52 2867.62 463.96 2862.74 468.92C2857.86 473.38 2850.54 470.90 2848.10 465.20C2845.66 459.00 2839.56 450.32 2846.39 447.10Z" fill="none" stroke="#2b2b2b" stroke-width="1.9" stroke-dasharray="2.2 2"/>
<rect x="2842.8" y="486.6" width="22.799999999999727" height="24.799999999999955" fill="none" stroke="#2b2b2b" stroke-width="1.7"/><path d="M2842.8 505.6H2865.6M2842.8 508.4H2865.6" stroke="#2b2b2b" stroke-width="1.1"/><circle cx="2854" cy="498.8" r="1.5" fill="none" stroke="#2b2b2b" stroke-width="1.1"/>
<circle cx="2842.8" cy="486.6" r="2" fill="#f6f6f6" stroke="#2b2b2b" stroke-width="1.1"/>
<circle cx="2865.6" cy="486.6" r="2" fill="#f6f6f6" stroke="#2b2b2b" stroke-width="1.1"/>
<circle cx="2842.8" cy="511.4" r="2" fill="#f6f6f6" stroke="#2b2b2b" stroke-width="1.1"/>
<circle cx="2865.6" cy="511.4" r="2" fill="#f6f6f6" stroke="#2b2b2b" stroke-width="1.1"/>
<rect x="2843" y="526.4" width="22" height="25" fill="none" stroke="#2b2b2b" stroke-width="1.7"/>
<path d="M2846.4 529.6L2865.6 538.6L2861.2 548.6L2842 539.4Z" fill="none" stroke="#2b2b2b" stroke-width="1.5" stroke-dasharray="2.2 1.8"/><circle cx="2854" cy="539" r="2.1" fill="#2b2b2b"/>
<circle cx="2846.4" cy="529.6" r="1.6" fill="#f6f6f6" stroke="#2b2b2b" stroke-width="1"/>
<circle cx="2865.6" cy="538.6" r="1.6" fill="#f6f6f6" stroke="#2b2b2b" stroke-width="1"/>
<circle cx="2861.2" cy="548.6" r="1.6" fill="#f6f6f6" stroke="#2b2b2b" stroke-width="1"/>
<circle cx="2842" cy="539.4" r="1.6" fill="#f6f6f6" stroke="#2b2b2b" stroke-width="1"/>
<path d="M2843 589.6L2866.4 568.8" stroke="#2b2b2b" stroke-width="2" stroke-dasharray="1.8 2.6"/><path d="M2849.6 567.6L2859.2 572.4L2857.6 588.6L2848.4 584Z" fill="none" stroke="#2b2b2b" stroke-width="1.3" stroke-dasharray="2 1.6" transform="rotate(38 2854 578.6)"/><circle cx="2854" cy="578.8" r="2" fill="#2b2b2b"/>
<circle cx="2851" cy="568.2" r="1.5" fill="#f6f6f6" stroke="#2b2b2b" stroke-width="1"/>
<circle cx="2844.6" cy="575.2" r="1.5" fill="#f6f6f6" stroke="#2b2b2b" stroke-width="1"/>
<circle cx="2863.4" cy="582.6" r="1.5" fill="#f6f6f6" stroke="#2b2b2b" stroke-width="1"/>
<circle cx="2857" cy="589.2" r="1.5" fill="#f6f6f6" stroke="#2b2b2b" stroke-width="1"/>
<rect x="2840.2" y="604" width="27.6" height="1" fill="#d4d4d4"/>
<path d="M2842 616V641.4H2867" fill="none" stroke="#2b2b2b" stroke-width="1.7"/><path d="M2844.4 638.6V630.4L2850 624L2856 630.6L2865.6 622V638.6Z" fill="#2b2b2b"/>
<g transform="rotate(-33 2854 669.2)"><rect x="2839.6" y="664.4" width="28.8" height="9.6" fill="none" stroke="#2b2b2b" stroke-width="1.8"/><path d="M2844.4 674V670.6M2849.2 674V669M2854 674V670.6M2858.8 674V669M2863.6 674V670.6" stroke="#2b2b2b" stroke-width="1.3"/></g>
<rect x="2840.2" y="693.6" width="27.6" height="1" fill="#d4d4d4"/>
<rect x="2834.4" y="700.6" width="39.40000000000009" height="38.19999999999993" rx="3" fill="#dddddd" stroke="#b2b2b2" stroke-width="1"/>
<rect x="2841.2" y="713.4" width="25.8" height="11.6" fill="url(#rgb1)" stroke="#2b2b2b" stroke-width="1.8"/>
<path d="M2854.00 744.17L2867.00 750.67L2867.00 765.23L2854.00 772.38L2841.00 765.23L2841.00 750.67ZM2854.00 744.17L2854.00 759.38M2854.00 759.38L2841.00 765.23M2854.00 759.38L2867.00 765.23M2845.33 748.50L2845.33 763.28M2858.33 746.34L2858.33 761.33M2841.00 755.52L2854.00 749.24M2854.00 749.24L2867.00 755.52M2849.67 746.34L2849.67 761.33M2862.67 748.50L2862.67 763.28M2841.00 760.38L2854.00 754.31M2854.00 754.31L2867.00 760.38" fill="none" stroke="#2b2b2b" stroke-width="1.2" stroke-linejoin="round"/>
<path d="M2860 794.6Q2854 791.4 2846.6 793Q2841.2 795 2842.6 799" fill="none" stroke="#2b2b2b" stroke-width="2.8"/><path d="M2857.2 790.2L2866.6 795.8L2856.8 799.6Z" fill="#2b2b2b"/>
<path d="M2848 803.4Q2854 806.6 2861.4 805Q2866.8 803 2865.4 799" fill="none" stroke="#2b2b2b" stroke-width="2.8"/><path d="M2850.8 807.8L2841.4 802.2L2851.2 798.4Z" fill="#2b2b2b"/>
<path d="M2854 828.4L2865 834.4M2865 834.4L2865 845.6M2865 845.6L2854 851.6M2854 851.6L2843 845.6M2843 845.6L2843 834.4M2843 834.4L2854 828.4M2843 834.4L2854 839.8M2854 839.8L2865 834.4M2854 839.8L2854 851.6" fill="none" stroke="#2b2b2b" stroke-width="1.8"/>
<circle cx="2854" cy="828.4" r="2.5" fill="#2b2b2b"/>
<circle cx="2865" cy="834.4" r="2.5" fill="#2b2b2b"/>
<circle cx="2865" cy="845.6" r="2.5" fill="#2b2b2b"/>
<circle cx="2854" cy="851.6" r="2.5" fill="#2b2b2b"/>
<circle cx="2843" cy="845.6" r="2.5" fill="#2b2b2b"/>
<circle cx="2843" cy="834.4" r="2.5" fill="#2b2b2b"/>
<circle cx="2854" cy="839.8" r="2.5" fill="#2b2b2b"/></svg>
<span class="t" style="left:1599.13px;top:75.60px;font-size:15.5px;line-height:20px;color:#222;">2.50</span>
</body></html>
